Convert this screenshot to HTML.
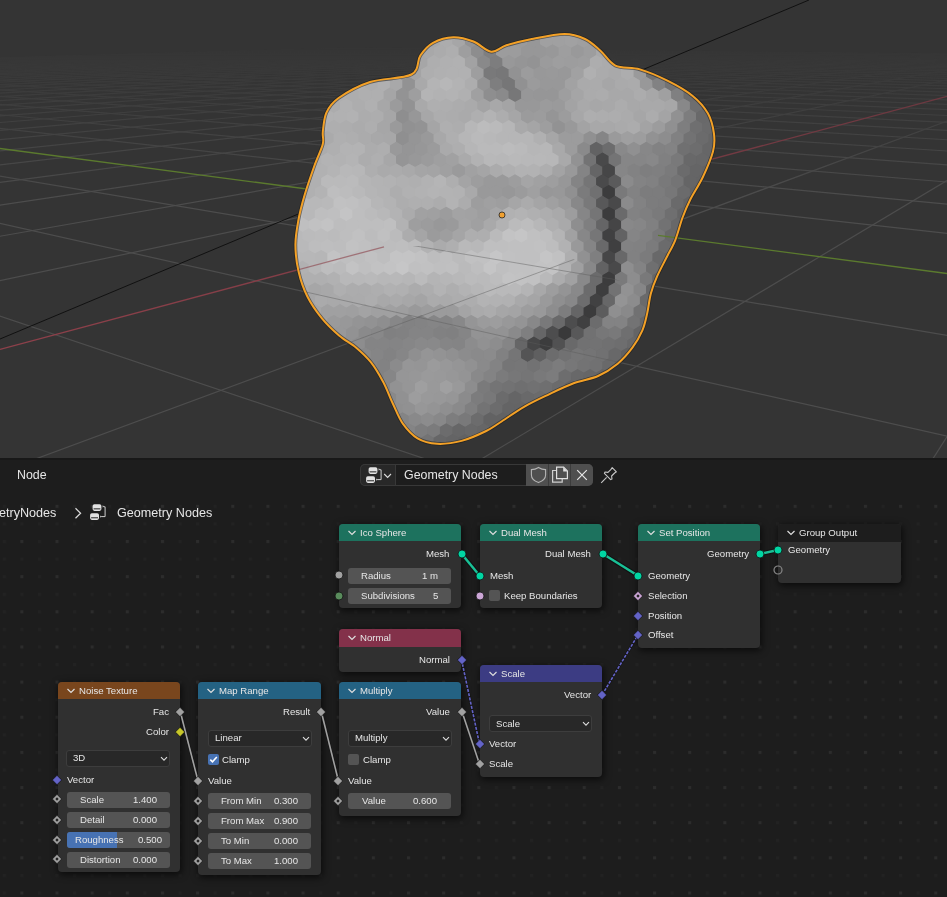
<!DOCTYPE html>
<html><head><meta charset="utf-8"><style>
html,body{margin:0;padding:0;width:947px;height:897px;overflow:hidden;background:#1d1d1d}
body{position:relative;font-family:"Liberation Sans",sans-serif}
.ab{position:absolute}
.t{position:absolute;height:20px;line-height:20px;white-space:nowrap;will-change:transform}
.nd{position:absolute;background:#303030;border-radius:4px;box-shadow:1px 2px 7px 1px rgba(0,0,0,0.6)}
.hd{position:absolute;border-radius:4px 4px 0 0}
.fd{position:absolute;height:16px;background:#545454;border-radius:3px;overflow:hidden}
.dd{position:absolute;height:17px;background:#282828;border-radius:3px;box-sizing:border-box;border:1px solid #3d3d3d}
.cb{position:absolute;width:11px;height:11px;background:#545454;border-radius:2px}
#ne{position:absolute;left:0;top:458px;width:947px;height:439px;background-color:#1d1d1d;
background-image:radial-gradient(circle at 1px 1px,#2c2c2c 1px,transparent 1.2px);
background-size:35px 35px;background-position:21.5px 47.5px}
</style></head><body>
<svg width="947" height="458" viewBox="0 0 947 458" style="position:absolute;left:0;top:0">
<defs><clipPath id="bc"><path d="M411.4,74.5 C419.8,70.1 416.7,60.8 420.3,55.5 C423.9,50.2 427.5,45.8 433.0,42.8 C438.5,39.8 446.4,37.4 453.2,37.2 C459.9,37.0 467.2,39.1 473.5,41.5 C479.8,43.9 485.7,51.1 491.2,51.7 C496.7,52.3 499.6,47.4 506.4,45.3 C513.2,43.2 522.1,40.9 531.8,39.0 C541.5,37.1 555.8,34.0 564.7,34.0 C573.6,34.0 579.1,36.3 585.0,39.0 C590.9,41.7 595.1,46.0 600.2,50.4 C605.3,54.8 608.8,62.4 615.4,65.6 C622.0,68.8 631.3,66.9 640.0,69.4 C648.7,71.9 658.6,76.3 667.4,80.7 C676.2,85.1 685.9,90.5 692.7,96.0 C699.5,101.5 704.5,107.3 708.0,113.6 C711.5,119.9 713.2,127.7 714.0,134.0 C714.8,140.3 714.9,144.4 713.0,151.6 C711.1,158.8 706.7,169.0 702.9,177.0 C699.1,185.0 693.6,193.1 690.2,199.8 C686.8,206.6 685.1,210.8 682.6,217.5 C680.1,224.2 678.0,233.2 675.4,239.8 C672.8,246.4 669.9,250.9 666.8,257.0 C663.7,263.1 659.7,270.5 657.0,276.6 C654.3,282.7 652.4,287.7 650.8,293.8 C649.2,299.9 648.6,307.3 647.2,313.4 C645.8,319.5 644.8,324.9 642.3,330.6 C639.8,336.3 636.5,342.2 632.4,347.7 C628.3,353.2 623.4,359.0 617.7,363.7 C612.0,368.4 605.5,372.7 598.1,376.0 C590.8,379.3 581.8,380.2 573.6,383.3 C565.4,386.4 557.2,390.4 549.0,394.3 C540.8,398.2 532.7,401.9 524.5,406.6 C516.3,411.3 506.4,418.4 500.0,422.5 C493.6,426.6 492.6,427.9 486.2,431.0 C479.8,434.1 469.8,438.8 461.6,440.9 C453.4,443.0 444.5,444.2 437.1,443.8 C429.8,443.4 423.2,441.8 417.5,438.4 C411.8,435.0 406.9,429.4 402.8,423.7 C398.7,418.0 396.3,410.9 393.0,404.0 C389.7,397.1 386.9,388.9 383.2,382.0 C379.5,375.1 375.5,368.1 371.0,362.4 C366.5,356.7 361.5,352.2 356.2,347.7 C350.9,343.2 344.7,340.3 339.0,335.4 C333.3,330.5 327.2,324.8 321.9,318.3 C316.6,311.8 311.1,304.0 307.2,296.2 C303.3,288.4 300.6,280.3 298.6,271.7 C296.6,263.1 295.4,253.4 295.4,244.7 C295.4,236.0 297.0,227.8 298.5,219.5 C300.0,211.2 302.0,203.9 304.6,195.0 C307.2,186.1 311.3,174.5 314.3,166.0 C317.3,157.5 321.4,149.7 322.8,144.0 C324.2,138.3 322.2,137.2 322.8,132.0 C323.4,126.8 323.8,118.3 326.4,112.6 C329.0,106.9 331.3,103.1 338.6,98.0 C345.9,92.9 357.9,85.9 370.0,82.0 C382.1,78.1 403.0,78.9 411.4,74.5 Z"/></clipPath>
<filter id="b8" filterUnits="userSpaceOnUse" x="200" y="0" width="600" height="458"><feGaussianBlur stdDeviation="8"/></filter>
<filter id="b4" filterUnits="userSpaceOnUse" x="200" y="0" width="600" height="458"><feGaussianBlur stdDeviation="4"/></filter>
<filter id="b15" filterUnits="userSpaceOnUse" x="200" y="0" width="600" height="458"><feGaussianBlur stdDeviation="15"/></filter>
<filter id="b10" filterUnits="userSpaceOnUse" x="200" y="0" width="600" height="458"><feGaussianBlur stdDeviation="10"/></filter>
<filter id="b2" filterUnits="userSpaceOnUse" x="200" y="0" width="600" height="458"><feGaussianBlur stdDeviation="2"/></filter>
<filter id="b3" filterUnits="userSpaceOnUse" x="200" y="0" width="600" height="458"><feGaussianBlur stdDeviation="3"/></filter>
<filter id="b5" filterUnits="userSpaceOnUse" x="200" y="0" width="600" height="458"><feGaussianBlur stdDeviation="5"/></filter>
<filter id="b6" filterUnits="userSpaceOnUse" x="200" y="0" width="600" height="458"><feGaussianBlur stdDeviation="6"/></filter>
<pattern id="hexp" patternUnits="userSpaceOnUse" x="3" y="5" width="91.000" height="67.550">
<polygon points="-6.5,-3.8 -13.0,-7.5 -13.0,-15.0 -6.5,-18.8 -0.0,-15.0 0.0,-7.5" fill="#fff" fill-opacity="0.031"/>
<polygon points="6.5,-3.8 -0.0,-7.5 0.0,-15.0 6.5,-18.8 13.0,-15.0 13.0,-7.5" fill="#fff" fill-opacity="0.036"/>
<polygon points="19.5,-3.8 13.0,-7.5 13.0,-15.0 19.5,-18.8 26.0,-15.0 26.0,-7.5" fill="#fff" fill-opacity="0.017"/>
<polygon points="32.5,-3.8 26.0,-7.5 26.0,-15.0 32.5,-18.8 39.0,-15.0 39.0,-7.5" fill="#fff" fill-opacity="0.001"/>
<polygon points="45.5,-3.8 39.0,-7.5 39.0,-15.0 45.5,-18.8 52.0,-15.0 52.0,-7.5" fill="#000" fill-opacity="0.039"/>
<polygon points="58.5,-3.8 52.0,-7.5 52.0,-15.0 58.5,-18.8 65.0,-15.0 65.0,-7.5" fill="#000" fill-opacity="0.004"/>
<polygon points="71.5,-3.8 65.0,-7.5 65.0,-15.0 71.5,-18.8 78.0,-15.0 78.0,-7.5" fill="#000" fill-opacity="0.042"/>
<polygon points="84.5,-3.8 78.0,-7.5 78.0,-15.0 84.5,-18.8 91.0,-15.0 91.0,-7.5" fill="#fff" fill-opacity="0.031"/>
<polygon points="97.5,-3.8 91.0,-7.5 91.0,-15.0 97.5,-18.8 104.0,-15.0 104.0,-7.5" fill="#fff" fill-opacity="0.036"/>
<polygon points="-13.0,7.5 -19.5,3.8 -19.5,-3.8 -13.0,-7.5 -6.5,-3.8 -6.5,3.8" fill="#fff" fill-opacity="0.035"/>
<polygon points="0.0,7.5 -6.5,3.8 -6.5,-3.8 -0.0,-7.5 6.5,-3.8 6.5,3.8" fill="#fff" fill-opacity="0.041"/>
<polygon points="13.0,7.5 6.5,3.8 6.5,-3.8 13.0,-7.5 19.5,-3.8 19.5,3.8" fill="#000" fill-opacity="0.044"/>
<polygon points="26.0,7.5 19.5,3.8 19.5,-3.8 26.0,-7.5 32.5,-3.8 32.5,3.8" fill="#fff" fill-opacity="0.055"/>
<polygon points="39.0,7.5 32.5,3.8 32.5,-3.8 39.0,-7.5 45.5,-3.8 45.5,3.8" fill="#000" fill-opacity="0.031"/>
<polygon points="52.0,7.5 45.5,3.8 45.5,-3.8 52.0,-7.5 58.5,-3.8 58.5,3.8" fill="#000" fill-opacity="0.032"/>
<polygon points="65.0,7.5 58.5,3.8 58.5,-3.8 65.0,-7.5 71.5,-3.8 71.5,3.8" fill="#fff" fill-opacity="0.015"/>
<polygon points="78.0,7.5 71.5,3.8 71.5,-3.8 78.0,-7.5 84.5,-3.8 84.5,3.8" fill="#fff" fill-opacity="0.035"/>
<polygon points="91.0,7.5 84.5,3.8 84.5,-3.8 91.0,-7.5 97.5,-3.8 97.5,3.8" fill="#fff" fill-opacity="0.041"/>
<polygon points="-6.5,18.8 -13.0,15.0 -13.0,7.5 -6.5,3.8 -0.0,7.5 0.0,15.0" fill="#fff" fill-opacity="0.025"/>
<polygon points="6.5,18.8 -0.0,15.0 0.0,7.5 6.5,3.8 13.0,7.5 13.0,15.0" fill="#000" fill-opacity="0.043"/>
<polygon points="19.5,18.8 13.0,15.0 13.0,7.5 19.5,3.8 26.0,7.5 26.0,15.0" fill="#fff" fill-opacity="0.010"/>
<polygon points="32.5,18.8 26.0,15.0 26.0,7.5 32.5,3.8 39.0,7.5 39.0,15.0" fill="#000" fill-opacity="0.042"/>
<polygon points="45.5,18.8 39.0,15.0 39.0,7.5 45.5,3.8 52.0,7.5 52.0,15.0" fill="#fff" fill-opacity="0.057"/>
<polygon points="58.5,18.8 52.0,15.0 52.0,7.5 58.5,3.8 65.0,7.5 65.0,15.0" fill="#fff" fill-opacity="0.055"/>
<polygon points="71.5,18.8 65.0,15.0 65.0,7.5 71.5,3.8 78.0,7.5 78.0,15.0" fill="#fff" fill-opacity="0.045"/>
<polygon points="84.5,18.8 78.0,15.0 78.0,7.5 84.5,3.8 91.0,7.5 91.0,15.0" fill="#fff" fill-opacity="0.025"/>
<polygon points="97.5,18.8 91.0,15.0 91.0,7.5 97.5,3.8 104.0,7.5 104.0,15.0" fill="#000" fill-opacity="0.043"/>
<polygon points="-13.0,30.0 -19.5,26.3 -19.5,18.8 -13.0,15.0 -6.5,18.8 -6.5,26.3" fill="#000" fill-opacity="0.059"/>
<polygon points="0.0,30.0 -6.5,26.3 -6.5,18.8 -0.0,15.0 6.5,18.8 6.5,26.3" fill="#000" fill-opacity="0.055"/>
<polygon points="13.0,30.0 6.5,26.3 6.5,18.8 13.0,15.0 19.5,18.8 19.5,26.3" fill="#000" fill-opacity="0.052"/>
<polygon points="26.0,30.0 19.5,26.3 19.5,18.8 26.0,15.0 32.5,18.8 32.5,26.3" fill="#fff" fill-opacity="0.032"/>
<polygon points="39.0,30.0 32.5,26.3 32.5,18.8 39.0,15.0 45.5,18.8 45.5,26.3" fill="#000" fill-opacity="0.049"/>
<polygon points="52.0,30.0 45.5,26.3 45.5,18.8 52.0,15.0 58.5,18.8 58.5,26.3" fill="#000" fill-opacity="0.012"/>
<polygon points="65.0,30.0 58.5,26.3 58.5,18.8 65.0,15.0 71.5,18.8 71.5,26.3" fill="#000" fill-opacity="0.008"/>
<polygon points="78.0,30.0 71.5,26.3 71.5,18.8 78.0,15.0 84.5,18.8 84.5,26.3" fill="#000" fill-opacity="0.059"/>
<polygon points="91.0,30.0 84.5,26.3 84.5,18.8 91.0,15.0 97.5,18.8 97.5,26.3" fill="#000" fill-opacity="0.055"/>
<polygon points="-6.5,41.3 -13.0,37.5 -13.0,30.0 -6.5,26.3 -0.0,30.0 0.0,37.5" fill="#000" fill-opacity="0.008"/>
<polygon points="6.5,41.3 -0.0,37.5 0.0,30.0 6.5,26.3 13.0,30.0 13.0,37.5" fill="#fff" fill-opacity="0.012"/>
<polygon points="19.5,41.3 13.0,37.5 13.0,30.0 19.5,26.3 26.0,30.0 26.0,37.5" fill="#000" fill-opacity="0.012"/>
<polygon points="32.5,41.3 26.0,37.5 26.0,30.0 32.5,26.3 39.0,30.0 39.0,37.5" fill="#fff" fill-opacity="0.056"/>
<polygon points="45.5,41.3 39.0,37.5 39.0,30.0 45.5,26.3 52.0,30.0 52.0,37.5" fill="#000" fill-opacity="0.056"/>
<polygon points="58.5,41.3 52.0,37.5 52.0,30.0 58.5,26.3 65.0,30.0 65.0,37.5" fill="#000" fill-opacity="0.044"/>
<polygon points="71.5,41.3 65.0,37.5 65.0,30.0 71.5,26.3 78.0,30.0 78.0,37.5" fill="#000" fill-opacity="0.038"/>
<polygon points="84.5,41.3 78.0,37.5 78.0,30.0 84.5,26.3 91.0,30.0 91.0,37.5" fill="#000" fill-opacity="0.008"/>
<polygon points="97.5,41.3 91.0,37.5 91.0,30.0 97.5,26.3 104.0,30.0 104.0,37.5" fill="#fff" fill-opacity="0.012"/>
<polygon points="-13.0,52.5 -19.5,48.8 -19.5,41.3 -13.0,37.5 -6.5,41.3 -6.5,48.8" fill="#000" fill-opacity="0.009"/>
<polygon points="0.0,52.5 -6.5,48.8 -6.5,41.3 -0.0,37.5 6.5,41.3 6.5,48.8" fill="#000" fill-opacity="0.023"/>
<polygon points="13.0,52.5 6.5,48.8 6.5,41.3 13.0,37.5 19.5,41.3 19.5,48.8" fill="#000" fill-opacity="0.000"/>
<polygon points="26.0,52.5 19.5,48.8 19.5,41.3 26.0,37.5 32.5,41.3 32.5,48.8" fill="#fff" fill-opacity="0.039"/>
<polygon points="39.0,52.5 32.5,48.8 32.5,41.3 39.0,37.5 45.5,41.3 45.5,48.8" fill="#000" fill-opacity="0.030"/>
<polygon points="52.0,52.5 45.5,48.8 45.5,41.3 52.0,37.5 58.5,41.3 58.5,48.8" fill="#000" fill-opacity="0.050"/>
<polygon points="65.0,52.5 58.5,48.8 58.5,41.3 65.0,37.5 71.5,41.3 71.5,48.8" fill="#000" fill-opacity="0.055"/>
<polygon points="78.0,52.5 71.5,48.8 71.5,41.3 78.0,37.5 84.5,41.3 84.5,48.8" fill="#000" fill-opacity="0.009"/>
<polygon points="91.0,52.5 84.5,48.8 84.5,41.3 91.0,37.5 97.5,41.3 97.5,48.8" fill="#000" fill-opacity="0.023"/>
<polygon points="-6.5,63.8 -13.0,60.0 -13.0,52.5 -6.5,48.8 -0.0,52.5 0.0,60.0" fill="#fff" fill-opacity="0.031"/>
<polygon points="6.5,63.8 -0.0,60.0 0.0,52.5 6.5,48.8 13.0,52.5 13.0,60.0" fill="#fff" fill-opacity="0.036"/>
<polygon points="19.5,63.8 13.0,60.0 13.0,52.5 19.5,48.8 26.0,52.5 26.0,60.0" fill="#fff" fill-opacity="0.017"/>
<polygon points="32.5,63.8 26.0,60.0 26.0,52.5 32.5,48.8 39.0,52.5 39.0,60.0" fill="#fff" fill-opacity="0.001"/>
<polygon points="45.5,63.8 39.0,60.0 39.0,52.5 45.5,48.8 52.0,52.5 52.0,60.0" fill="#000" fill-opacity="0.039"/>
<polygon points="58.5,63.8 52.0,60.0 52.0,52.5 58.5,48.8 65.0,52.5 65.0,60.0" fill="#000" fill-opacity="0.004"/>
<polygon points="71.5,63.8 65.0,60.0 65.0,52.5 71.5,48.8 78.0,52.5 78.0,60.0" fill="#000" fill-opacity="0.042"/>
<polygon points="84.5,63.8 78.0,60.0 78.0,52.5 84.5,48.8 91.0,52.5 91.0,60.0" fill="#fff" fill-opacity="0.031"/>
<polygon points="97.5,63.8 91.0,60.0 91.0,52.5 97.5,48.8 104.0,52.5 104.0,60.0" fill="#fff" fill-opacity="0.036"/>
<polygon points="-13.0,75.1 -19.5,71.3 -19.5,63.8 -13.0,60.0 -6.5,63.8 -6.5,71.3" fill="#fff" fill-opacity="0.035"/>
<polygon points="0.0,75.1 -6.5,71.3 -6.5,63.8 -0.0,60.0 6.5,63.8 6.5,71.3" fill="#fff" fill-opacity="0.041"/>
<polygon points="13.0,75.1 6.5,71.3 6.5,63.8 13.0,60.0 19.5,63.8 19.5,71.3" fill="#000" fill-opacity="0.044"/>
<polygon points="26.0,75.1 19.5,71.3 19.5,63.8 26.0,60.0 32.5,63.8 32.5,71.3" fill="#fff" fill-opacity="0.055"/>
<polygon points="39.0,75.1 32.5,71.3 32.5,63.8 39.0,60.0 45.5,63.8 45.5,71.3" fill="#000" fill-opacity="0.031"/>
<polygon points="52.0,75.1 45.5,71.3 45.5,63.8 52.0,60.0 58.5,63.8 58.5,71.3" fill="#000" fill-opacity="0.032"/>
<polygon points="65.0,75.1 58.5,71.3 58.5,63.8 65.0,60.0 71.5,63.8 71.5,71.3" fill="#fff" fill-opacity="0.015"/>
<polygon points="78.0,75.1 71.5,71.3 71.5,63.8 78.0,60.0 84.5,63.8 84.5,71.3" fill="#fff" fill-opacity="0.035"/>
<polygon points="91.0,75.1 84.5,71.3 84.5,63.8 91.0,60.0 97.5,63.8 97.5,71.3" fill="#fff" fill-opacity="0.041"/>
</pattern>
</defs>
<rect width="947" height="458" fill="#343434"/>
<defs><linearGradient id="gf" x1="0" y1="0" x2="0" y2="1" gradientUnits="userSpaceOnUse" x2x="0"><stop offset="0" stop-color="#000"/></linearGradient>
<linearGradient id="gm" gradientUnits="userSpaceOnUse" x1="0" y1="40" x2="0" y2="200"><stop offset="0" stop-color="#000"/><stop offset="1" stop-color="#fff"/></linearGradient>
<mask id="gmask" maskUnits="userSpaceOnUse" x="0" y="0" width="947" height="458"><rect width="947" height="458" fill="url(#gm)"/></mask></defs>
<g mask="url(#gmask)" stroke="#4d4d4d" stroke-width="1.2">
<line x1="1199.7" y1="56.5" x2="353.6" y2="48.0"/>
<line x1="1199.5" y1="57.2" x2="342.4" y2="48.4"/>
<line x1="1199.3" y1="58.0" x2="331.0" y2="48.7"/>
<line x1="1199.8" y1="58.8" x2="319.2" y2="49.0"/>
<line x1="1199.6" y1="59.6" x2="307.1" y2="49.3"/>
<line x1="1199.4" y1="60.5" x2="294.7" y2="49.7"/>
<line x1="1200.0" y1="61.4" x2="281.9" y2="50.0"/>
<line x1="1199.8" y1="62.4" x2="268.8" y2="50.4"/>
<line x1="1199.5" y1="63.4" x2="255.3" y2="50.8"/>
<line x1="1199.3" y1="64.4" x2="241.4" y2="51.1"/>
<line x1="1199.9" y1="65.6" x2="227.1" y2="51.5"/>
<line x1="1199.7" y1="66.8" x2="212.4" y2="51.9"/>
<line x1="1199.5" y1="68.1" x2="197.2" y2="52.4"/>
<line x1="1199.2" y1="69.4" x2="181.5" y2="52.8"/>
<line x1="1199.9" y1="70.9" x2="165.3" y2="53.2"/>
<line x1="1199.6" y1="72.4" x2="148.7" y2="53.7"/>
<line x1="1199.3" y1="74.0" x2="131.4" y2="54.2"/>
<line x1="1199.0" y1="75.8" x2="113.7" y2="54.6"/>
<line x1="1199.8" y1="77.7" x2="95.3" y2="55.2"/>
<line x1="1199.5" y1="79.7" x2="76.3" y2="55.7"/>
<line x1="1199.2" y1="81.9" x2="56.6" y2="56.2"/>
<line x1="1198.8" y1="84.3" x2="36.2" y2="56.8"/>
<line x1="1199.7" y1="86.9" x2="15.1" y2="57.4"/>
<line x1="1199.4" y1="89.7" x2="-6.7" y2="58.0"/>
<line x1="1199.0" y1="92.8" x2="-29.4" y2="58.6"/>
<line x1="1198.5" y1="96.2" x2="-53.0" y2="59.2"/>
<line x1="1199.6" y1="100.0" x2="-77.5" y2="59.9"/>
<line x1="1199.2" y1="104.1" x2="-102.9" y2="60.6"/>
<line x1="1198.7" y1="108.8" x2="-129.4" y2="61.3"/>
<line x1="1200.0" y1="114.0" x2="-156.9" y2="62.1"/>
<line x1="1199.5" y1="120.0" x2="-185.7" y2="62.9"/>
<line x1="1198.9" y1="126.7" x2="-199.8" y2="64.4"/>
<line x1="1198.2" y1="134.5" x2="-199.9" y2="66.8"/>
<line x1="1199.9" y1="143.7" x2="-199.8" y2="69.7"/>
<line x1="1199.2" y1="154.4" x2="-199.9" y2="73.0"/>
<line x1="1198.3" y1="167.2" x2="-199.7" y2="77.0"/>
<line x1="1197.2" y1="182.9" x2="-199.8" y2="81.9"/>
<line x1="1199.7" y1="202.7" x2="-200.0" y2="88.0"/>
<line x1="1187.7" y1="56.4" x2="783.1" y2="695.4"/>
<line x1="1198.5" y1="227.8" x2="-199.8" y2="95.9"/>
<line x1="1155.2" y1="56.0" x2="81.7" y2="698.1"/>
<line x1="1197.0" y1="261.1" x2="-200.0" y2="106.3"/>
<line x1="1123.7" y1="55.7" x2="-190.9" y2="542.9"/>
<line x1="1199.0" y1="377.7" x2="-199.9" y2="142.5"/>
<line x1="1063.7" y1="55.1" x2="-197.4" y2="322.6"/>
<line x1="1196.2" y1="492.0" x2="-199.4" y2="178.5"/>
<line x1="1035.0" y1="54.8" x2="-196.6" y2="270.7"/>
<line x1="1134.5" y1="697.2" x2="-199.8" y2="248.9"/>
<line x1="1007.2" y1="54.6" x2="-199.9" y2="235.1"/>
<line x1="178.0" y1="698.8" x2="-198.2" y2="452.2"/>
<line x1="980.2" y1="54.3" x2="-199.0" y2="208.4"/>
<line x1="954.0" y1="54.0" x2="-198.3" y2="187.9"/>
<line x1="928.5" y1="53.8" x2="-197.7" y2="171.6"/>
<line x1="903.8" y1="53.5" x2="-199.7" y2="158.7"/>
<line x1="879.7" y1="53.3" x2="-199.1" y2="147.8"/>
<line x1="856.3" y1="53.1" x2="-198.6" y2="138.6"/>
<line x1="833.5" y1="52.8" x2="-198.2" y2="130.8"/>
<line x1="811.4" y1="52.6" x2="-199.6" y2="124.2"/>
<line x1="789.8" y1="52.4" x2="-199.2" y2="118.3"/>
<line x1="768.7" y1="52.2" x2="-198.8" y2="113.1"/>
<line x1="748.3" y1="52.0" x2="-199.9" y2="108.6"/>
<line x1="728.3" y1="51.8" x2="-199.5" y2="104.5"/>
<line x1="708.8" y1="51.6" x2="-199.2" y2="100.8"/>
<line x1="689.8" y1="51.4" x2="-198.9" y2="97.5"/>
<line x1="671.3" y1="51.2" x2="-199.8" y2="94.5"/>
<line x1="653.2" y1="51.0" x2="-199.5" y2="91.7"/>
<line x1="635.5" y1="50.9" x2="-199.2" y2="89.2"/>
<line x1="618.3" y1="50.7" x2="-199.0" y2="86.9"/>
<line x1="601.5" y1="50.5" x2="-199.7" y2="84.8"/>
<line x1="585.0" y1="50.4" x2="-199.5" y2="82.9"/>
<line x1="568.9" y1="50.2" x2="-199.2" y2="81.0"/>
<line x1="553.2" y1="50.0" x2="-199.9" y2="79.4"/>
<line x1="537.8" y1="49.9" x2="-199.7" y2="77.8"/>
<line x1="522.8" y1="49.7" x2="-199.5" y2="76.3"/>
<line x1="508.1" y1="49.6" x2="-199.2" y2="74.9"/>
<line x1="493.7" y1="49.4" x2="-199.9" y2="73.6"/>
<line x1="479.6" y1="49.3" x2="-199.6" y2="72.4"/>
<line x1="465.8" y1="49.2" x2="-199.4" y2="71.2"/>
<line x1="452.3" y1="49.0" x2="-200.0" y2="70.2"/>
<line x1="439.1" y1="48.9" x2="-199.8" y2="69.1"/>
<line x1="426.1" y1="48.8" x2="-199.6" y2="68.2"/>
<line x1="413.4" y1="48.6" x2="-199.4" y2="67.2"/>
<line x1="401.0" y1="48.5" x2="-199.9" y2="66.4"/>
<line x1="388.8" y1="48.4" x2="-199.7" y2="65.5"/>
<line x1="376.8" y1="48.3" x2="-199.6" y2="64.7"/>
<line x1="365.1" y1="48.2" x2="-199.4" y2="64.0"/>
<line x1="353.6" y1="48.0" x2="-199.9" y2="63.3"/>
</g>
<defs><linearGradient id="redg" gradientUnits="userSpaceOnUse" x1="0" y1="0" x2="947" y2="0"><stop offset="0" stop-color="#8e404a"/><stop offset="1" stop-color="#6c3840"/></linearGradient></defs>
<path d="M0,349.4 L947,96.4" stroke="url(#redg)" stroke-width="1.3"/>
<line x1="0" y1="148.5" x2="947" y2="273.5" stroke="#5b7a2e" stroke-width="1.3"/>
<line x1="0" y1="339" x2="809" y2="0" stroke="#111" stroke-width="1"/>
<g clip-path="url(#bc)">
<g filter="url(#b10)">
<rect x="260" y="-2" width="36" height="36" fill="#a7a7a8"/>
<rect x="295" y="-2" width="36" height="36" fill="#a7a7a8"/>
<rect x="330" y="-2" width="36" height="36" fill="#a7a7a8"/>
<rect x="365" y="-2" width="36" height="36" fill="#a7a7a8"/>
<rect x="400" y="-2" width="36" height="36" fill="#a0a0a1"/>
<rect x="435" y="-2" width="36" height="36" fill="#b7b7b8"/>
<rect x="470" y="-2" width="36" height="36" fill="#909091"/>
<rect x="505" y="-2" width="36" height="36" fill="#979798"/>
<rect x="540" y="-2" width="36" height="36" fill="#a7a7a8"/>
<rect x="575" y="-2" width="36" height="36" fill="#acacad"/>
<rect x="610" y="-2" width="36" height="36" fill="#acacad"/>
<rect x="645" y="-2" width="36" height="36" fill="#a0a0a1"/>
<rect x="680" y="-2" width="36" height="36" fill="#a0a0a1"/>
<rect x="715" y="-2" width="36" height="36" fill="#a0a0a1"/>
<rect x="260" y="33" width="36" height="36" fill="#a7a7a8"/>
<rect x="295" y="33" width="36" height="36" fill="#a7a7a8"/>
<rect x="330" y="33" width="36" height="36" fill="#a7a7a8"/>
<rect x="365" y="33" width="36" height="36" fill="#a7a7a8"/>
<rect x="400" y="33" width="36" height="36" fill="#a0a0a1"/>
<rect x="435" y="33" width="36" height="36" fill="#b7b7b8"/>
<rect x="470" y="33" width="36" height="36" fill="#909091"/>
<rect x="505" y="33" width="36" height="36" fill="#979798"/>
<rect x="540" y="33" width="36" height="36" fill="#a7a7a8"/>
<rect x="575" y="33" width="36" height="36" fill="#acacad"/>
<rect x="610" y="33" width="36" height="36" fill="#acacad"/>
<rect x="645" y="33" width="36" height="36" fill="#a0a0a1"/>
<rect x="680" y="33" width="36" height="36" fill="#a0a0a1"/>
<rect x="715" y="33" width="36" height="36" fill="#a0a0a1"/>
<rect x="260" y="68" width="36" height="36" fill="#acacad"/>
<rect x="295" y="68" width="36" height="36" fill="#acacad"/>
<rect x="330" y="68" width="36" height="36" fill="#aeaeaf"/>
<rect x="365" y="68" width="36" height="36" fill="#aeaeaf"/>
<rect x="400" y="68" width="36" height="36" fill="#949495"/>
<rect x="435" y="68" width="36" height="36" fill="#bebebf"/>
<rect x="470" y="68" width="36" height="36" fill="#8c8c8d"/>
<rect x="505" y="68" width="36" height="36" fill="#909091"/>
<rect x="540" y="68" width="36" height="36" fill="#949495"/>
<rect x="575" y="68" width="36" height="36" fill="#aeaeaf"/>
<rect x="610" y="68" width="36" height="36" fill="#b3b3b4"/>
<rect x="645" y="68" width="36" height="36" fill="#a7a7a8"/>
<rect x="680" y="68" width="36" height="36" fill="#89898a"/>
<rect x="715" y="68" width="36" height="36" fill="#89898a"/>
<rect x="260" y="103" width="36" height="36" fill="#acacad"/>
<rect x="295" y="103" width="36" height="36" fill="#acacad"/>
<rect x="330" y="103" width="36" height="36" fill="#aeaeaf"/>
<rect x="365" y="103" width="36" height="36" fill="#acacad"/>
<rect x="400" y="103" width="36" height="36" fill="#909091"/>
<rect x="435" y="103" width="36" height="36" fill="#bebebf"/>
<rect x="470" y="103" width="36" height="36" fill="#b7b7b8"/>
<rect x="505" y="103" width="36" height="36" fill="#a7a7a8"/>
<rect x="540" y="103" width="36" height="36" fill="#909091"/>
<rect x="575" y="103" width="36" height="36" fill="#acacad"/>
<rect x="610" y="103" width="36" height="36" fill="#b0b0b1"/>
<rect x="645" y="103" width="36" height="36" fill="#979798"/>
<rect x="680" y="103" width="36" height="36" fill="#79797a"/>
<rect x="715" y="103" width="36" height="36" fill="#79797a"/>
<rect x="260" y="138" width="36" height="36" fill="#acacad"/>
<rect x="295" y="138" width="36" height="36" fill="#acacad"/>
<rect x="330" y="138" width="36" height="36" fill="#b1b1b2"/>
<rect x="365" y="138" width="36" height="36" fill="#acacad"/>
<rect x="400" y="138" width="36" height="36" fill="#979798"/>
<rect x="435" y="138" width="36" height="36" fill="#a7a7a8"/>
<rect x="470" y="138" width="36" height="36" fill="#b7b7b8"/>
<rect x="505" y="138" width="36" height="36" fill="#c3c3c4"/>
<rect x="540" y="138" width="36" height="36" fill="#a0a0a1"/>
<rect x="575" y="138" width="36" height="36" fill="#8c8c8d"/>
<rect x="610" y="138" width="36" height="36" fill="#89898a"/>
<rect x="645" y="138" width="36" height="36" fill="#838384"/>
<rect x="680" y="138" width="36" height="36" fill="#666667"/>
<rect x="715" y="138" width="36" height="36" fill="#666667"/>
<rect x="260" y="173" width="36" height="36" fill="#b3b3b4"/>
<rect x="295" y="173" width="36" height="36" fill="#b3b3b4"/>
<rect x="330" y="173" width="36" height="36" fill="#bebebf"/>
<rect x="365" y="173" width="36" height="36" fill="#b0b0b1"/>
<rect x="400" y="173" width="36" height="36" fill="#b4b4b5"/>
<rect x="435" y="173" width="36" height="36" fill="#b7b7b8"/>
<rect x="470" y="173" width="36" height="36" fill="#979798"/>
<rect x="505" y="173" width="36" height="36" fill="#a0a0a1"/>
<rect x="540" y="173" width="36" height="36" fill="#949495"/>
<rect x="575" y="173" width="36" height="36" fill="#79797a"/>
<rect x="610" y="173" width="36" height="36" fill="#808081"/>
<rect x="645" y="173" width="36" height="36" fill="#7a7a7b"/>
<rect x="680" y="173" width="36" height="36" fill="#636364"/>
<rect x="715" y="173" width="36" height="36" fill="#636364"/>
<rect x="260" y="208" width="36" height="36" fill="#bebebf"/>
<rect x="295" y="208" width="36" height="36" fill="#bebebf"/>
<rect x="330" y="208" width="36" height="36" fill="#cececf"/>
<rect x="365" y="208" width="36" height="36" fill="#b7b7b8"/>
<rect x="400" y="208" width="36" height="36" fill="#a0a0a1"/>
<rect x="435" y="208" width="36" height="36" fill="#a7a7a8"/>
<rect x="470" y="208" width="36" height="36" fill="#a3a3a4"/>
<rect x="505" y="208" width="36" height="36" fill="#bebebf"/>
<rect x="540" y="208" width="36" height="36" fill="#b0b0b1"/>
<rect x="575" y="208" width="36" height="36" fill="#7d7d7e"/>
<rect x="610" y="208" width="36" height="36" fill="#868687"/>
<rect x="645" y="208" width="36" height="36" fill="#79797a"/>
<rect x="680" y="208" width="36" height="36" fill="#636364"/>
<rect x="715" y="208" width="36" height="36" fill="#636364"/>
<rect x="260" y="243" width="36" height="36" fill="#b7b7b8"/>
<rect x="295" y="243" width="36" height="36" fill="#b7b7b8"/>
<rect x="330" y="243" width="36" height="36" fill="#c3c3c4"/>
<rect x="365" y="243" width="36" height="36" fill="#c3c3c4"/>
<rect x="400" y="243" width="36" height="36" fill="#c9c9ca"/>
<rect x="435" y="243" width="36" height="36" fill="#bebebf"/>
<rect x="470" y="243" width="36" height="36" fill="#c3c3c4"/>
<rect x="505" y="243" width="36" height="36" fill="#cccccd"/>
<rect x="540" y="243" width="36" height="36" fill="#c3c3c4"/>
<rect x="575" y="243" width="36" height="36" fill="#89898a"/>
<rect x="610" y="243" width="36" height="36" fill="#868687"/>
<rect x="645" y="243" width="36" height="36" fill="#79797a"/>
<rect x="680" y="243" width="36" height="36" fill="#6f6f70"/>
<rect x="715" y="243" width="36" height="36" fill="#6f6f70"/>
<rect x="260" y="278" width="36" height="36" fill="#a7a7a8"/>
<rect x="295" y="278" width="36" height="36" fill="#a7a7a8"/>
<rect x="330" y="278" width="36" height="36" fill="#acacad"/>
<rect x="365" y="278" width="36" height="36" fill="#aeaeaf"/>
<rect x="400" y="278" width="36" height="36" fill="#acacad"/>
<rect x="435" y="278" width="36" height="36" fill="#aeaeaf"/>
<rect x="470" y="278" width="36" height="36" fill="#b7b7b8"/>
<rect x="505" y="278" width="36" height="36" fill="#b1b1b2"/>
<rect x="540" y="278" width="36" height="36" fill="#979798"/>
<rect x="575" y="278" width="36" height="36" fill="#79797a"/>
<rect x="610" y="278" width="36" height="36" fill="#9a9a9b"/>
<rect x="645" y="278" width="36" height="36" fill="#7d7d7e"/>
<rect x="680" y="278" width="36" height="36" fill="#727273"/>
<rect x="715" y="278" width="36" height="36" fill="#727273"/>
<rect x="260" y="313" width="36" height="36" fill="#a0a0a1"/>
<rect x="295" y="313" width="36" height="36" fill="#a0a0a1"/>
<rect x="330" y="313" width="36" height="36" fill="#949495"/>
<rect x="365" y="313" width="36" height="36" fill="#868687"/>
<rect x="400" y="313" width="36" height="36" fill="#79797a"/>
<rect x="435" y="313" width="36" height="36" fill="#808081"/>
<rect x="470" y="313" width="36" height="36" fill="#949495"/>
<rect x="505" y="313" width="36" height="36" fill="#89898a"/>
<rect x="540" y="313" width="36" height="36" fill="#727273"/>
<rect x="575" y="313" width="36" height="36" fill="#727273"/>
<rect x="610" y="313" width="36" height="36" fill="#7d7d7e"/>
<rect x="645" y="313" width="36" height="36" fill="#727273"/>
<rect x="680" y="313" width="36" height="36" fill="#727273"/>
<rect x="715" y="313" width="36" height="36" fill="#727273"/>
<rect x="260" y="348" width="36" height="36" fill="#979798"/>
<rect x="295" y="348" width="36" height="36" fill="#979798"/>
<rect x="330" y="348" width="36" height="36" fill="#909091"/>
<rect x="365" y="348" width="36" height="36" fill="#838384"/>
<rect x="400" y="348" width="36" height="36" fill="#8c8c8d"/>
<rect x="435" y="348" width="36" height="36" fill="#909091"/>
<rect x="470" y="348" width="36" height="36" fill="#868687"/>
<rect x="505" y="348" width="36" height="36" fill="#6f6f70"/>
<rect x="540" y="348" width="36" height="36" fill="#666667"/>
<rect x="575" y="348" width="36" height="36" fill="#636364"/>
<rect x="610" y="348" width="36" height="36" fill="#626263"/>
<rect x="645" y="348" width="36" height="36" fill="#626263"/>
<rect x="680" y="348" width="36" height="36" fill="#626263"/>
<rect x="715" y="348" width="36" height="36" fill="#626263"/>
<rect x="260" y="383" width="36" height="36" fill="#89898a"/>
<rect x="295" y="383" width="36" height="36" fill="#89898a"/>
<rect x="330" y="383" width="36" height="36" fill="#89898a"/>
<rect x="365" y="383" width="36" height="36" fill="#868687"/>
<rect x="400" y="383" width="36" height="36" fill="#929293"/>
<rect x="435" y="383" width="36" height="36" fill="#89898a"/>
<rect x="470" y="383" width="36" height="36" fill="#747475"/>
<rect x="505" y="383" width="36" height="36" fill="#636364"/>
<rect x="540" y="383" width="36" height="36" fill="#5a5a5b"/>
<rect x="575" y="383" width="36" height="36" fill="#585859"/>
<rect x="610" y="383" width="36" height="36" fill="#585859"/>
<rect x="645" y="383" width="36" height="36" fill="#585859"/>
<rect x="680" y="383" width="36" height="36" fill="#585859"/>
<rect x="715" y="383" width="36" height="36" fill="#585859"/>
<rect x="260" y="418" width="36" height="36" fill="#7d7d7e"/>
<rect x="295" y="418" width="36" height="36" fill="#7d7d7e"/>
<rect x="330" y="418" width="36" height="36" fill="#7d7d7e"/>
<rect x="365" y="418" width="36" height="36" fill="#7a7a7b"/>
<rect x="400" y="418" width="36" height="36" fill="#7d7d7e"/>
<rect x="435" y="418" width="36" height="36" fill="#6f6f70"/>
<rect x="470" y="418" width="36" height="36" fill="#585859"/>
<rect x="505" y="418" width="36" height="36" fill="#4f4f50"/>
<rect x="540" y="418" width="36" height="36" fill="#4f4f50"/>
<rect x="575" y="418" width="36" height="36" fill="#4f4f50"/>
<rect x="610" y="418" width="36" height="36" fill="#4f4f50"/>
<rect x="645" y="418" width="36" height="36" fill="#4f4f50"/>
<rect x="680" y="418" width="36" height="36" fill="#4f4f50"/>
<rect x="715" y="418" width="36" height="36" fill="#4f4f50"/>
<rect x="260" y="453" width="36" height="36" fill="#7d7d7e"/>
<rect x="295" y="453" width="36" height="36" fill="#7d7d7e"/>
<rect x="330" y="453" width="36" height="36" fill="#7d7d7e"/>
<rect x="365" y="453" width="36" height="36" fill="#7a7a7b"/>
<rect x="400" y="453" width="36" height="36" fill="#7d7d7e"/>
<rect x="435" y="453" width="36" height="36" fill="#6f6f70"/>
<rect x="470" y="453" width="36" height="36" fill="#585859"/>
<rect x="505" y="453" width="36" height="36" fill="#4f4f50"/>
<rect x="540" y="453" width="36" height="36" fill="#4f4f50"/>
<rect x="575" y="453" width="36" height="36" fill="#4f4f50"/>
<rect x="610" y="453" width="36" height="36" fill="#4f4f50"/>
<rect x="645" y="453" width="36" height="36" fill="#4f4f50"/>
<rect x="680" y="453" width="36" height="36" fill="#4f4f50"/>
<rect x="715" y="453" width="36" height="36" fill="#4f4f50"/>
</g>
<ellipse cx="520" cy="258" rx="38" ry="26" fill="#c2c2c2" filter="url(#b8)"/>
<ellipse cx="360" cy="232" rx="42" ry="22" fill="#bdbdbd" filter="url(#b8)"/>
<path d="M436,105 C460,125 500,140 555,158" stroke="#b9b9b9" stroke-width="26" fill="none" stroke-linecap="round" filter="url(#b8)"/>
<ellipse cx="625" cy="102" rx="56" ry="32" fill="#aaaaaa" filter="url(#b6)"/>
<radialGradient id="bg1" gradientUnits="userSpaceOnUse" cx="445" cy="85" r="52"><stop offset="0" stop-color="#b8b8b8"/><stop offset="0.55" stop-color="#adadad" stop-opacity="0.9"/><stop offset="1" stop-color="#888888" stop-opacity="0"/></radialGradient>
<path d="M405,85 C412,55 432,38 455,36 C475,37 488,47 494,55 C502,75 505,100 500,140 C470,145 430,140 405,130 Z" fill="url(#bg1)" filter="url(#b3)"/>
<path d="M470,45 C482,55 490,70 494,95" stroke="#868686" stroke-width="10" fill="none" stroke-linecap="round" filter="url(#b4)"/>
<path d="M492,54 C520,42 560,35 600,48 C590,62 575,75 565,92 C545,96 525,96 510,90 C505,75 498,62 492,54 Z" fill="#9a9a9a" filter="url(#b3)"/>
<path d="M505,60 C530,64 550,68 568,75" stroke="#8a8a8a" stroke-width="3" fill="none" stroke-linecap="round" filter="url(#b2)"/>
<path d="M486,50 C496,56 510,70 520,86 C524,94 524,100 522,104 C510,100 498,92 492,82 C488,70 486,60 486,50 Z" fill="#767676" filter="url(#b2)"/>
<ellipse cx="545" cy="112" rx="30" ry="12" fill="#9a9a9a" filter="url(#b6)"/>
<path d="M400,128 C415,150 440,167 470,178 C490,185 505,188 520,190" stroke="#979797" stroke-width="12" fill="none" stroke-linecap="round" filter="url(#b5)"/>
<ellipse cx="417" cy="336" rx="50" ry="12" fill="#848484" filter="url(#b6)"/>
<ellipse cx="435" cy="385" rx="35" ry="30" fill="#9c9c9c" filter="url(#b10)"/>
<ellipse cx="570" cy="378" rx="55" ry="25" fill="#7a7a7a" filter="url(#b8)"/>
<path d="M622,165 C627,200 628,240 625,275 C620,300 610,318 595,332" stroke="#a2a2a2" stroke-width="6" fill="none" stroke-linecap="round" filter="url(#b3)"/>
<path d="M708,112 C717,150 705,200 690,240 C677,270 665,300 655,335" stroke="#6c6c6c" stroke-width="20" fill="none" stroke-linecap="round" filter="url(#b8)"/>
<path d="M440,446 C480,440 520,420 570,395 C600,382 630,362 652,330" stroke="#6a6a6a" stroke-width="18" fill="none" stroke-linecap="round" filter="url(#b6)"/>
<path d="M652,330 C662,300 668,270 680,240" stroke="#707070" stroke-width="14" fill="none" stroke-linecap="round" filter="url(#b6)"/>
<path d="M413,80 C405,105 401,130 400,162" stroke="#8c8c8c" stroke-width="10" fill="none" stroke-linecap="round" filter="url(#b3)"/>
<path d="M409,84 C395,102 382,122 371,141" stroke="#979797" stroke-width="4" fill="none" stroke-linecap="round" filter="url(#b2)"/>
<ellipse cx="440" cy="228" rx="24" ry="17" fill="#989898" filter="url(#b6)"/>
<clipPath id="rimc"><path d="M640,40 L730,40 L730,460 L420,460 L470,400 L600,360 L650,250 Z"/></clipPath>
<g clip-path="url(#rimc)"><path d="M411.4,74.5 C419.8,70.1 416.7,60.8 420.3,55.5 C423.9,50.2 427.5,45.8 433.0,42.8 C438.5,39.8 446.4,37.4 453.2,37.2 C459.9,37.0 467.2,39.1 473.5,41.5 C479.8,43.9 485.7,51.1 491.2,51.7 C496.7,52.3 499.6,47.4 506.4,45.3 C513.2,43.2 522.1,40.9 531.8,39.0 C541.5,37.1 555.8,34.0 564.7,34.0 C573.6,34.0 579.1,36.3 585.0,39.0 C590.9,41.7 595.1,46.0 600.2,50.4 C605.3,54.8 608.8,62.4 615.4,65.6 C622.0,68.8 631.3,66.9 640.0,69.4 C648.7,71.9 658.6,76.3 667.4,80.7 C676.2,85.1 685.9,90.5 692.7,96.0 C699.5,101.5 704.5,107.3 708.0,113.6 C711.5,119.9 713.2,127.7 714.0,134.0 C714.8,140.3 714.9,144.4 713.0,151.6 C711.1,158.8 706.7,169.0 702.9,177.0 C699.1,185.0 693.6,193.1 690.2,199.8 C686.8,206.6 685.1,210.8 682.6,217.5 C680.1,224.2 678.0,233.2 675.4,239.8 C672.8,246.4 669.9,250.9 666.8,257.0 C663.7,263.1 659.7,270.5 657.0,276.6 C654.3,282.7 652.4,287.7 650.8,293.8 C649.2,299.9 648.6,307.3 647.2,313.4 C645.8,319.5 644.8,324.9 642.3,330.6 C639.8,336.3 636.5,342.2 632.4,347.7 C628.3,353.2 623.4,359.0 617.7,363.7 C612.0,368.4 605.5,372.7 598.1,376.0 C590.8,379.3 581.8,380.2 573.6,383.3 C565.4,386.4 557.2,390.4 549.0,394.3 C540.8,398.2 532.7,401.9 524.5,406.6 C516.3,411.3 506.4,418.4 500.0,422.5 C493.6,426.6 492.6,427.9 486.2,431.0 C479.8,434.1 469.8,438.8 461.6,440.9 C453.4,443.0 444.5,444.2 437.1,443.8 C429.8,443.4 423.2,441.8 417.5,438.4 C411.8,435.0 406.9,429.4 402.8,423.7 C398.7,418.0 396.3,410.9 393.0,404.0 C389.7,397.1 386.9,388.9 383.2,382.0 C379.5,375.1 375.5,368.1 371.0,362.4 C366.5,356.7 361.5,352.2 356.2,347.7 C350.9,343.2 344.7,340.3 339.0,335.4 C333.3,330.5 327.2,324.8 321.9,318.3 C316.6,311.8 311.1,304.0 307.2,296.2 C303.3,288.4 300.6,280.3 298.6,271.7 C296.6,263.1 295.4,253.4 295.4,244.7 C295.4,236.0 297.0,227.8 298.5,219.5 C300.0,211.2 302.0,203.9 304.6,195.0 C307.2,186.1 311.3,174.5 314.3,166.0 C317.3,157.5 321.4,149.7 322.8,144.0 C324.2,138.3 322.2,137.2 322.8,132.0 C323.4,126.8 323.8,118.3 326.4,112.6 C329.0,106.9 331.3,103.1 338.6,98.0 C345.9,92.9 357.9,85.9 370.0,82.0 C382.1,78.1 403.0,78.9 411.4,74.5 Z" stroke="#646464" stroke-width="16" fill="none" filter="url(#b5)"/></g>
<path d="M600,150 C608,180 613,215 613,245 C613,275 605,300 585,318 C568,333 548,344 528,350" stroke="#626262" stroke-width="24" fill="none" stroke-linecap="round" filter="url(#b6)"/>
<path d="M603,158 C609,185 613,215 613,245 C613,275 605,300 585,318 C568,333 548,344 528,350" stroke="#4a4746" stroke-width="13" fill="none" stroke-linecap="round" filter="url(#b3)"/>
<path d="M606,170 C611,200 613,235 612,265 C609,292 598,310 580,324 C565,335 550,342 538,346" stroke="#3b3837" stroke-width="7" fill="none" stroke-linecap="round" filter="url(#b2)"/>
<g shape-rendering="geometricPrecision">
<path d="M427.5,37.4 L421.1,33.7 L421.1,26.3 L427.5,22.6 L433.9,26.3 L433.9,33.7 Z" fill="#a7a7a8"/>
<path d="M440.0,37.4 L433.6,33.7 L433.6,26.3 L440.0,22.6 L446.4,26.3 L446.4,33.7 Z" fill="#adadae"/>
<path d="M452.5,37.4 L446.1,33.7 L446.1,26.3 L452.5,22.6 L458.9,26.3 L458.9,33.7 Z" fill="#aaaaab"/>
<path d="M465.0,37.4 L458.6,33.7 L458.6,26.3 L465.0,22.6 L471.4,26.3 L471.4,33.7 Z" fill="#ababac"/>
<path d="M477.5,37.4 L471.1,33.7 L471.1,26.3 L477.5,22.6 L483.9,26.3 L483.9,33.7 Z" fill="#99999a"/>
<path d="M515.0,37.4 L508.6,33.7 L508.6,26.3 L515.0,22.6 L521.4,26.3 L521.4,33.7 Z" fill="#969697"/>
<path d="M527.5,37.4 L521.1,33.7 L521.1,26.3 L527.5,22.6 L533.9,26.3 L533.9,33.7 Z" fill="#989899"/>
<path d="M540.0,37.4 L533.6,33.7 L533.6,26.3 L540.0,22.6 L546.4,26.3 L546.4,33.7 Z" fill="#a4a4a5"/>
<path d="M552.5,37.4 L546.1,33.7 L546.1,26.3 L552.5,22.6 L558.9,26.3 L558.9,33.7 Z" fill="#a3a3a4"/>
<path d="M565.0,37.4 L558.6,33.7 L558.6,26.3 L565.0,22.6 L571.4,26.3 L571.4,33.7 Z" fill="#a4a4a5"/>
<path d="M577.5,37.4 L571.1,33.7 L571.1,26.3 L577.5,22.6 L583.9,26.3 L583.9,33.7 Z" fill="#ababac"/>
<path d="M590.0,37.4 L583.6,33.7 L583.6,26.3 L590.0,22.6 L596.4,26.3 L596.4,33.7 Z" fill="#a5a5a6"/>
<path d="M421.2,48.2 L414.9,44.5 L414.9,37.1 L421.2,33.5 L427.6,37.1 L427.6,44.5 Z" fill="#a6a6a7"/>
<path d="M433.8,48.2 L427.4,44.5 L427.4,37.1 L433.8,33.5 L440.1,37.1 L440.1,44.5 Z" fill="#a7a7a8"/>
<path d="M446.2,48.2 L439.9,44.5 L439.9,37.1 L446.2,33.5 L452.6,37.1 L452.6,44.5 Z" fill="#acacad"/>
<path d="M458.8,48.2 L452.4,44.5 L452.4,37.1 L458.8,33.5 L465.1,37.1 L465.1,44.5 Z" fill="#a6a6a7"/>
<path d="M471.2,48.2 L464.9,44.5 L464.9,37.1 L471.2,33.5 L477.6,37.1 L477.6,44.5 Z" fill="#939394"/>
<path d="M483.8,48.2 L477.4,44.5 L477.4,37.1 L483.8,33.5 L490.1,37.1 L490.1,44.5 Z" fill="#8f8f90"/>
<path d="M496.2,48.2 L489.9,44.5 L489.9,37.1 L496.2,33.5 L502.6,37.1 L502.6,44.5 Z" fill="#979798"/>
<path d="M508.8,48.2 L502.4,44.5 L502.4,37.1 L508.8,33.5 L515.1,37.1 L515.1,44.5 Z" fill="#9a9a9b"/>
<path d="M521.2,48.2 L514.9,44.5 L514.9,37.1 L521.2,33.5 L527.6,37.1 L527.6,44.5 Z" fill="#9a9a9b"/>
<path d="M533.8,48.2 L527.4,44.5 L527.4,37.1 L533.8,33.5 L540.1,37.1 L540.1,44.5 Z" fill="#979798"/>
<path d="M546.2,48.2 L539.9,44.5 L539.9,37.1 L546.2,33.5 L552.6,37.1 L552.6,44.5 Z" fill="#a0a0a1"/>
<path d="M558.8,48.2 L552.4,44.5 L552.4,37.1 L558.8,33.5 L565.1,37.1 L565.1,44.5 Z" fill="#a0a0a1"/>
<path d="M571.2,48.2 L564.9,44.5 L564.9,37.1 L571.2,33.5 L577.6,37.1 L577.6,44.5 Z" fill="#a1a1a2"/>
<path d="M583.8,48.2 L577.4,44.5 L577.4,37.1 L583.8,33.5 L590.1,37.1 L590.1,44.5 Z" fill="#9f9fa0"/>
<path d="M596.2,48.2 L589.9,44.5 L589.9,37.1 L596.2,33.5 L602.6,37.1 L602.6,44.5 Z" fill="#a1a1a2"/>
<path d="M608.8,48.2 L602.4,44.5 L602.4,37.1 L608.8,33.5 L615.1,37.1 L615.1,44.5 Z" fill="#a6a6a7"/>
<path d="M415.0,59.0 L408.6,55.3 L408.6,48.0 L415.0,44.3 L421.4,48.0 L421.4,55.3 Z" fill="#a6a6a7"/>
<path d="M427.5,59.0 L421.1,55.3 L421.1,48.0 L427.5,44.3 L433.9,48.0 L433.9,55.3 Z" fill="#a8a8a9"/>
<path d="M440.0,59.0 L433.6,55.3 L433.6,48.0 L440.0,44.3 L446.4,48.0 L446.4,55.3 Z" fill="#ababac"/>
<path d="M452.5,59.0 L446.1,55.3 L446.1,48.0 L452.5,44.3 L458.9,48.0 L458.9,55.3 Z" fill="#aeaeaf"/>
<path d="M465.0,59.0 L458.6,55.3 L458.6,48.0 L465.0,44.3 L471.4,48.0 L471.4,55.3 Z" fill="#9e9e9f"/>
<path d="M477.5,59.0 L471.1,55.3 L471.1,48.0 L477.5,44.3 L483.9,48.0 L483.9,55.3 Z" fill="#8d8d8e"/>
<path d="M490.0,59.0 L483.6,55.3 L483.6,48.0 L490.0,44.3 L496.4,48.0 L496.4,55.3 Z" fill="#7f7f80"/>
<path d="M502.5,59.0 L496.1,55.3 L496.1,48.0 L502.5,44.3 L508.9,48.0 L508.9,55.3 Z" fill="#9c9c9d"/>
<path d="M515.0,59.0 L508.6,55.3 L508.6,48.0 L515.0,44.3 L521.4,48.0 L521.4,55.3 Z" fill="#9c9c9d"/>
<path d="M527.5,59.0 L521.1,55.3 L521.1,48.0 L527.5,44.3 L533.9,48.0 L533.9,55.3 Z" fill="#979798"/>
<path d="M540.0,59.0 L533.6,55.3 L533.6,48.0 L540.0,44.3 L546.4,48.0 L546.4,55.3 Z" fill="#979798"/>
<path d="M552.5,59.0 L546.1,55.3 L546.1,48.0 L552.5,44.3 L558.9,48.0 L558.9,55.3 Z" fill="#989899"/>
<path d="M565.0,59.0 L558.6,55.3 L558.6,48.0 L565.0,44.3 L571.4,48.0 L571.4,55.3 Z" fill="#9e9e9f"/>
<path d="M577.5,59.0 L571.1,55.3 L571.1,48.0 L577.5,44.3 L583.9,48.0 L583.9,55.3 Z" fill="#99999a"/>
<path d="M590.0,59.0 L583.6,55.3 L583.6,48.0 L590.0,44.3 L596.4,48.0 L596.4,55.3 Z" fill="#9d9d9e"/>
<path d="M602.5,59.0 L596.1,55.3 L596.1,48.0 L602.5,44.3 L608.9,48.0 L608.9,55.3 Z" fill="#a8a8a9"/>
<path d="M615.0,59.0 L608.6,55.3 L608.6,48.0 L615.0,44.3 L621.4,48.0 L621.4,55.3 Z" fill="#adadae"/>
<path d="M408.8,69.8 L402.4,66.2 L402.4,58.8 L408.8,55.1 L415.1,58.8 L415.1,66.2 Z" fill="#a7a7a8"/>
<path d="M421.2,69.8 L414.9,66.2 L414.9,58.8 L421.2,55.1 L427.6,58.8 L427.6,66.2 Z" fill="#a6a6a7"/>
<path d="M433.8,69.8 L427.4,66.2 L427.4,58.8 L433.8,55.1 L440.1,58.8 L440.1,66.2 Z" fill="#aeaeaf"/>
<path d="M446.2,69.8 L439.9,66.2 L439.9,58.8 L446.2,55.1 L452.6,58.8 L452.6,66.2 Z" fill="#b0b0b1"/>
<path d="M458.8,69.8 L452.4,66.2 L452.4,58.8 L458.8,55.1 L465.1,58.8 L465.1,66.2 Z" fill="#b1b1b2"/>
<path d="M471.2,69.8 L464.9,66.2 L464.9,58.8 L471.2,55.1 L477.6,58.8 L477.6,66.2 Z" fill="#a2a2a3"/>
<path d="M483.8,69.8 L477.4,66.2 L477.4,58.8 L483.8,55.1 L490.1,58.8 L490.1,66.2 Z" fill="#89898a"/>
<path d="M496.2,69.8 L489.9,66.2 L489.9,58.8 L496.2,55.1 L502.6,58.8 L502.6,66.2 Z" fill="#7d7d7e"/>
<path d="M508.8,69.8 L502.4,66.2 L502.4,58.8 L508.8,55.1 L515.1,58.8 L515.1,66.2 Z" fill="#989899"/>
<path d="M521.2,69.8 L514.9,66.2 L514.9,58.8 L521.2,55.1 L527.6,58.8 L527.6,66.2 Z" fill="#959596"/>
<path d="M533.8,69.8 L527.4,66.2 L527.4,58.8 L533.8,55.1 L540.1,58.8 L540.1,66.2 Z" fill="#939394"/>
<path d="M546.2,69.8 L539.9,66.2 L539.9,58.8 L546.2,55.1 L552.6,58.8 L552.6,66.2 Z" fill="#9b9b9c"/>
<path d="M558.8,69.8 L552.4,66.2 L552.4,58.8 L558.8,55.1 L565.1,58.8 L565.1,66.2 Z" fill="#9e9e9f"/>
<path d="M571.2,69.8 L564.9,66.2 L564.9,58.8 L571.2,55.1 L577.6,58.8 L577.6,66.2 Z" fill="#9d9d9e"/>
<path d="M583.8,69.8 L577.4,66.2 L577.4,58.8 L583.8,55.1 L590.1,58.8 L590.1,66.2 Z" fill="#9e9e9f"/>
<path d="M596.2,69.8 L589.9,66.2 L589.9,58.8 L596.2,55.1 L602.6,58.8 L602.6,66.2 Z" fill="#adadae"/>
<path d="M608.8,69.8 L602.4,66.2 L602.4,58.8 L608.8,55.1 L615.1,58.8 L615.1,66.2 Z" fill="#ababac"/>
<path d="M621.2,69.8 L614.9,66.2 L614.9,58.8 L621.2,55.1 L627.6,58.8 L627.6,66.2 Z" fill="#b0b0b1"/>
<path d="M633.8,69.8 L627.4,66.2 L627.4,58.8 L633.8,55.1 L640.1,58.8 L640.1,66.2 Z" fill="#adadae"/>
<path d="M646.2,69.8 L639.9,66.2 L639.9,58.8 L646.2,55.1 L652.6,58.8 L652.6,66.2 Z" fill="#a8a8a9"/>
<path d="M365.0,80.7 L358.6,77.0 L358.6,69.6 L365.0,65.9 L371.4,69.6 L371.4,77.0 Z" fill="#aaaaab"/>
<path d="M377.5,80.7 L371.1,77.0 L371.1,69.6 L377.5,65.9 L383.9,69.6 L383.9,77.0 Z" fill="#afafb0"/>
<path d="M390.0,80.7 L383.6,77.0 L383.6,69.6 L390.0,65.9 L396.4,69.6 L396.4,77.0 Z" fill="#acacad"/>
<path d="M402.5,80.7 L396.1,77.0 L396.1,69.6 L402.5,65.9 L408.9,69.6 L408.9,77.0 Z" fill="#979798"/>
<path d="M415.0,80.7 L408.6,77.0 L408.6,69.6 L415.0,65.9 L421.4,69.6 L421.4,77.0 Z" fill="#a4a4a5"/>
<path d="M427.5,80.7 L421.1,77.0 L421.1,69.6 L427.5,65.9 L433.9,69.6 L433.9,77.0 Z" fill="#aeaeaf"/>
<path d="M440.0,80.7 L433.6,77.0 L433.6,69.6 L440.0,65.9 L446.4,69.6 L446.4,77.0 Z" fill="#b0b0b1"/>
<path d="M452.5,80.7 L446.1,77.0 L446.1,69.6 L452.5,65.9 L458.9,69.6 L458.9,77.0 Z" fill="#b1b1b2"/>
<path d="M465.0,80.7 L458.6,77.0 L458.6,69.6 L465.0,65.9 L471.4,69.6 L471.4,77.0 Z" fill="#b1b1b2"/>
<path d="M477.5,80.7 L471.1,77.0 L471.1,69.6 L477.5,65.9 L483.9,69.6 L483.9,77.0 Z" fill="#9e9e9f"/>
<path d="M490.0,80.7 L483.6,77.0 L483.6,69.6 L490.0,65.9 L496.4,69.6 L496.4,77.0 Z" fill="#79797a"/>
<path d="M502.5,80.7 L496.1,77.0 L496.1,69.6 L502.5,65.9 L508.9,69.6 L508.9,77.0 Z" fill="#777778"/>
<path d="M515.0,80.7 L508.6,77.0 L508.6,69.6 L515.0,65.9 L521.4,69.6 L521.4,77.0 Z" fill="#929293"/>
<path d="M527.5,80.7 L521.1,77.0 L521.1,69.6 L527.5,65.9 L533.9,69.6 L533.9,77.0 Z" fill="#9c9c9d"/>
<path d="M540.0,80.7 L533.6,77.0 L533.6,69.6 L540.0,65.9 L546.4,69.6 L546.4,77.0 Z" fill="#989899"/>
<path d="M552.5,80.7 L546.1,77.0 L546.1,69.6 L552.5,65.9 L558.9,69.6 L558.9,77.0 Z" fill="#99999a"/>
<path d="M565.0,80.7 L558.6,77.0 L558.6,69.6 L565.0,65.9 L571.4,69.6 L571.4,77.0 Z" fill="#989899"/>
<path d="M577.5,80.7 L571.1,77.0 L571.1,69.6 L577.5,65.9 L583.9,69.6 L583.9,77.0 Z" fill="#a1a1a2"/>
<path d="M590.0,80.7 L583.6,77.0 L583.6,69.6 L590.0,65.9 L596.4,69.6 L596.4,77.0 Z" fill="#b0b0b1"/>
<path d="M602.5,80.7 L596.1,77.0 L596.1,69.6 L602.5,65.9 L608.9,69.6 L608.9,77.0 Z" fill="#ababac"/>
<path d="M615.0,80.7 L608.6,77.0 L608.6,69.6 L615.0,65.9 L621.4,69.6 L621.4,77.0 Z" fill="#a9a9aa"/>
<path d="M627.5,80.7 L621.1,77.0 L621.1,69.6 L627.5,65.9 L633.9,69.6 L633.9,77.0 Z" fill="#adadae"/>
<path d="M640.0,80.7 L633.6,77.0 L633.6,69.6 L640.0,65.9 L646.4,69.6 L646.4,77.0 Z" fill="#9a9a9b"/>
<path d="M652.5,80.7 L646.1,77.0 L646.1,69.6 L652.5,65.9 L658.9,69.6 L658.9,77.0 Z" fill="#717172"/>
<path d="M665.0,80.7 L658.6,77.0 L658.6,69.6 L665.0,65.9 L671.4,69.6 L671.4,77.0 Z" fill="#737374"/>
<path d="M677.5,80.7 L671.1,77.0 L671.1,69.6 L677.5,65.9 L683.9,69.6 L683.9,77.0 Z" fill="#747475"/>
<path d="M333.8,91.5 L327.4,87.8 L327.4,80.4 L333.8,76.8 L340.1,80.4 L340.1,87.8 Z" fill="#ababac"/>
<path d="M346.2,91.5 L339.9,87.8 L339.9,80.4 L346.2,76.8 L352.6,80.4 L352.6,87.8 Z" fill="#aaaaab"/>
<path d="M358.8,91.5 L352.4,87.8 L352.4,80.4 L358.8,76.8 L365.1,80.4 L365.1,87.8 Z" fill="#b1b1b2"/>
<path d="M371.2,91.5 L364.9,87.8 L364.9,80.4 L371.2,76.8 L377.6,80.4 L377.6,87.8 Z" fill="#adadae"/>
<path d="M383.8,91.5 L377.4,87.8 L377.4,80.4 L383.8,76.8 L390.1,80.4 L390.1,87.8 Z" fill="#b0b0b1"/>
<path d="M396.2,91.5 L389.9,87.8 L389.9,80.4 L396.2,76.8 L402.6,80.4 L402.6,87.8 Z" fill="#a8a8a9"/>
<path d="M408.8,91.5 L402.4,87.8 L402.4,80.4 L408.8,76.8 L415.1,80.4 L415.1,87.8 Z" fill="#929293"/>
<path d="M421.2,91.5 L414.9,87.8 L414.9,80.4 L421.2,76.8 L427.6,80.4 L427.6,87.8 Z" fill="#a9a9aa"/>
<path d="M433.8,91.5 L427.4,87.8 L427.4,80.4 L433.8,76.8 L440.1,80.4 L440.1,87.8 Z" fill="#b4b4b5"/>
<path d="M446.2,91.5 L439.9,87.8 L439.9,80.4 L446.2,76.8 L452.6,80.4 L452.6,87.8 Z" fill="#b7b7b8"/>
<path d="M458.8,91.5 L452.4,87.8 L452.4,80.4 L458.8,76.8 L465.1,80.4 L465.1,87.8 Z" fill="#b3b3b4"/>
<path d="M471.2,91.5 L464.9,87.8 L464.9,80.4 L471.2,76.8 L477.6,80.4 L477.6,87.8 Z" fill="#adadae"/>
<path d="M483.8,91.5 L477.4,87.8 L477.4,80.4 L483.8,76.8 L490.1,80.4 L490.1,87.8 Z" fill="#939394"/>
<path d="M496.2,91.5 L489.9,87.8 L489.9,80.4 L496.2,76.8 L502.6,80.4 L502.6,87.8 Z" fill="#7e7e7f"/>
<path d="M508.8,91.5 L502.4,87.8 L502.4,80.4 L508.8,76.8 L515.1,80.4 L515.1,87.8 Z" fill="#767677"/>
<path d="M521.2,91.5 L514.9,87.8 L514.9,80.4 L521.2,76.8 L527.6,80.4 L527.6,87.8 Z" fill="#919192"/>
<path d="M533.8,91.5 L527.4,87.8 L527.4,80.4 L533.8,76.8 L540.1,80.4 L540.1,87.8 Z" fill="#9b9b9c"/>
<path d="M546.2,91.5 L539.9,87.8 L539.9,80.4 L546.2,76.8 L552.6,80.4 L552.6,87.8 Z" fill="#989899"/>
<path d="M558.8,91.5 L552.4,87.8 L552.4,80.4 L558.8,76.8 L565.1,80.4 L565.1,87.8 Z" fill="#989899"/>
<path d="M571.2,91.5 L564.9,87.8 L564.9,80.4 L571.2,76.8 L577.6,80.4 L577.6,87.8 Z" fill="#a2a2a3"/>
<path d="M583.8,91.5 L577.4,87.8 L577.4,80.4 L583.8,76.8 L590.1,80.4 L590.1,87.8 Z" fill="#aaaaab"/>
<path d="M596.2,91.5 L589.9,87.8 L589.9,80.4 L596.2,76.8 L602.6,80.4 L602.6,87.8 Z" fill="#ababac"/>
<path d="M608.8,91.5 L602.4,87.8 L602.4,80.4 L608.8,76.8 L615.1,80.4 L615.1,87.8 Z" fill="#a6a6a7"/>
<path d="M621.2,91.5 L614.9,87.8 L614.9,80.4 L621.2,76.8 L627.6,80.4 L627.6,87.8 Z" fill="#aaaaab"/>
<path d="M633.8,91.5 L627.4,87.8 L627.4,80.4 L633.8,76.8 L640.1,80.4 L640.1,87.8 Z" fill="#ababac"/>
<path d="M646.2,91.5 L639.9,87.8 L639.9,80.4 L646.2,76.8 L652.6,80.4 L652.6,87.8 Z" fill="#989899"/>
<path d="M658.8,91.5 L652.4,87.8 L652.4,80.4 L658.8,76.8 L665.1,80.4 L665.1,87.8 Z" fill="#828283"/>
<path d="M671.2,91.5 L664.9,87.8 L664.9,80.4 L671.2,76.8 L677.6,80.4 L677.6,87.8 Z" fill="#737374"/>
<path d="M683.8,91.5 L677.4,87.8 L677.4,80.4 L683.8,76.8 L690.1,80.4 L690.1,87.8 Z" fill="#6b6b6c"/>
<path d="M696.2,91.5 L689.9,87.8 L689.9,80.4 L696.2,76.8 L702.6,80.4 L702.6,87.8 Z" fill="#707071"/>
<path d="M327.5,102.3 L321.1,98.6 L321.1,91.3 L327.5,87.6 L333.9,91.3 L333.9,98.6 Z" fill="#adadae"/>
<path d="M340.0,102.3 L333.6,98.6 L333.6,91.3 L340.0,87.6 L346.4,91.3 L346.4,98.6 Z" fill="#afafb0"/>
<path d="M352.5,102.3 L346.1,98.6 L346.1,91.3 L352.5,87.6 L358.9,91.3 L358.9,98.6 Z" fill="#adadae"/>
<path d="M365.0,102.3 L358.6,98.6 L358.6,91.3 L365.0,87.6 L371.4,91.3 L371.4,98.6 Z" fill="#afafb0"/>
<path d="M377.5,102.3 L371.1,98.6 L371.1,91.3 L377.5,87.6 L383.9,91.3 L383.9,98.6 Z" fill="#afafb0"/>
<path d="M390.0,102.3 L383.6,98.6 L383.6,91.3 L390.0,87.6 L396.4,91.3 L396.4,98.6 Z" fill="#a5a5a6"/>
<path d="M402.5,102.3 L396.1,98.6 L396.1,91.3 L402.5,87.6 L408.9,91.3 L408.9,98.6 Z" fill="#939394"/>
<path d="M415.0,102.3 L408.6,98.6 L408.6,91.3 L415.0,87.6 L421.4,91.3 L421.4,98.6 Z" fill="#9e9e9f"/>
<path d="M427.5,102.3 L421.1,98.6 L421.1,91.3 L427.5,87.6 L433.9,91.3 L433.9,98.6 Z" fill="#b4b4b5"/>
<path d="M440.0,102.3 L433.6,98.6 L433.6,91.3 L440.0,87.6 L446.4,91.3 L446.4,98.6 Z" fill="#b2b2b3"/>
<path d="M452.5,102.3 L446.1,98.6 L446.1,91.3 L452.5,87.6 L458.9,91.3 L458.9,98.6 Z" fill="#b3b3b4"/>
<path d="M465.0,102.3 L458.6,98.6 L458.6,91.3 L465.0,87.6 L471.4,91.3 L471.4,98.6 Z" fill="#b0b0b1"/>
<path d="M477.5,102.3 L471.1,98.6 L471.1,91.3 L477.5,87.6 L483.9,91.3 L483.9,98.6 Z" fill="#a0a0a1"/>
<path d="M490.0,102.3 L483.6,98.6 L483.6,91.3 L490.0,87.6 L496.4,91.3 L496.4,98.6 Z" fill="#8e8e8f"/>
<path d="M502.5,102.3 L496.1,98.6 L496.1,91.3 L502.5,87.6 L508.9,91.3 L508.9,98.6 Z" fill="#8a8a8b"/>
<path d="M515.0,102.3 L508.6,98.6 L508.6,91.3 L515.0,87.6 L521.4,91.3 L521.4,98.6 Z" fill="#777778"/>
<path d="M527.5,102.3 L521.1,98.6 L521.1,91.3 L527.5,87.6 L533.9,91.3 L533.9,98.6 Z" fill="#979798"/>
<path d="M540.0,102.3 L533.6,98.6 L533.6,91.3 L540.0,87.6 L546.4,91.3 L546.4,98.6 Z" fill="#969697"/>
<path d="M552.5,102.3 L546.1,98.6 L546.1,91.3 L552.5,87.6 L558.9,91.3 L558.9,98.6 Z" fill="#969697"/>
<path d="M565.0,102.3 L558.6,98.6 L558.6,91.3 L565.0,87.6 L571.4,91.3 L571.4,98.6 Z" fill="#9e9e9f"/>
<path d="M577.5,102.3 L571.1,98.6 L571.1,91.3 L577.5,87.6 L583.9,91.3 L583.9,98.6 Z" fill="#a5a5a6"/>
<path d="M590.0,102.3 L583.6,98.6 L583.6,91.3 L590.0,87.6 L596.4,91.3 L596.4,98.6 Z" fill="#ababac"/>
<path d="M602.5,102.3 L596.1,98.6 L596.1,91.3 L602.5,87.6 L608.9,91.3 L608.9,98.6 Z" fill="#acacad"/>
<path d="M615.0,102.3 L608.6,98.6 L608.6,91.3 L615.0,87.6 L621.4,91.3 L621.4,98.6 Z" fill="#a8a8a9"/>
<path d="M627.5,102.3 L621.1,98.6 L621.1,91.3 L627.5,87.6 L633.9,91.3 L633.9,98.6 Z" fill="#a8a8a9"/>
<path d="M640.0,102.3 L633.6,98.6 L633.6,91.3 L640.0,87.6 L646.4,91.3 L646.4,98.6 Z" fill="#acacad"/>
<path d="M652.5,102.3 L646.1,98.6 L646.1,91.3 L652.5,87.6 L658.9,91.3 L658.9,98.6 Z" fill="#a7a7a8"/>
<path d="M665.0,102.3 L658.6,98.6 L658.6,91.3 L665.0,87.6 L671.4,91.3 L671.4,98.6 Z" fill="#a0a0a1"/>
<path d="M677.5,102.3 L671.1,98.6 L671.1,91.3 L677.5,87.6 L683.9,91.3 L683.9,98.6 Z" fill="#808081"/>
<path d="M690.0,102.3 L683.6,98.6 L683.6,91.3 L690.0,87.6 L696.4,91.3 L696.4,98.6 Z" fill="#6d6d6e"/>
<path d="M702.5,102.3 L696.1,98.6 L696.1,91.3 L702.5,87.6 L708.9,91.3 L708.9,98.6 Z" fill="#666667"/>
<path d="M321.2,113.1 L314.9,109.5 L314.9,102.1 L321.2,98.4 L327.6,102.1 L327.6,109.5 Z" fill="#acacad"/>
<path d="M333.8,113.1 L327.4,109.5 L327.4,102.1 L333.8,98.4 L340.1,102.1 L340.1,109.5 Z" fill="#acacad"/>
<path d="M346.2,113.1 L339.9,109.5 L339.9,102.1 L346.2,98.4 L352.6,102.1 L352.6,109.5 Z" fill="#b1b1b2"/>
<path d="M358.8,113.1 L352.4,109.5 L352.4,102.1 L358.8,98.4 L365.1,102.1 L365.1,109.5 Z" fill="#adadae"/>
<path d="M371.2,113.1 L364.9,109.5 L364.9,102.1 L371.2,98.4 L377.6,102.1 L377.6,109.5 Z" fill="#b0b0b1"/>
<path d="M383.8,113.1 L377.4,109.5 L377.4,102.1 L383.8,98.4 L390.1,102.1 L390.1,109.5 Z" fill="#a7a7a8"/>
<path d="M396.2,113.1 L389.9,109.5 L389.9,102.1 L396.2,98.4 L402.6,102.1 L402.6,109.5 Z" fill="#9b9b9c"/>
<path d="M408.8,113.1 L402.4,109.5 L402.4,102.1 L408.8,98.4 L415.1,102.1 L415.1,109.5 Z" fill="#929293"/>
<path d="M421.2,113.1 L414.9,109.5 L414.9,102.1 L421.2,98.4 L427.6,102.1 L427.6,109.5 Z" fill="#a9a9aa"/>
<path d="M433.8,113.1 L427.4,109.5 L427.4,102.1 L433.8,98.4 L440.1,102.1 L440.1,109.5 Z" fill="#afafb0"/>
<path d="M446.2,113.1 L439.9,109.5 L439.9,102.1 L446.2,98.4 L452.6,102.1 L452.6,109.5 Z" fill="#aeaeaf"/>
<path d="M458.8,113.1 L452.4,109.5 L452.4,102.1 L458.8,98.4 L465.1,102.1 L465.1,109.5 Z" fill="#acacad"/>
<path d="M471.2,113.1 L464.9,109.5 L464.9,102.1 L471.2,98.4 L477.6,102.1 L477.6,109.5 Z" fill="#aaaaab"/>
<path d="M483.8,113.1 L477.4,109.5 L477.4,102.1 L483.8,98.4 L490.1,102.1 L490.1,109.5 Z" fill="#a3a3a4"/>
<path d="M496.2,113.1 L489.9,109.5 L489.9,102.1 L496.2,98.4 L502.6,102.1 L502.6,109.5 Z" fill="#a8a8a9"/>
<path d="M508.8,113.1 L502.4,109.5 L502.4,102.1 L508.8,98.4 L515.1,102.1 L515.1,109.5 Z" fill="#a4a4a5"/>
<path d="M521.2,113.1 L514.9,109.5 L514.9,102.1 L521.2,98.4 L527.6,102.1 L527.6,109.5 Z" fill="#989899"/>
<path d="M533.8,113.1 L527.4,109.5 L527.4,102.1 L533.8,98.4 L540.1,102.1 L540.1,109.5 Z" fill="#989899"/>
<path d="M546.2,113.1 L539.9,109.5 L539.9,102.1 L546.2,98.4 L552.6,102.1 L552.6,109.5 Z" fill="#9b9b9c"/>
<path d="M558.8,113.1 L552.4,109.5 L552.4,102.1 L558.8,98.4 L565.1,102.1 L565.1,109.5 Z" fill="#9a9a9b"/>
<path d="M571.2,113.1 L564.9,109.5 L564.9,102.1 L571.2,98.4 L577.6,102.1 L577.6,109.5 Z" fill="#a3a3a4"/>
<path d="M583.8,113.1 L577.4,109.5 L577.4,102.1 L583.8,98.4 L590.1,102.1 L590.1,109.5 Z" fill="#a9a9aa"/>
<path d="M596.2,113.1 L589.9,109.5 L589.9,102.1 L596.2,98.4 L602.6,102.1 L602.6,109.5 Z" fill="#a7a7a8"/>
<path d="M608.8,113.1 L602.4,109.5 L602.4,102.1 L608.8,98.4 L615.1,102.1 L615.1,109.5 Z" fill="#a8a8a9"/>
<path d="M621.2,113.1 L614.9,109.5 L614.9,102.1 L621.2,98.4 L627.6,102.1 L627.6,109.5 Z" fill="#acacad"/>
<path d="M633.8,113.1 L627.4,109.5 L627.4,102.1 L633.8,98.4 L640.1,102.1 L640.1,109.5 Z" fill="#a8a8a9"/>
<path d="M646.2,113.1 L639.9,109.5 L639.9,102.1 L646.2,98.4 L652.6,102.1 L652.6,109.5 Z" fill="#a9a9aa"/>
<path d="M658.8,113.1 L652.4,109.5 L652.4,102.1 L658.8,98.4 L665.1,102.1 L665.1,109.5 Z" fill="#a9a9aa"/>
<path d="M671.2,113.1 L664.9,109.5 L664.9,102.1 L671.2,98.4 L677.6,102.1 L677.6,109.5 Z" fill="#a7a7a8"/>
<path d="M683.8,113.1 L677.4,109.5 L677.4,102.1 L683.8,98.4 L690.1,102.1 L690.1,109.5 Z" fill="#888889"/>
<path d="M696.2,113.1 L689.9,109.5 L689.9,102.1 L696.2,98.4 L702.6,102.1 L702.6,109.5 Z" fill="#6e6e6f"/>
<path d="M708.8,113.1 L702.4,109.5 L702.4,102.1 L708.8,98.4 L715.1,102.1 L715.1,109.5 Z" fill="#636364"/>
<path d="M315.0,124.0 L308.6,120.3 L308.6,112.9 L315.0,109.2 L321.4,112.9 L321.4,120.3 Z" fill="#a9a9aa"/>
<path d="M327.5,124.0 L321.1,120.3 L321.1,112.9 L327.5,109.2 L333.9,112.9 L333.9,120.3 Z" fill="#b1b1b2"/>
<path d="M340.0,124.0 L333.6,120.3 L333.6,112.9 L340.0,109.2 L346.4,112.9 L346.4,120.3 Z" fill="#b1b1b2"/>
<path d="M352.5,124.0 L346.1,120.3 L346.1,112.9 L352.5,109.2 L358.9,112.9 L358.9,120.3 Z" fill="#b2b2b3"/>
<path d="M365.0,124.0 L358.6,120.3 L358.6,112.9 L365.0,109.2 L371.4,112.9 L371.4,120.3 Z" fill="#acacad"/>
<path d="M377.5,124.0 L371.1,120.3 L371.1,112.9 L377.5,109.2 L383.9,112.9 L383.9,120.3 Z" fill="#adadae"/>
<path d="M390.0,124.0 L383.6,120.3 L383.6,112.9 L390.0,109.2 L396.4,112.9 L396.4,120.3 Z" fill="#a6a6a7"/>
<path d="M402.5,124.0 L396.1,120.3 L396.1,112.9 L402.5,109.2 L408.9,112.9 L408.9,120.3 Z" fill="#8e8e8f"/>
<path d="M415.0,124.0 L408.6,120.3 L408.6,112.9 L415.0,109.2 L421.4,112.9 L421.4,120.3 Z" fill="#979798"/>
<path d="M427.5,124.0 L421.1,120.3 L421.1,112.9 L427.5,109.2 L433.9,112.9 L433.9,120.3 Z" fill="#a7a7a8"/>
<path d="M440.0,124.0 L433.6,120.3 L433.6,112.9 L440.0,109.2 L446.4,112.9 L446.4,120.3 Z" fill="#adadae"/>
<path d="M452.5,124.0 L446.1,120.3 L446.1,112.9 L452.5,109.2 L458.9,112.9 L458.9,120.3 Z" fill="#acacad"/>
<path d="M465.0,124.0 L458.6,120.3 L458.6,112.9 L465.0,109.2 L471.4,112.9 L471.4,120.3 Z" fill="#aaaaab"/>
<path d="M477.5,124.0 L471.1,120.3 L471.1,112.9 L477.5,109.2 L483.9,112.9 L483.9,120.3 Z" fill="#afafb0"/>
<path d="M490.0,124.0 L483.6,120.3 L483.6,112.9 L490.0,109.2 L496.4,112.9 L496.4,120.3 Z" fill="#b3b3b4"/>
<path d="M502.5,124.0 L496.1,120.3 L496.1,112.9 L502.5,109.2 L508.9,112.9 L508.9,120.3 Z" fill="#adadae"/>
<path d="M515.0,124.0 L508.6,120.3 L508.6,112.9 L515.0,109.2 L521.4,112.9 L521.4,120.3 Z" fill="#a6a6a7"/>
<path d="M527.5,124.0 L521.1,120.3 L521.1,112.9 L527.5,109.2 L533.9,112.9 L533.9,120.3 Z" fill="#9b9b9c"/>
<path d="M540.0,124.0 L533.6,120.3 L533.6,112.9 L540.0,109.2 L546.4,112.9 L546.4,120.3 Z" fill="#9c9c9d"/>
<path d="M552.5,124.0 L546.1,120.3 L546.1,112.9 L552.5,109.2 L558.9,112.9 L558.9,120.3 Z" fill="#959596"/>
<path d="M565.0,124.0 L558.6,120.3 L558.6,112.9 L565.0,109.2 L571.4,112.9 L571.4,120.3 Z" fill="#9c9c9d"/>
<path d="M577.5,124.0 L571.1,120.3 L571.1,112.9 L577.5,109.2 L583.9,112.9 L583.9,120.3 Z" fill="#a7a7a8"/>
<path d="M590.0,124.0 L583.6,120.3 L583.6,112.9 L590.0,109.2 L596.4,112.9 L596.4,120.3 Z" fill="#aeaeaf"/>
<path d="M602.5,124.0 L596.1,120.3 L596.1,112.9 L602.5,109.2 L608.9,112.9 L608.9,120.3 Z" fill="#adadae"/>
<path d="M615.0,124.0 L608.6,120.3 L608.6,112.9 L615.0,109.2 L621.4,112.9 L621.4,120.3 Z" fill="#adadae"/>
<path d="M627.5,124.0 L621.1,120.3 L621.1,112.9 L627.5,109.2 L633.9,112.9 L633.9,120.3 Z" fill="#ababac"/>
<path d="M640.0,124.0 L633.6,120.3 L633.6,112.9 L640.0,109.2 L646.4,112.9 L646.4,120.3 Z" fill="#a6a6a7"/>
<path d="M652.5,124.0 L646.1,120.3 L646.1,112.9 L652.5,109.2 L658.9,112.9 L658.9,120.3 Z" fill="#acacad"/>
<path d="M665.0,124.0 L658.6,120.3 L658.6,112.9 L665.0,109.2 L671.4,112.9 L671.4,120.3 Z" fill="#a4a4a5"/>
<path d="M677.5,124.0 L671.1,120.3 L671.1,112.9 L677.5,109.2 L683.9,112.9 L683.9,120.3 Z" fill="#919192"/>
<path d="M690.0,124.0 L683.6,120.3 L683.6,112.9 L690.0,109.2 L696.4,112.9 L696.4,120.3 Z" fill="#7d7d7e"/>
<path d="M702.5,124.0 L696.1,120.3 L696.1,112.9 L702.5,109.2 L708.9,112.9 L708.9,120.3 Z" fill="#69696a"/>
<path d="M715.0,124.0 L708.6,120.3 L708.6,112.9 L715.0,109.2 L721.4,112.9 L721.4,120.3 Z" fill="#656566"/>
<path d="M321.2,134.8 L314.9,131.1 L314.9,123.7 L321.2,120.1 L327.6,123.7 L327.6,131.1 Z" fill="#b1b1b2"/>
<path d="M333.8,134.8 L327.4,131.1 L327.4,123.7 L333.8,120.1 L340.1,123.7 L340.1,131.1 Z" fill="#aeaeaf"/>
<path d="M346.2,134.8 L339.9,131.1 L339.9,123.7 L346.2,120.1 L352.6,123.7 L352.6,131.1 Z" fill="#adadae"/>
<path d="M358.8,134.8 L352.4,131.1 L352.4,123.7 L358.8,120.1 L365.1,123.7 L365.1,131.1 Z" fill="#ababac"/>
<path d="M371.2,134.8 L364.9,131.1 L364.9,123.7 L371.2,120.1 L377.6,123.7 L377.6,131.1 Z" fill="#aeaeaf"/>
<path d="M383.8,134.8 L377.4,131.1 L377.4,123.7 L383.8,120.1 L390.1,123.7 L390.1,131.1 Z" fill="#a6a6a7"/>
<path d="M396.2,134.8 L389.9,131.1 L389.9,123.7 L396.2,120.1 L402.6,123.7 L402.6,131.1 Z" fill="#9a9a9b"/>
<path d="M408.8,134.8 L402.4,131.1 L402.4,123.7 L408.8,120.1 L415.1,123.7 L415.1,131.1 Z" fill="#919192"/>
<path d="M421.2,134.8 L414.9,131.1 L414.9,123.7 L421.2,120.1 L427.6,123.7 L427.6,131.1 Z" fill="#939394"/>
<path d="M433.8,134.8 L427.4,131.1 L427.4,123.7 L433.8,120.1 L440.1,123.7 L440.1,131.1 Z" fill="#a5a5a6"/>
<path d="M446.2,134.8 L439.9,131.1 L439.9,123.7 L446.2,120.1 L452.6,123.7 L452.6,131.1 Z" fill="#afafb0"/>
<path d="M458.8,134.8 L452.4,131.1 L452.4,123.7 L458.8,120.1 L465.1,123.7 L465.1,131.1 Z" fill="#adadae"/>
<path d="M471.2,134.8 L464.9,131.1 L464.9,123.7 L471.2,120.1 L477.6,123.7 L477.6,131.1 Z" fill="#b7b7b8"/>
<path d="M483.8,134.8 L477.4,131.1 L477.4,123.7 L483.8,120.1 L490.1,123.7 L490.1,131.1 Z" fill="#bcbcbd"/>
<path d="M496.2,134.8 L489.9,131.1 L489.9,123.7 L496.2,120.1 L502.6,123.7 L502.6,131.1 Z" fill="#bababb"/>
<path d="M508.8,134.8 L502.4,131.1 L502.4,123.7 L508.8,120.1 L515.1,123.7 L515.1,131.1 Z" fill="#b6b6b7"/>
<path d="M521.2,134.8 L514.9,131.1 L514.9,123.7 L521.2,120.1 L527.6,123.7 L527.6,131.1 Z" fill="#a9a9aa"/>
<path d="M533.8,134.8 L527.4,131.1 L527.4,123.7 L533.8,120.1 L540.1,123.7 L540.1,131.1 Z" fill="#a5a5a6"/>
<path d="M546.2,134.8 L539.9,131.1 L539.9,123.7 L546.2,120.1 L552.6,123.7 L552.6,131.1 Z" fill="#9e9e9f"/>
<path d="M558.8,134.8 L552.4,131.1 L552.4,123.7 L558.8,120.1 L565.1,123.7 L565.1,131.1 Z" fill="#929293"/>
<path d="M571.2,134.8 L564.9,131.1 L564.9,123.7 L571.2,120.1 L577.6,123.7 L577.6,131.1 Z" fill="#99999a"/>
<path d="M583.8,134.8 L577.4,131.1 L577.4,123.7 L583.8,120.1 L590.1,123.7 L590.1,131.1 Z" fill="#a3a3a4"/>
<path d="M596.2,134.8 L589.9,131.1 L589.9,123.7 L596.2,120.1 L602.6,123.7 L602.6,131.1 Z" fill="#a8a8a9"/>
<path d="M608.8,134.8 L602.4,131.1 L602.4,123.7 L608.8,120.1 L615.1,123.7 L615.1,131.1 Z" fill="#a8a8a9"/>
<path d="M621.2,134.8 L614.9,131.1 L614.9,123.7 L621.2,120.1 L627.6,123.7 L627.6,131.1 Z" fill="#aaaaab"/>
<path d="M633.8,134.8 L627.4,131.1 L627.4,123.7 L633.8,120.1 L640.1,123.7 L640.1,131.1 Z" fill="#acacad"/>
<path d="M646.2,134.8 L639.9,131.1 L639.9,123.7 L646.2,120.1 L652.6,123.7 L652.6,131.1 Z" fill="#a3a3a4"/>
<path d="M658.8,134.8 L652.4,131.1 L652.4,123.7 L658.8,120.1 L665.1,123.7 L665.1,131.1 Z" fill="#9c9c9d"/>
<path d="M671.2,134.8 L664.9,131.1 L664.9,123.7 L671.2,120.1 L677.6,123.7 L677.6,131.1 Z" fill="#909091"/>
<path d="M683.8,134.8 L677.4,131.1 L677.4,123.7 L683.8,120.1 L690.1,123.7 L690.1,131.1 Z" fill="#7e7e7f"/>
<path d="M696.2,134.8 L689.9,131.1 L689.9,123.7 L696.2,120.1 L702.6,123.7 L702.6,131.1 Z" fill="#6f6f70"/>
<path d="M708.8,134.8 L702.4,131.1 L702.4,123.7 L708.8,120.1 L715.1,123.7 L715.1,131.1 Z" fill="#6a6a6b"/>
<path d="M315.0,145.6 L308.6,141.9 L308.6,134.6 L315.0,130.9 L321.4,134.6 L321.4,141.9 Z" fill="#b0b0b1"/>
<path d="M327.5,145.6 L321.1,141.9 L321.1,134.6 L327.5,130.9 L333.9,134.6 L333.9,141.9 Z" fill="#aaaaab"/>
<path d="M340.0,145.6 L333.6,141.9 L333.6,134.6 L340.0,130.9 L346.4,134.6 L346.4,141.9 Z" fill="#afafb0"/>
<path d="M352.5,145.6 L346.1,141.9 L346.1,134.6 L352.5,130.9 L358.9,134.6 L358.9,141.9 Z" fill="#aeaeaf"/>
<path d="M365.0,145.6 L358.6,141.9 L358.6,134.6 L365.0,130.9 L371.4,134.6 L371.4,141.9 Z" fill="#ababac"/>
<path d="M377.5,145.6 L371.1,141.9 L371.1,134.6 L377.5,130.9 L383.9,134.6 L383.9,141.9 Z" fill="#a8a8a9"/>
<path d="M390.0,145.6 L383.6,141.9 L383.6,134.6 L390.0,130.9 L396.4,134.6 L396.4,141.9 Z" fill="#a7a7a8"/>
<path d="M402.5,145.6 L396.1,141.9 L396.1,134.6 L402.5,130.9 L408.9,134.6 L408.9,141.9 Z" fill="#8f8f90"/>
<path d="M415.0,145.6 L408.6,141.9 L408.6,134.6 L415.0,130.9 L421.4,134.6 L421.4,141.9 Z" fill="#959596"/>
<path d="M427.5,145.6 L421.1,141.9 L421.1,134.6 L427.5,130.9 L433.9,134.6 L433.9,141.9 Z" fill="#99999a"/>
<path d="M440.0,145.6 L433.6,141.9 L433.6,134.6 L440.0,130.9 L446.4,134.6 L446.4,141.9 Z" fill="#a8a8a9"/>
<path d="M452.5,145.6 L446.1,141.9 L446.1,134.6 L452.5,130.9 L458.9,134.6 L458.9,141.9 Z" fill="#afafb0"/>
<path d="M465.0,145.6 L458.6,141.9 L458.6,134.6 L465.0,130.9 L471.4,134.6 L471.4,141.9 Z" fill="#b6b6b7"/>
<path d="M477.5,145.6 L471.1,141.9 L471.1,134.6 L477.5,130.9 L483.9,134.6 L483.9,141.9 Z" fill="#bababb"/>
<path d="M490.0,145.6 L483.6,141.9 L483.6,134.6 L490.0,130.9 L496.4,134.6 L496.4,141.9 Z" fill="#b8b8b9"/>
<path d="M502.5,145.6 L496.1,141.9 L496.1,134.6 L502.5,130.9 L508.9,134.6 L508.9,141.9 Z" fill="#b6b6b7"/>
<path d="M515.0,145.6 L508.6,141.9 L508.6,134.6 L515.0,130.9 L521.4,134.6 L521.4,141.9 Z" fill="#b6b6b7"/>
<path d="M527.5,145.6 L521.1,141.9 L521.1,134.6 L527.5,130.9 L533.9,134.6 L533.9,141.9 Z" fill="#b6b6b7"/>
<path d="M540.0,145.6 L533.6,141.9 L533.6,134.6 L540.0,130.9 L546.4,134.6 L546.4,141.9 Z" fill="#b0b0b1"/>
<path d="M552.5,145.6 L546.1,141.9 L546.1,134.6 L552.5,130.9 L558.9,134.6 L558.9,141.9 Z" fill="#a6a6a7"/>
<path d="M565.0,145.6 L558.6,141.9 L558.6,134.6 L565.0,130.9 L571.4,134.6 L571.4,141.9 Z" fill="#9c9c9d"/>
<path d="M577.5,145.6 L571.1,141.9 L571.1,134.6 L577.5,130.9 L583.9,134.6 L583.9,141.9 Z" fill="#9c9c9d"/>
<path d="M590.0,145.6 L583.6,141.9 L583.6,134.6 L590.0,130.9 L596.4,134.6 L596.4,141.9 Z" fill="#909091"/>
<path d="M602.5,145.6 L596.1,141.9 L596.1,134.6 L602.5,130.9 L608.9,134.6 L608.9,141.9 Z" fill="#858586"/>
<path d="M615.0,145.6 L608.6,141.9 L608.6,134.6 L615.0,130.9 L621.4,134.6 L621.4,141.9 Z" fill="#9a9a9b"/>
<path d="M627.5,145.6 L621.1,141.9 L621.1,134.6 L627.5,130.9 L633.9,134.6 L633.9,141.9 Z" fill="#9f9fa0"/>
<path d="M640.0,145.6 L633.6,141.9 L633.6,134.6 L640.0,130.9 L646.4,134.6 L646.4,141.9 Z" fill="#9d9d9e"/>
<path d="M652.5,145.6 L646.1,141.9 L646.1,134.6 L652.5,130.9 L658.9,134.6 L658.9,141.9 Z" fill="#929293"/>
<path d="M665.0,145.6 L658.6,141.9 L658.6,134.6 L665.0,130.9 L671.4,134.6 L671.4,141.9 Z" fill="#8d8d8e"/>
<path d="M677.5,145.6 L671.1,141.9 L671.1,134.6 L677.5,130.9 L683.9,134.6 L683.9,141.9 Z" fill="#818182"/>
<path d="M690.0,145.6 L683.6,141.9 L683.6,134.6 L690.0,130.9 L696.4,134.6 L696.4,141.9 Z" fill="#727273"/>
<path d="M702.5,145.6 L696.1,141.9 L696.1,134.6 L702.5,130.9 L708.9,134.6 L708.9,141.9 Z" fill="#6b6b6c"/>
<path d="M715.0,145.6 L708.6,141.9 L708.6,134.6 L715.0,130.9 L721.4,134.6 L721.4,141.9 Z" fill="#666667"/>
<path d="M308.8,156.4 L302.4,152.8 L302.4,145.4 L308.8,141.7 L315.1,145.4 L315.1,152.8 Z" fill="#aaaaab"/>
<path d="M321.2,156.4 L314.9,152.8 L314.9,145.4 L321.2,141.7 L327.6,145.4 L327.6,152.8 Z" fill="#acacad"/>
<path d="M333.8,156.4 L327.4,152.8 L327.4,145.4 L333.8,141.7 L340.1,145.4 L340.1,152.8 Z" fill="#afafb0"/>
<path d="M346.2,156.4 L339.9,152.8 L339.9,145.4 L346.2,141.7 L352.6,145.4 L352.6,152.8 Z" fill="#b3b3b4"/>
<path d="M358.8,156.4 L352.4,152.8 L352.4,145.4 L358.8,141.7 L365.1,145.4 L365.1,152.8 Z" fill="#b3b3b4"/>
<path d="M371.2,156.4 L364.9,152.8 L364.9,145.4 L371.2,141.7 L377.6,145.4 L377.6,152.8 Z" fill="#acacad"/>
<path d="M383.8,156.4 L377.4,152.8 L377.4,145.4 L383.8,141.7 L390.1,145.4 L390.1,152.8 Z" fill="#aeaeaf"/>
<path d="M396.2,156.4 L389.9,152.8 L389.9,145.4 L396.2,141.7 L402.6,145.4 L402.6,152.8 Z" fill="#99999a"/>
<path d="M408.8,156.4 L402.4,152.8 L402.4,145.4 L408.8,141.7 L415.1,145.4 L415.1,152.8 Z" fill="#959596"/>
<path d="M421.2,156.4 L414.9,152.8 L414.9,145.4 L421.2,141.7 L427.6,145.4 L427.6,152.8 Z" fill="#979798"/>
<path d="M433.8,156.4 L427.4,152.8 L427.4,145.4 L433.8,141.7 L440.1,145.4 L440.1,152.8 Z" fill="#9b9b9c"/>
<path d="M446.2,156.4 L439.9,152.8 L439.9,145.4 L446.2,141.7 L452.6,145.4 L452.6,152.8 Z" fill="#aaaaab"/>
<path d="M458.8,156.4 L452.4,152.8 L452.4,145.4 L458.8,141.7 L465.1,145.4 L465.1,152.8 Z" fill="#aeaeaf"/>
<path d="M471.2,156.4 L464.9,152.8 L464.9,145.4 L471.2,141.7 L477.6,145.4 L477.6,152.8 Z" fill="#b6b6b7"/>
<path d="M483.8,156.4 L477.4,152.8 L477.4,145.4 L483.8,141.7 L490.1,145.4 L490.1,152.8 Z" fill="#bababb"/>
<path d="M496.2,156.4 L489.9,152.8 L489.9,145.4 L496.2,141.7 L502.6,145.4 L502.6,152.8 Z" fill="#bababb"/>
<path d="M508.8,156.4 L502.4,152.8 L502.4,145.4 L508.8,141.7 L515.1,145.4 L515.1,152.8 Z" fill="#bcbcbd"/>
<path d="M521.2,156.4 L514.9,152.8 L514.9,145.4 L521.2,141.7 L527.6,145.4 L527.6,152.8 Z" fill="#bababb"/>
<path d="M533.8,156.4 L527.4,152.8 L527.4,145.4 L533.8,141.7 L540.1,145.4 L540.1,152.8 Z" fill="#b6b6b7"/>
<path d="M546.2,156.4 L539.9,152.8 L539.9,145.4 L546.2,141.7 L552.6,145.4 L552.6,152.8 Z" fill="#b7b7b8"/>
<path d="M558.8,156.4 L552.4,152.8 L552.4,145.4 L558.8,141.7 L565.1,145.4 L565.1,152.8 Z" fill="#a9a9aa"/>
<path d="M571.2,156.4 L564.9,152.8 L564.9,145.4 L571.2,141.7 L577.6,145.4 L577.6,152.8 Z" fill="#9c9c9d"/>
<path d="M583.8,156.4 L577.4,152.8 L577.4,145.4 L583.8,141.7 L590.1,145.4 L590.1,152.8 Z" fill="#8a8a8b"/>
<path d="M596.2,156.4 L589.9,152.8 L589.9,145.4 L596.2,141.7 L602.6,145.4 L602.6,152.8 Z" fill="#626263"/>
<path d="M608.8,156.4 L602.4,152.8 L602.4,145.4 L608.8,141.7 L615.1,145.4 L615.1,152.8 Z" fill="#6c6c6d"/>
<path d="M621.2,156.4 L614.9,152.8 L614.9,145.4 L621.2,141.7 L627.6,145.4 L627.6,152.8 Z" fill="#89898a"/>
<path d="M633.8,156.4 L627.4,152.8 L627.4,145.4 L633.8,141.7 L640.1,145.4 L640.1,152.8 Z" fill="#909091"/>
<path d="M646.2,156.4 L639.9,152.8 L639.9,145.4 L646.2,141.7 L652.6,145.4 L652.6,152.8 Z" fill="#878788"/>
<path d="M658.8,156.4 L652.4,152.8 L652.4,145.4 L658.8,141.7 L665.1,145.4 L665.1,152.8 Z" fill="#828283"/>
<path d="M671.2,156.4 L664.9,152.8 L664.9,145.4 L671.2,141.7 L677.6,145.4 L677.6,152.8 Z" fill="#838384"/>
<path d="M683.8,156.4 L677.4,152.8 L677.4,145.4 L683.8,141.7 L690.1,145.4 L690.1,152.8 Z" fill="#707071"/>
<path d="M696.2,156.4 L689.9,152.8 L689.9,145.4 L696.2,141.7 L702.6,145.4 L702.6,152.8 Z" fill="#6d6d6e"/>
<path d="M708.8,156.4 L702.4,152.8 L702.4,145.4 L708.8,141.7 L715.1,145.4 L715.1,152.8 Z" fill="#666667"/>
<path d="M315.0,167.3 L308.6,163.6 L308.6,156.2 L315.0,152.5 L321.4,156.2 L321.4,163.6 Z" fill="#b0b0b1"/>
<path d="M327.5,167.3 L321.1,163.6 L321.1,156.2 L327.5,152.5 L333.9,156.2 L333.9,163.6 Z" fill="#b3b3b4"/>
<path d="M340.0,167.3 L333.6,163.6 L333.6,156.2 L340.0,152.5 L346.4,156.2 L346.4,163.6 Z" fill="#b2b2b3"/>
<path d="M352.5,167.3 L346.1,163.6 L346.1,156.2 L352.5,152.5 L358.9,156.2 L358.9,163.6 Z" fill="#b4b4b5"/>
<path d="M365.0,167.3 L358.6,163.6 L358.6,156.2 L365.0,152.5 L371.4,156.2 L371.4,163.6 Z" fill="#acacad"/>
<path d="M377.5,167.3 L371.1,163.6 L371.1,156.2 L377.5,152.5 L383.9,156.2 L383.9,163.6 Z" fill="#afafb0"/>
<path d="M390.0,167.3 L383.6,163.6 L383.6,156.2 L390.0,152.5 L396.4,156.2 L396.4,163.6 Z" fill="#a7a7a8"/>
<path d="M402.5,167.3 L396.1,163.6 L396.1,156.2 L402.5,152.5 L408.9,156.2 L408.9,163.6 Z" fill="#959596"/>
<path d="M415.0,167.3 L408.6,163.6 L408.6,156.2 L415.0,152.5 L421.4,156.2 L421.4,163.6 Z" fill="#989899"/>
<path d="M427.5,167.3 L421.1,163.6 L421.1,156.2 L427.5,152.5 L433.9,156.2 L433.9,163.6 Z" fill="#9b9b9c"/>
<path d="M440.0,167.3 L433.6,163.6 L433.6,156.2 L440.0,152.5 L446.4,156.2 L446.4,163.6 Z" fill="#9f9fa0"/>
<path d="M452.5,167.3 L446.1,163.6 L446.1,156.2 L452.5,152.5 L458.9,156.2 L458.9,163.6 Z" fill="#a1a1a2"/>
<path d="M465.0,167.3 L458.6,163.6 L458.6,156.2 L465.0,152.5 L471.4,156.2 L471.4,163.6 Z" fill="#aaaaab"/>
<path d="M477.5,167.3 L471.1,163.6 L471.1,156.2 L477.5,152.5 L483.9,156.2 L483.9,163.6 Z" fill="#b2b2b3"/>
<path d="M490.0,167.3 L483.6,163.6 L483.6,156.2 L490.0,152.5 L496.4,156.2 L496.4,163.6 Z" fill="#b8b8b9"/>
<path d="M502.5,167.3 L496.1,163.6 L496.1,156.2 L502.5,152.5 L508.9,156.2 L508.9,163.6 Z" fill="#b7b7b8"/>
<path d="M515.0,167.3 L508.6,163.6 L508.6,156.2 L515.0,152.5 L521.4,156.2 L521.4,163.6 Z" fill="#b9b9ba"/>
<path d="M527.5,167.3 L521.1,163.6 L521.1,156.2 L527.5,152.5 L533.9,156.2 L533.9,163.6 Z" fill="#b8b8b9"/>
<path d="M540.0,167.3 L533.6,163.6 L533.6,156.2 L540.0,152.5 L546.4,156.2 L546.4,163.6 Z" fill="#b8b8b9"/>
<path d="M552.5,167.3 L546.1,163.6 L546.1,156.2 L552.5,152.5 L558.9,156.2 L558.9,163.6 Z" fill="#b7b7b8"/>
<path d="M565.0,167.3 L558.6,163.6 L558.6,156.2 L565.0,152.5 L571.4,156.2 L571.4,163.6 Z" fill="#a9a9aa"/>
<path d="M577.5,167.3 L571.1,163.6 L571.1,156.2 L577.5,152.5 L583.9,156.2 L583.9,163.6 Z" fill="#929293"/>
<path d="M590.0,167.3 L583.6,163.6 L583.6,156.2 L590.0,152.5 L596.4,156.2 L596.4,163.6 Z" fill="#737374"/>
<path d="M602.5,167.3 L596.1,163.6 L596.1,156.2 L602.5,152.5 L608.9,156.2 L608.9,163.6 Z" fill="#49494a"/>
<path d="M615.0,167.3 L608.6,163.6 L608.6,156.2 L615.0,152.5 L621.4,156.2 L621.4,163.6 Z" fill="#747475"/>
<path d="M627.5,167.3 L621.1,163.6 L621.1,156.2 L627.5,152.5 L633.9,156.2 L633.9,163.6 Z" fill="#868687"/>
<path d="M640.0,167.3 L633.6,163.6 L633.6,156.2 L640.0,152.5 L646.4,156.2 L646.4,163.6 Z" fill="#868687"/>
<path d="M652.5,167.3 L646.1,163.6 L646.1,156.2 L652.5,152.5 L658.9,156.2 L658.9,163.6 Z" fill="#888889"/>
<path d="M665.0,167.3 L658.6,163.6 L658.6,156.2 L665.0,152.5 L671.4,156.2 L671.4,163.6 Z" fill="#808081"/>
<path d="M677.5,167.3 L671.1,163.6 L671.1,156.2 L677.5,152.5 L683.9,156.2 L683.9,163.6 Z" fill="#79797a"/>
<path d="M690.0,167.3 L683.6,163.6 L683.6,156.2 L690.0,152.5 L696.4,156.2 L696.4,163.6 Z" fill="#686869"/>
<path d="M702.5,167.3 L696.1,163.6 L696.1,156.2 L702.5,152.5 L708.9,156.2 L708.9,163.6 Z" fill="#676768"/>
<path d="M715.0,167.3 L708.6,163.6 L708.6,156.2 L715.0,152.5 L721.4,156.2 L721.4,163.6 Z" fill="#666667"/>
<path d="M308.8,178.1 L302.4,174.4 L302.4,167.0 L308.8,163.4 L315.1,167.0 L315.1,174.4 Z" fill="#b2b2b3"/>
<path d="M321.2,178.1 L314.9,174.4 L314.9,167.0 L321.2,163.4 L327.6,167.0 L327.6,174.4 Z" fill="#b1b1b2"/>
<path d="M333.8,178.1 L327.4,174.4 L327.4,167.0 L333.8,163.4 L340.1,167.0 L340.1,174.4 Z" fill="#b4b4b5"/>
<path d="M346.2,178.1 L339.9,174.4 L339.9,167.0 L346.2,163.4 L352.6,167.0 L352.6,174.4 Z" fill="#b8b8b9"/>
<path d="M358.8,178.1 L352.4,174.4 L352.4,167.0 L358.8,163.4 L365.1,167.0 L365.1,174.4 Z" fill="#b7b7b8"/>
<path d="M371.2,178.1 L364.9,174.4 L364.9,167.0 L371.2,163.4 L377.6,167.0 L377.6,174.4 Z" fill="#aeaeaf"/>
<path d="M383.8,178.1 L377.4,174.4 L377.4,167.0 L383.8,163.4 L390.1,167.0 L390.1,174.4 Z" fill="#aaaaab"/>
<path d="M396.2,178.1 L389.9,174.4 L389.9,167.0 L396.2,163.4 L402.6,167.0 L402.6,174.4 Z" fill="#ababac"/>
<path d="M408.8,178.1 L402.4,174.4 L402.4,167.0 L408.8,163.4 L415.1,167.0 L415.1,174.4 Z" fill="#a9a9aa"/>
<path d="M421.2,178.1 L414.9,174.4 L414.9,167.0 L421.2,163.4 L427.6,167.0 L427.6,174.4 Z" fill="#a5a5a6"/>
<path d="M433.8,178.1 L427.4,174.4 L427.4,167.0 L433.8,163.4 L440.1,167.0 L440.1,174.4 Z" fill="#a4a4a5"/>
<path d="M446.2,178.1 L439.9,174.4 L439.9,167.0 L446.2,163.4 L452.6,167.0 L452.6,174.4 Z" fill="#a0a0a1"/>
<path d="M458.8,178.1 L452.4,174.4 L452.4,167.0 L458.8,163.4 L465.1,167.0 L465.1,174.4 Z" fill="#9a9a9b"/>
<path d="M471.2,178.1 L464.9,174.4 L464.9,167.0 L471.2,163.4 L477.6,167.0 L477.6,174.4 Z" fill="#a1a1a2"/>
<path d="M483.8,178.1 L477.4,174.4 L477.4,167.0 L483.8,163.4 L490.1,167.0 L490.1,174.4 Z" fill="#a5a5a6"/>
<path d="M496.2,178.1 L489.9,174.4 L489.9,167.0 L496.2,163.4 L502.6,167.0 L502.6,174.4 Z" fill="#ababac"/>
<path d="M508.8,178.1 L502.4,174.4 L502.4,167.0 L508.8,163.4 L515.1,167.0 L515.1,174.4 Z" fill="#afafb0"/>
<path d="M521.2,178.1 L514.9,174.4 L514.9,167.0 L521.2,163.4 L527.6,167.0 L527.6,174.4 Z" fill="#b2b2b3"/>
<path d="M533.8,178.1 L527.4,174.4 L527.4,167.0 L533.8,163.4 L540.1,167.0 L540.1,174.4 Z" fill="#b2b2b3"/>
<path d="M546.2,178.1 L539.9,174.4 L539.9,167.0 L546.2,163.4 L552.6,167.0 L552.6,174.4 Z" fill="#aeaeaf"/>
<path d="M558.8,178.1 L552.4,174.4 L552.4,167.0 L558.8,163.4 L565.1,167.0 L565.1,174.4 Z" fill="#a3a3a4"/>
<path d="M571.2,178.1 L564.9,174.4 L564.9,167.0 L571.2,163.4 L577.6,167.0 L577.6,174.4 Z" fill="#99999a"/>
<path d="M583.8,178.1 L577.4,174.4 L577.4,167.0 L583.8,163.4 L590.1,167.0 L590.1,174.4 Z" fill="#848485"/>
<path d="M596.2,178.1 L589.9,174.4 L589.9,167.0 L596.2,163.4 L602.6,167.0 L602.6,174.4 Z" fill="#656566"/>
<path d="M608.8,178.1 L602.4,174.4 L602.4,167.0 L608.8,163.4 L615.1,167.0 L615.1,174.4 Z" fill="#464647"/>
<path d="M621.2,178.1 L614.9,174.4 L614.9,167.0 L621.2,163.4 L627.6,167.0 L627.6,174.4 Z" fill="#868687"/>
<path d="M633.8,178.1 L627.4,174.4 L627.4,167.0 L633.8,163.4 L640.1,167.0 L640.1,174.4 Z" fill="#828283"/>
<path d="M646.2,178.1 L639.9,174.4 L639.9,167.0 L646.2,163.4 L652.6,167.0 L652.6,174.4 Z" fill="#7e7e7f"/>
<path d="M658.8,178.1 L652.4,174.4 L652.4,167.0 L658.8,163.4 L665.1,167.0 L665.1,174.4 Z" fill="#7f7f80"/>
<path d="M671.2,178.1 L664.9,174.4 L664.9,167.0 L671.2,163.4 L677.6,167.0 L677.6,174.4 Z" fill="#7a7a7b"/>
<path d="M683.8,178.1 L677.4,174.4 L677.4,167.0 L683.8,163.4 L690.1,167.0 L690.1,174.4 Z" fill="#6b6b6c"/>
<path d="M696.2,178.1 L689.9,174.4 L689.9,167.0 L696.2,163.4 L702.6,167.0 L702.6,174.4 Z" fill="#656566"/>
<path d="M708.8,178.1 L702.4,174.4 L702.4,167.0 L708.8,163.4 L715.1,167.0 L715.1,174.4 Z" fill="#636364"/>
<path d="M302.5,188.9 L296.1,185.2 L296.1,177.9 L302.5,174.2 L308.9,177.9 L308.9,185.2 Z" fill="#b5b5b6"/>
<path d="M315.0,188.9 L308.6,185.2 L308.6,177.9 L315.0,174.2 L321.4,177.9 L321.4,185.2 Z" fill="#b0b0b1"/>
<path d="M327.5,188.9 L321.1,185.2 L321.1,177.9 L327.5,174.2 L333.9,177.9 L333.9,185.2 Z" fill="#bababb"/>
<path d="M340.0,188.9 L333.6,185.2 L333.6,177.9 L340.0,174.2 L346.4,177.9 L346.4,185.2 Z" fill="#bababb"/>
<path d="M352.5,188.9 L346.1,185.2 L346.1,177.9 L352.5,174.2 L358.9,177.9 L358.9,185.2 Z" fill="#bbbbbc"/>
<path d="M365.0,188.9 L358.6,185.2 L358.6,177.9 L365.0,174.2 L371.4,177.9 L371.4,185.2 Z" fill="#b5b5b6"/>
<path d="M377.5,188.9 L371.1,185.2 L371.1,177.9 L377.5,174.2 L383.9,177.9 L383.9,185.2 Z" fill="#b3b3b4"/>
<path d="M390.0,188.9 L383.6,185.2 L383.6,177.9 L390.0,174.2 L396.4,177.9 L396.4,185.2 Z" fill="#b2b2b3"/>
<path d="M402.5,188.9 L396.1,185.2 L396.1,177.9 L402.5,174.2 L408.9,177.9 L408.9,185.2 Z" fill="#b0b0b1"/>
<path d="M415.0,188.9 L408.6,185.2 L408.6,177.9 L415.0,174.2 L421.4,177.9 L421.4,185.2 Z" fill="#afafb0"/>
<path d="M427.5,188.9 L421.1,185.2 L421.1,177.9 L427.5,174.2 L433.9,177.9 L433.9,185.2 Z" fill="#b2b2b3"/>
<path d="M440.0,188.9 L433.6,185.2 L433.6,177.9 L440.0,174.2 L446.4,177.9 L446.4,185.2 Z" fill="#b5b5b6"/>
<path d="M452.5,188.9 L446.1,185.2 L446.1,177.9 L452.5,174.2 L458.9,177.9 L458.9,185.2 Z" fill="#aeaeaf"/>
<path d="M465.0,188.9 L458.6,185.2 L458.6,177.9 L465.0,174.2 L471.4,177.9 L471.4,185.2 Z" fill="#a4a4a5"/>
<path d="M477.5,188.9 L471.1,185.2 L471.1,177.9 L477.5,174.2 L483.9,177.9 L483.9,185.2 Z" fill="#9d9d9e"/>
<path d="M490.0,188.9 L483.6,185.2 L483.6,177.9 L490.0,174.2 L496.4,177.9 L496.4,185.2 Z" fill="#99999a"/>
<path d="M502.5,188.9 L496.1,185.2 L496.1,177.9 L502.5,174.2 L508.9,177.9 L508.9,185.2 Z" fill="#99999a"/>
<path d="M515.0,188.9 L508.6,185.2 L508.6,177.9 L515.0,174.2 L521.4,177.9 L521.4,185.2 Z" fill="#9d9d9e"/>
<path d="M527.5,188.9 L521.1,185.2 L521.1,177.9 L527.5,174.2 L533.9,177.9 L533.9,185.2 Z" fill="#a5a5a6"/>
<path d="M540.0,188.9 L533.6,185.2 L533.6,177.9 L540.0,174.2 L546.4,177.9 L546.4,185.2 Z" fill="#a1a1a2"/>
<path d="M552.5,188.9 L546.1,185.2 L546.1,177.9 L552.5,174.2 L558.9,177.9 L558.9,185.2 Z" fill="#9e9e9f"/>
<path d="M565.0,188.9 L558.6,185.2 L558.6,177.9 L565.0,174.2 L571.4,177.9 L571.4,185.2 Z" fill="#979798"/>
<path d="M577.5,188.9 L571.1,185.2 L571.1,177.9 L577.5,174.2 L583.9,177.9 L583.9,185.2 Z" fill="#848485"/>
<path d="M590.0,188.9 L583.6,185.2 L583.6,177.9 L590.0,174.2 L596.4,177.9 L596.4,185.2 Z" fill="#757576"/>
<path d="M602.5,188.9 L596.1,185.2 L596.1,177.9 L602.5,174.2 L608.9,177.9 L608.9,185.2 Z" fill="#4a4a4b"/>
<path d="M615.0,188.9 L608.6,185.2 L608.6,177.9 L615.0,174.2 L621.4,177.9 L621.4,185.2 Z" fill="#5a5a5b"/>
<path d="M627.5,188.9 L621.1,185.2 L621.1,177.9 L627.5,174.2 L633.9,177.9 L633.9,185.2 Z" fill="#8b8b8c"/>
<path d="M640.0,188.9 L633.6,185.2 L633.6,177.9 L640.0,174.2 L646.4,177.9 L646.4,185.2 Z" fill="#838384"/>
<path d="M652.5,188.9 L646.1,185.2 L646.1,177.9 L652.5,174.2 L658.9,177.9 L658.9,185.2 Z" fill="#818182"/>
<path d="M665.0,188.9 L658.6,185.2 L658.6,177.9 L665.0,174.2 L671.4,177.9 L671.4,185.2 Z" fill="#79797a"/>
<path d="M677.5,188.9 L671.1,185.2 L671.1,177.9 L677.5,174.2 L683.9,177.9 L683.9,185.2 Z" fill="#747475"/>
<path d="M690.0,188.9 L683.6,185.2 L683.6,177.9 L690.0,174.2 L696.4,177.9 L696.4,185.2 Z" fill="#656566"/>
<path d="M702.5,188.9 L696.1,185.2 L696.1,177.9 L702.5,174.2 L708.9,177.9 L708.9,185.2 Z" fill="#646465"/>
<path d="M296.2,199.7 L289.9,196.1 L289.9,188.7 L296.2,185.0 L302.6,188.7 L302.6,196.1 Z" fill="#b8b8b9"/>
<path d="M308.8,199.7 L302.4,196.1 L302.4,188.7 L308.8,185.0 L315.1,188.7 L315.1,196.1 Z" fill="#b0b0b1"/>
<path d="M321.2,199.7 L314.9,196.1 L314.9,188.7 L321.2,185.0 L327.6,188.7 L327.6,196.1 Z" fill="#b3b3b4"/>
<path d="M333.8,199.7 L327.4,196.1 L327.4,188.7 L333.8,185.0 L340.1,188.7 L340.1,196.1 Z" fill="#bebebf"/>
<path d="M346.2,199.7 L339.9,196.1 L339.9,188.7 L346.2,185.0 L352.6,188.7 L352.6,196.1 Z" fill="#bcbcbd"/>
<path d="M358.8,199.7 L352.4,196.1 L352.4,188.7 L358.8,185.0 L365.1,188.7 L365.1,196.1 Z" fill="#b9b9ba"/>
<path d="M371.2,199.7 L364.9,196.1 L364.9,188.7 L371.2,185.0 L377.6,188.7 L377.6,196.1 Z" fill="#b5b5b6"/>
<path d="M383.8,199.7 L377.4,196.1 L377.4,188.7 L383.8,185.0 L390.1,188.7 L390.1,196.1 Z" fill="#b3b3b4"/>
<path d="M396.2,199.7 L389.9,196.1 L389.9,188.7 L396.2,185.0 L402.6,188.7 L402.6,196.1 Z" fill="#adadae"/>
<path d="M408.8,199.7 L402.4,196.1 L402.4,188.7 L408.8,185.0 L415.1,188.7 L415.1,196.1 Z" fill="#b1b1b2"/>
<path d="M421.2,199.7 L414.9,196.1 L414.9,188.7 L421.2,185.0 L427.6,188.7 L427.6,196.1 Z" fill="#b2b2b3"/>
<path d="M433.8,199.7 L427.4,196.1 L427.4,188.7 L433.8,185.0 L440.1,188.7 L440.1,196.1 Z" fill="#b4b4b5"/>
<path d="M446.2,199.7 L439.9,196.1 L439.9,188.7 L446.2,185.0 L452.6,188.7 L452.6,196.1 Z" fill="#b3b3b4"/>
<path d="M458.8,199.7 L452.4,196.1 L452.4,188.7 L458.8,185.0 L465.1,188.7 L465.1,196.1 Z" fill="#b2b2b3"/>
<path d="M471.2,199.7 L464.9,196.1 L464.9,188.7 L471.2,185.0 L477.6,188.7 L477.6,196.1 Z" fill="#a9a9aa"/>
<path d="M483.8,199.7 L477.4,196.1 L477.4,188.7 L483.8,185.0 L490.1,188.7 L490.1,196.1 Z" fill="#99999a"/>
<path d="M496.2,199.7 L489.9,196.1 L489.9,188.7 L496.2,185.0 L502.6,188.7 L502.6,196.1 Z" fill="#99999a"/>
<path d="M508.8,199.7 L502.4,196.1 L502.4,188.7 L508.8,185.0 L515.1,188.7 L515.1,196.1 Z" fill="#979798"/>
<path d="M521.2,199.7 L514.9,196.1 L514.9,188.7 L521.2,185.0 L527.6,188.7 L527.6,196.1 Z" fill="#9b9b9c"/>
<path d="M533.8,199.7 L527.4,196.1 L527.4,188.7 L533.8,185.0 L540.1,188.7 L540.1,196.1 Z" fill="#a0a0a1"/>
<path d="M546.2,199.7 L539.9,196.1 L539.9,188.7 L546.2,185.0 L552.6,188.7 L552.6,196.1 Z" fill="#979798"/>
<path d="M558.8,199.7 L552.4,196.1 L552.4,188.7 L558.8,185.0 L565.1,188.7 L565.1,196.1 Z" fill="#989899"/>
<path d="M571.2,199.7 L564.9,196.1 L564.9,188.7 L571.2,185.0 L577.6,188.7 L577.6,196.1 Z" fill="#909091"/>
<path d="M583.8,199.7 L577.4,196.1 L577.4,188.7 L583.8,185.0 L590.1,188.7 L590.1,196.1 Z" fill="#7b7b7c"/>
<path d="M596.2,199.7 L589.9,196.1 L589.9,188.7 L596.2,185.0 L602.6,188.7 L602.6,196.1 Z" fill="#707071"/>
<path d="M608.8,199.7 L602.4,196.1 L602.4,188.7 L608.8,185.0 L615.1,188.7 L615.1,196.1 Z" fill="#3c3c3d"/>
<path d="M621.2,199.7 L614.9,196.1 L614.9,188.7 L621.2,185.0 L627.6,188.7 L627.6,196.1 Z" fill="#79797a"/>
<path d="M633.8,199.7 L627.4,196.1 L627.4,188.7 L633.8,185.0 L640.1,188.7 L640.1,196.1 Z" fill="#828283"/>
<path d="M646.2,199.7 L639.9,196.1 L639.9,188.7 L646.2,185.0 L652.6,188.7 L652.6,196.1 Z" fill="#7c7c7d"/>
<path d="M658.8,199.7 L652.4,196.1 L652.4,188.7 L658.8,185.0 L665.1,188.7 L665.1,196.1 Z" fill="#7c7c7d"/>
<path d="M671.2,199.7 L664.9,196.1 L664.9,188.7 L671.2,185.0 L677.6,188.7 L677.6,196.1 Z" fill="#777778"/>
<path d="M683.8,199.7 L677.4,196.1 L677.4,188.7 L683.8,185.0 L690.1,188.7 L690.1,196.1 Z" fill="#6b6b6c"/>
<path d="M696.2,199.7 L689.9,196.1 L689.9,188.7 L696.2,185.0 L702.6,188.7 L702.6,196.1 Z" fill="#636364"/>
<path d="M708.8,199.7 L702.4,196.1 L702.4,188.7 L708.8,185.0 L715.1,188.7 L715.1,196.1 Z" fill="#676768"/>
<path d="M290.0,210.6 L283.6,206.9 L283.6,199.5 L290.0,195.8 L296.4,199.5 L296.4,206.9 Z" fill="#bebebf"/>
<path d="M302.5,210.6 L296.1,206.9 L296.1,199.5 L302.5,195.8 L308.9,199.5 L308.9,206.9 Z" fill="#b9b9ba"/>
<path d="M315.0,210.6 L308.6,206.9 L308.6,199.5 L315.0,195.8 L321.4,199.5 L321.4,206.9 Z" fill="#b8b8b9"/>
<path d="M327.5,210.6 L321.1,206.9 L321.1,199.5 L327.5,195.8 L333.9,199.5 L333.9,206.9 Z" fill="#b9b9ba"/>
<path d="M340.0,210.6 L333.6,206.9 L333.6,199.5 L340.0,195.8 L346.4,199.5 L346.4,206.9 Z" fill="#c1c1c2"/>
<path d="M352.5,210.6 L346.1,206.9 L346.1,199.5 L352.5,195.8 L358.9,199.5 L358.9,206.9 Z" fill="#c0c0c1"/>
<path d="M365.0,210.6 L358.6,206.9 L358.6,199.5 L365.0,195.8 L371.4,199.5 L371.4,206.9 Z" fill="#bdbdbe"/>
<path d="M377.5,210.6 L371.1,206.9 L371.1,199.5 L377.5,195.8 L383.9,199.5 L383.9,206.9 Z" fill="#b6b6b7"/>
<path d="M390.0,210.6 L383.6,206.9 L383.6,199.5 L390.0,195.8 L396.4,199.5 L396.4,206.9 Z" fill="#b3b3b4"/>
<path d="M402.5,210.6 L396.1,206.9 L396.1,199.5 L402.5,195.8 L408.9,199.5 L408.9,206.9 Z" fill="#adadae"/>
<path d="M415.0,210.6 L408.6,206.9 L408.6,199.5 L415.0,195.8 L421.4,199.5 L421.4,206.9 Z" fill="#afafb0"/>
<path d="M427.5,210.6 L421.1,206.9 L421.1,199.5 L427.5,195.8 L433.9,199.5 L433.9,206.9 Z" fill="#afafb0"/>
<path d="M440.0,210.6 L433.6,206.9 L433.6,199.5 L440.0,195.8 L446.4,199.5 L446.4,206.9 Z" fill="#acacad"/>
<path d="M452.5,210.6 L446.1,206.9 L446.1,199.5 L452.5,195.8 L458.9,199.5 L458.9,206.9 Z" fill="#b3b3b4"/>
<path d="M465.0,210.6 L458.6,206.9 L458.6,199.5 L465.0,195.8 L471.4,199.5 L471.4,206.9 Z" fill="#acacad"/>
<path d="M477.5,210.6 L471.1,206.9 L471.1,199.5 L477.5,195.8 L483.9,199.5 L483.9,206.9 Z" fill="#9d9d9e"/>
<path d="M490.0,210.6 L483.6,206.9 L483.6,199.5 L490.0,195.8 L496.4,199.5 L496.4,206.9 Z" fill="#a0a0a1"/>
<path d="M502.5,210.6 L496.1,206.9 L496.1,199.5 L502.5,195.8 L508.9,199.5 L508.9,206.9 Z" fill="#9e9e9f"/>
<path d="M515.0,210.6 L508.6,206.9 L508.6,199.5 L515.0,195.8 L521.4,199.5 L521.4,206.9 Z" fill="#a6a6a7"/>
<path d="M527.5,210.6 L521.1,206.9 L521.1,199.5 L527.5,195.8 L533.9,199.5 L533.9,206.9 Z" fill="#ababac"/>
<path d="M540.0,210.6 L533.6,206.9 L533.6,199.5 L540.0,195.8 L546.4,199.5 L546.4,206.9 Z" fill="#a5a5a6"/>
<path d="M552.5,210.6 L546.1,206.9 L546.1,199.5 L552.5,195.8 L558.9,199.5 L558.9,206.9 Z" fill="#a0a0a1"/>
<path d="M565.0,210.6 L558.6,206.9 L558.6,199.5 L565.0,195.8 L571.4,199.5 L571.4,206.9 Z" fill="#9a9a9b"/>
<path d="M577.5,210.6 L571.1,206.9 L571.1,199.5 L577.5,195.8 L583.9,199.5 L583.9,206.9 Z" fill="#888889"/>
<path d="M590.0,210.6 L583.6,206.9 L583.6,199.5 L590.0,195.8 L596.4,199.5 L596.4,206.9 Z" fill="#79797a"/>
<path d="M602.5,210.6 L596.1,206.9 L596.1,199.5 L602.5,195.8 L608.9,199.5 L608.9,206.9 Z" fill="#585859"/>
<path d="M615.0,210.6 L608.6,206.9 L608.6,199.5 L615.0,195.8 L621.4,199.5 L621.4,206.9 Z" fill="#49494a"/>
<path d="M627.5,210.6 L621.1,206.9 L621.1,199.5 L627.5,195.8 L633.9,199.5 L633.9,206.9 Z" fill="#8b8b8c"/>
<path d="M640.0,210.6 L633.6,206.9 L633.6,199.5 L640.0,195.8 L646.4,199.5 L646.4,206.9 Z" fill="#828283"/>
<path d="M652.5,210.6 L646.1,206.9 L646.1,199.5 L652.5,195.8 L658.9,199.5 L658.9,206.9 Z" fill="#7c7c7d"/>
<path d="M665.0,210.6 L658.6,206.9 L658.6,199.5 L665.0,195.8 L671.4,199.5 L671.4,206.9 Z" fill="#7b7b7c"/>
<path d="M677.5,210.6 L671.1,206.9 L671.1,199.5 L677.5,195.8 L683.9,199.5 L683.9,206.9 Z" fill="#6a6a6b"/>
<path d="M690.0,210.6 L683.6,206.9 L683.6,199.5 L690.0,195.8 L696.4,199.5 L696.4,206.9 Z" fill="#636364"/>
<path d="M702.5,210.6 L696.1,206.9 L696.1,199.5 L702.5,195.8 L708.9,199.5 L708.9,206.9 Z" fill="#646465"/>
<path d="M296.2,221.4 L289.9,217.7 L289.9,210.3 L296.2,206.7 L302.6,210.3 L302.6,217.7 Z" fill="#bfbfc0"/>
<path d="M308.8,221.4 L302.4,217.7 L302.4,210.3 L308.8,206.7 L315.1,210.3 L315.1,217.7 Z" fill="#b8b8b9"/>
<path d="M321.2,221.4 L314.9,217.7 L314.9,210.3 L321.2,206.7 L327.6,210.3 L327.6,217.7 Z" fill="#bebebf"/>
<path d="M333.8,221.4 L327.4,217.7 L327.4,210.3 L333.8,206.7 L340.1,210.3 L340.1,217.7 Z" fill="#bfbfc0"/>
<path d="M346.2,221.4 L339.9,217.7 L339.9,210.3 L346.2,206.7 L352.6,210.3 L352.6,217.7 Z" fill="#c4c4c5"/>
<path d="M358.8,221.4 L352.4,217.7 L352.4,210.3 L358.8,206.7 L365.1,210.3 L365.1,217.7 Z" fill="#bebebf"/>
<path d="M371.2,221.4 L364.9,217.7 L364.9,210.3 L371.2,206.7 L377.6,210.3 L377.6,217.7 Z" fill="#bbbbbc"/>
<path d="M383.8,221.4 L377.4,217.7 L377.4,210.3 L383.8,206.7 L390.1,210.3 L390.1,217.7 Z" fill="#b8b8b9"/>
<path d="M396.2,221.4 L389.9,217.7 L389.9,210.3 L396.2,206.7 L402.6,210.3 L402.6,217.7 Z" fill="#b3b3b4"/>
<path d="M408.8,221.4 L402.4,217.7 L402.4,210.3 L408.8,206.7 L415.1,210.3 L415.1,217.7 Z" fill="#ababac"/>
<path d="M421.2,221.4 L414.9,217.7 L414.9,210.3 L421.2,206.7 L427.6,210.3 L427.6,217.7 Z" fill="#a1a1a2"/>
<path d="M433.8,221.4 L427.4,217.7 L427.4,210.3 L433.8,206.7 L440.1,210.3 L440.1,217.7 Z" fill="#a0a0a1"/>
<path d="M446.2,221.4 L439.9,217.7 L439.9,210.3 L446.2,206.7 L452.6,210.3 L452.6,217.7 Z" fill="#9c9c9d"/>
<path d="M458.8,221.4 L452.4,217.7 L452.4,210.3 L458.8,206.7 L465.1,210.3 L465.1,217.7 Z" fill="#a3a3a4"/>
<path d="M471.2,221.4 L464.9,217.7 L464.9,210.3 L471.2,206.7 L477.6,210.3 L477.6,217.7 Z" fill="#a2a2a3"/>
<path d="M483.8,221.4 L477.4,217.7 L477.4,210.3 L483.8,206.7 L490.1,210.3 L490.1,217.7 Z" fill="#9e9e9f"/>
<path d="M496.2,221.4 L489.9,217.7 L489.9,210.3 L496.2,206.7 L502.6,210.3 L502.6,217.7 Z" fill="#a7a7a8"/>
<path d="M508.8,221.4 L502.4,217.7 L502.4,210.3 L508.8,206.7 L515.1,210.3 L515.1,217.7 Z" fill="#b1b1b2"/>
<path d="M521.2,221.4 L514.9,217.7 L514.9,210.3 L521.2,206.7 L527.6,210.3 L527.6,217.7 Z" fill="#b3b3b4"/>
<path d="M533.8,221.4 L527.4,217.7 L527.4,210.3 L533.8,206.7 L540.1,210.3 L540.1,217.7 Z" fill="#b0b0b1"/>
<path d="M546.2,221.4 L539.9,217.7 L539.9,210.3 L546.2,206.7 L552.6,210.3 L552.6,217.7 Z" fill="#adadae"/>
<path d="M558.8,221.4 L552.4,217.7 L552.4,210.3 L558.8,206.7 L565.1,210.3 L565.1,217.7 Z" fill="#a9a9aa"/>
<path d="M571.2,221.4 L564.9,217.7 L564.9,210.3 L571.2,206.7 L577.6,210.3 L577.6,217.7 Z" fill="#9d9d9e"/>
<path d="M583.8,221.4 L577.4,217.7 L577.4,210.3 L583.8,206.7 L590.1,210.3 L590.1,217.7 Z" fill="#868687"/>
<path d="M596.2,221.4 L589.9,217.7 L589.9,210.3 L596.2,206.7 L602.6,210.3 L602.6,217.7 Z" fill="#757576"/>
<path d="M608.8,221.4 L602.4,217.7 L602.4,210.3 L608.8,206.7 L615.1,210.3 L615.1,217.7 Z" fill="#3c3c3d"/>
<path d="M621.2,221.4 L614.9,217.7 L614.9,210.3 L621.2,206.7 L627.6,210.3 L627.6,217.7 Z" fill="#6a6a6b"/>
<path d="M633.8,221.4 L627.4,217.7 L627.4,210.3 L633.8,206.7 L640.1,210.3 L640.1,217.7 Z" fill="#828283"/>
<path d="M646.2,221.4 L639.9,217.7 L639.9,210.3 L646.2,206.7 L652.6,210.3 L652.6,217.7 Z" fill="#7f7f80"/>
<path d="M658.8,221.4 L652.4,217.7 L652.4,210.3 L658.8,206.7 L665.1,210.3 L665.1,217.7 Z" fill="#7a7a7b"/>
<path d="M671.2,221.4 L664.9,217.7 L664.9,210.3 L671.2,206.7 L677.6,210.3 L677.6,217.7 Z" fill="#6f6f70"/>
<path d="M683.8,221.4 L677.4,217.7 L677.4,210.3 L683.8,206.7 L690.1,210.3 L690.1,217.7 Z" fill="#646465"/>
<path d="M696.2,221.4 L689.9,217.7 L689.9,210.3 L696.2,206.7 L702.6,210.3 L702.6,217.7 Z" fill="#686869"/>
<path d="M290.0,232.2 L283.6,228.5 L283.6,221.2 L290.0,217.5 L296.4,221.2 L296.4,228.5 Z" fill="#b9b9ba"/>
<path d="M302.5,232.2 L296.1,228.5 L296.1,221.2 L302.5,217.5 L308.9,221.2 L308.9,228.5 Z" fill="#bfbfc0"/>
<path d="M315.0,232.2 L308.6,228.5 L308.6,221.2 L315.0,217.5 L321.4,221.2 L321.4,228.5 Z" fill="#c1c1c2"/>
<path d="M327.5,232.2 L321.1,228.5 L321.1,221.2 L327.5,217.5 L333.9,221.2 L333.9,228.5 Z" fill="#c3c3c4"/>
<path d="M340.0,232.2 L333.6,228.5 L333.6,221.2 L340.0,217.5 L346.4,221.2 L346.4,228.5 Z" fill="#bdbdbe"/>
<path d="M352.5,232.2 L346.1,228.5 L346.1,221.2 L352.5,217.5 L358.9,221.2 L358.9,228.5 Z" fill="#bebebf"/>
<path d="M365.0,232.2 L358.6,228.5 L358.6,221.2 L365.0,217.5 L371.4,221.2 L371.4,228.5 Z" fill="#bebebf"/>
<path d="M377.5,232.2 L371.1,228.5 L371.1,221.2 L377.5,217.5 L383.9,221.2 L383.9,228.5 Z" fill="#bebebf"/>
<path d="M390.0,232.2 L383.6,228.5 L383.6,221.2 L390.0,217.5 L396.4,221.2 L396.4,228.5 Z" fill="#bfbfc0"/>
<path d="M402.5,232.2 L396.1,228.5 L396.1,221.2 L402.5,217.5 L408.9,221.2 L408.9,228.5 Z" fill="#b2b2b3"/>
<path d="M415.0,232.2 L408.6,228.5 L408.6,221.2 L415.0,217.5 L421.4,221.2 L421.4,228.5 Z" fill="#9e9e9f"/>
<path d="M427.5,232.2 L421.1,228.5 L421.1,221.2 L427.5,217.5 L433.9,221.2 L433.9,228.5 Z" fill="#9c9c9d"/>
<path d="M440.0,232.2 L433.6,228.5 L433.6,221.2 L440.0,217.5 L446.4,221.2 L446.4,228.5 Z" fill="#989899"/>
<path d="M452.5,232.2 L446.1,228.5 L446.1,221.2 L452.5,217.5 L458.9,221.2 L458.9,228.5 Z" fill="#9a9a9b"/>
<path d="M465.0,232.2 L458.6,228.5 L458.6,221.2 L465.0,217.5 L471.4,221.2 L471.4,228.5 Z" fill="#a4a4a5"/>
<path d="M477.5,232.2 L471.1,228.5 L471.1,221.2 L477.5,217.5 L483.9,221.2 L483.9,228.5 Z" fill="#a0a0a1"/>
<path d="M490.0,232.2 L483.6,228.5 L483.6,221.2 L490.0,217.5 L496.4,221.2 L496.4,228.5 Z" fill="#a9a9aa"/>
<path d="M502.5,232.2 L496.1,228.5 L496.1,221.2 L502.5,217.5 L508.9,221.2 L508.9,228.5 Z" fill="#b2b2b3"/>
<path d="M515.0,232.2 L508.6,228.5 L508.6,221.2 L515.0,217.5 L521.4,221.2 L521.4,228.5 Z" fill="#bbbbbc"/>
<path d="M527.5,232.2 L521.1,228.5 L521.1,221.2 L527.5,217.5 L533.9,221.2 L533.9,228.5 Z" fill="#bdbdbe"/>
<path d="M540.0,232.2 L533.6,228.5 L533.6,221.2 L540.0,217.5 L546.4,221.2 L546.4,228.5 Z" fill="#b7b7b8"/>
<path d="M552.5,232.2 L546.1,228.5 L546.1,221.2 L552.5,217.5 L558.9,221.2 L558.9,228.5 Z" fill="#afafb0"/>
<path d="M565.0,232.2 L558.6,228.5 L558.6,221.2 L565.0,217.5 L571.4,221.2 L571.4,228.5 Z" fill="#a9a9aa"/>
<path d="M577.5,232.2 L571.1,228.5 L571.1,221.2 L577.5,217.5 L583.9,221.2 L583.9,228.5 Z" fill="#8e8e8f"/>
<path d="M590.0,232.2 L583.6,228.5 L583.6,221.2 L590.0,217.5 L596.4,221.2 L596.4,228.5 Z" fill="#7f7f80"/>
<path d="M602.5,232.2 L596.1,228.5 L596.1,221.2 L602.5,217.5 L608.9,221.2 L608.9,228.5 Z" fill="#656566"/>
<path d="M615.0,232.2 L608.6,228.5 L608.6,221.2 L615.0,217.5 L621.4,221.2 L621.4,228.5 Z" fill="#454546"/>
<path d="M627.5,232.2 L621.1,228.5 L621.1,221.2 L627.5,217.5 L633.9,221.2 L633.9,228.5 Z" fill="#888889"/>
<path d="M640.0,232.2 L633.6,228.5 L633.6,221.2 L640.0,217.5 L646.4,221.2 L646.4,228.5 Z" fill="#868687"/>
<path d="M652.5,232.2 L646.1,228.5 L646.1,221.2 L652.5,217.5 L658.9,221.2 L658.9,228.5 Z" fill="#808081"/>
<path d="M665.0,232.2 L658.6,228.5 L658.6,221.2 L665.0,217.5 L671.4,221.2 L671.4,228.5 Z" fill="#727273"/>
<path d="M677.5,232.2 L671.1,228.5 L671.1,221.2 L677.5,217.5 L683.9,221.2 L683.9,228.5 Z" fill="#686869"/>
<path d="M690.0,232.2 L683.6,228.5 L683.6,221.2 L690.0,217.5 L696.4,221.2 L696.4,228.5 Z" fill="#666667"/>
<path d="M296.2,243.0 L289.9,239.4 L289.9,232.0 L296.2,228.3 L302.6,232.0 L302.6,239.4 Z" fill="#b9b9ba"/>
<path d="M308.8,243.0 L302.4,239.4 L302.4,232.0 L308.8,228.3 L315.1,232.0 L315.1,239.4 Z" fill="#bbbbbc"/>
<path d="M321.2,243.0 L314.9,239.4 L314.9,232.0 L321.2,228.3 L327.6,232.0 L327.6,239.4 Z" fill="#bcbcbd"/>
<path d="M333.8,243.0 L327.4,239.4 L327.4,232.0 L333.8,228.3 L340.1,232.0 L340.1,239.4 Z" fill="#bbbbbc"/>
<path d="M346.2,243.0 L339.9,239.4 L339.9,232.0 L346.2,228.3 L352.6,232.0 L352.6,239.4 Z" fill="#bebebf"/>
<path d="M358.8,243.0 L352.4,239.4 L352.4,232.0 L358.8,228.3 L365.1,232.0 L365.1,239.4 Z" fill="#c1c1c2"/>
<path d="M371.2,243.0 L364.9,239.4 L364.9,232.0 L371.2,228.3 L377.6,232.0 L377.6,239.4 Z" fill="#bcbcbd"/>
<path d="M383.8,243.0 L377.4,239.4 L377.4,232.0 L383.8,228.3 L390.1,232.0 L390.1,239.4 Z" fill="#c0c0c1"/>
<path d="M396.2,243.0 L389.9,239.4 L389.9,232.0 L396.2,228.3 L402.6,232.0 L402.6,239.4 Z" fill="#bbbbbc"/>
<path d="M408.8,243.0 L402.4,239.4 L402.4,232.0 L408.8,228.3 L415.1,232.0 L415.1,239.4 Z" fill="#acacad"/>
<path d="M421.2,243.0 L414.9,239.4 L414.9,232.0 L421.2,228.3 L427.6,232.0 L427.6,239.4 Z" fill="#a5a5a6"/>
<path d="M433.8,243.0 L427.4,239.4 L427.4,232.0 L433.8,228.3 L440.1,232.0 L440.1,239.4 Z" fill="#9b9b9c"/>
<path d="M446.2,243.0 L439.9,239.4 L439.9,232.0 L446.2,228.3 L452.6,232.0 L452.6,239.4 Z" fill="#9e9e9f"/>
<path d="M458.8,243.0 L452.4,239.4 L452.4,232.0 L458.8,228.3 L465.1,232.0 L465.1,239.4 Z" fill="#a5a5a6"/>
<path d="M471.2,243.0 L464.9,239.4 L464.9,232.0 L471.2,228.3 L477.6,232.0 L477.6,239.4 Z" fill="#aeaeaf"/>
<path d="M483.8,243.0 L477.4,239.4 L477.4,232.0 L483.8,228.3 L490.1,232.0 L490.1,239.4 Z" fill="#aeaeaf"/>
<path d="M496.2,243.0 L489.9,239.4 L489.9,232.0 L496.2,228.3 L502.6,232.0 L502.6,239.4 Z" fill="#bababb"/>
<path d="M508.8,243.0 L502.4,239.4 L502.4,232.0 L508.8,228.3 L515.1,232.0 L515.1,239.4 Z" fill="#c3c3c4"/>
<path d="M521.2,243.0 L514.9,239.4 L514.9,232.0 L521.2,228.3 L527.6,232.0 L527.6,239.4 Z" fill="#c5c5c6"/>
<path d="M533.8,243.0 L527.4,239.4 L527.4,232.0 L533.8,228.3 L540.1,232.0 L540.1,239.4 Z" fill="#c0c0c1"/>
<path d="M546.2,243.0 L539.9,239.4 L539.9,232.0 L546.2,228.3 L552.6,232.0 L552.6,239.4 Z" fill="#bebebf"/>
<path d="M558.8,243.0 L552.4,239.4 L552.4,232.0 L558.8,228.3 L565.1,232.0 L565.1,239.4 Z" fill="#b4b4b5"/>
<path d="M571.2,243.0 L564.9,239.4 L564.9,232.0 L571.2,228.3 L577.6,232.0 L577.6,239.4 Z" fill="#a1a1a2"/>
<path d="M583.8,243.0 L577.4,239.4 L577.4,232.0 L583.8,228.3 L590.1,232.0 L590.1,239.4 Z" fill="#878788"/>
<path d="M596.2,243.0 L589.9,239.4 L589.9,232.0 L596.2,228.3 L602.6,232.0 L602.6,239.4 Z" fill="#767677"/>
<path d="M608.8,243.0 L602.4,239.4 L602.4,232.0 L608.8,228.3 L615.1,232.0 L615.1,239.4 Z" fill="#404041"/>
<path d="M621.2,243.0 L614.9,239.4 L614.9,232.0 L621.2,228.3 L627.6,232.0 L627.6,239.4 Z" fill="#626263"/>
<path d="M633.8,243.0 L627.4,239.4 L627.4,232.0 L633.8,228.3 L640.1,232.0 L640.1,239.4 Z" fill="#858586"/>
<path d="M646.2,243.0 L639.9,239.4 L639.9,232.0 L646.2,228.3 L652.6,232.0 L652.6,239.4 Z" fill="#818182"/>
<path d="M658.8,243.0 L652.4,239.4 L652.4,232.0 L658.8,228.3 L665.1,232.0 L665.1,239.4 Z" fill="#787879"/>
<path d="M671.2,243.0 L664.9,239.4 L664.9,232.0 L671.2,228.3 L677.6,232.0 L677.6,239.4 Z" fill="#686869"/>
<path d="M683.8,243.0 L677.4,239.4 L677.4,232.0 L683.8,228.3 L690.1,232.0 L690.1,239.4 Z" fill="#676768"/>
<path d="M290.0,253.9 L283.6,250.2 L283.6,242.8 L290.0,239.1 L296.4,242.8 L296.4,250.2 Z" fill="#b8b8b9"/>
<path d="M302.5,253.9 L296.1,250.2 L296.1,242.8 L302.5,239.1 L308.9,242.8 L308.9,250.2 Z" fill="#b9b9ba"/>
<path d="M315.0,253.9 L308.6,250.2 L308.6,242.8 L315.0,239.1 L321.4,242.8 L321.4,250.2 Z" fill="#bdbdbe"/>
<path d="M327.5,253.9 L321.1,250.2 L321.1,242.8 L327.5,239.1 L333.9,242.8 L333.9,250.2 Z" fill="#bebebf"/>
<path d="M340.0,253.9 L333.6,250.2 L333.6,242.8 L340.0,239.1 L346.4,242.8 L346.4,250.2 Z" fill="#bdbdbe"/>
<path d="M352.5,253.9 L346.1,250.2 L346.1,242.8 L352.5,239.1 L358.9,242.8 L358.9,250.2 Z" fill="#c2c2c3"/>
<path d="M365.0,253.9 L358.6,250.2 L358.6,242.8 L365.0,239.1 L371.4,242.8 L371.4,250.2 Z" fill="#c0c0c1"/>
<path d="M377.5,253.9 L371.1,250.2 L371.1,242.8 L377.5,239.1 L383.9,242.8 L383.9,250.2 Z" fill="#bdbdbe"/>
<path d="M390.0,253.9 L383.6,250.2 L383.6,242.8 L390.0,239.1 L396.4,242.8 L396.4,250.2 Z" fill="#bdbdbe"/>
<path d="M402.5,253.9 L396.1,250.2 L396.1,242.8 L402.5,239.1 L408.9,242.8 L408.9,250.2 Z" fill="#bebebf"/>
<path d="M415.0,253.9 L408.6,250.2 L408.6,242.8 L415.0,239.1 L421.4,242.8 L421.4,250.2 Z" fill="#bcbcbd"/>
<path d="M427.5,253.9 L421.1,250.2 L421.1,242.8 L427.5,239.1 L433.9,242.8 L433.9,250.2 Z" fill="#b2b2b3"/>
<path d="M440.0,253.9 L433.6,250.2 L433.6,242.8 L440.0,239.1 L446.4,242.8 L446.4,250.2 Z" fill="#ababac"/>
<path d="M452.5,253.9 L446.1,250.2 L446.1,242.8 L452.5,239.1 L458.9,242.8 L458.9,250.2 Z" fill="#afafb0"/>
<path d="M465.0,253.9 L458.6,250.2 L458.6,242.8 L465.0,239.1 L471.4,242.8 L471.4,250.2 Z" fill="#b9b9ba"/>
<path d="M477.5,253.9 L471.1,250.2 L471.1,242.8 L477.5,239.1 L483.9,242.8 L483.9,250.2 Z" fill="#b8b8b9"/>
<path d="M490.0,253.9 L483.6,250.2 L483.6,242.8 L490.0,239.1 L496.4,242.8 L496.4,250.2 Z" fill="#bfbfc0"/>
<path d="M502.5,253.9 L496.1,250.2 L496.1,242.8 L502.5,239.1 L508.9,242.8 L508.9,250.2 Z" fill="#bfbfc0"/>
<path d="M515.0,253.9 L508.6,250.2 L508.6,242.8 L515.0,239.1 L521.4,242.8 L521.4,250.2 Z" fill="#c0c0c1"/>
<path d="M527.5,253.9 L521.1,250.2 L521.1,242.8 L527.5,239.1 L533.9,242.8 L533.9,250.2 Z" fill="#c0c0c1"/>
<path d="M540.0,253.9 L533.6,250.2 L533.6,242.8 L540.0,239.1 L546.4,242.8 L546.4,250.2 Z" fill="#c1c1c2"/>
<path d="M552.5,253.9 L546.1,250.2 L546.1,242.8 L552.5,239.1 L558.9,242.8 L558.9,250.2 Z" fill="#bdbdbe"/>
<path d="M565.0,253.9 L558.6,250.2 L558.6,242.8 L565.0,239.1 L571.4,242.8 L571.4,250.2 Z" fill="#b2b2b3"/>
<path d="M577.5,253.9 L571.1,250.2 L571.1,242.8 L577.5,239.1 L583.9,242.8 L583.9,250.2 Z" fill="#99999a"/>
<path d="M590.0,253.9 L583.6,250.2 L583.6,242.8 L590.0,239.1 L596.4,242.8 L596.4,250.2 Z" fill="#858586"/>
<path d="M602.5,253.9 L596.1,250.2 L596.1,242.8 L602.5,239.1 L608.9,242.8 L608.9,250.2 Z" fill="#69696a"/>
<path d="M615.0,253.9 L608.6,250.2 L608.6,242.8 L615.0,239.1 L621.4,242.8 L621.4,250.2 Z" fill="#3f3f40"/>
<path d="M627.5,253.9 L621.1,250.2 L621.1,242.8 L627.5,239.1 L633.9,242.8 L633.9,250.2 Z" fill="#828283"/>
<path d="M640.0,253.9 L633.6,250.2 L633.6,242.8 L640.0,239.1 L646.4,242.8 L646.4,250.2 Z" fill="#818182"/>
<path d="M652.5,253.9 L646.1,250.2 L646.1,242.8 L652.5,239.1 L658.9,242.8 L658.9,250.2 Z" fill="#7b7b7c"/>
<path d="M665.0,253.9 L658.6,250.2 L658.6,242.8 L665.0,239.1 L671.4,242.8 L671.4,250.2 Z" fill="#6b6b6c"/>
<path d="M677.5,253.9 L671.1,250.2 L671.1,242.8 L677.5,239.1 L683.9,242.8 L683.9,250.2 Z" fill="#636364"/>
<path d="M296.2,264.7 L289.9,261.0 L289.9,253.6 L296.2,250.0 L302.6,253.6 L302.6,261.0 Z" fill="#b7b7b8"/>
<path d="M308.8,264.7 L302.4,261.0 L302.4,253.6 L308.8,250.0 L315.1,253.6 L315.1,261.0 Z" fill="#b7b7b8"/>
<path d="M321.2,264.7 L314.9,261.0 L314.9,253.6 L321.2,250.0 L327.6,253.6 L327.6,261.0 Z" fill="#b6b6b7"/>
<path d="M333.8,264.7 L327.4,261.0 L327.4,253.6 L333.8,250.0 L340.1,253.6 L340.1,261.0 Z" fill="#c3c3c4"/>
<path d="M346.2,264.7 L339.9,261.0 L339.9,253.6 L346.2,250.0 L352.6,253.6 L352.6,261.0 Z" fill="#bfbfc0"/>
<path d="M358.8,264.7 L352.4,261.0 L352.4,253.6 L358.8,250.0 L365.1,253.6 L365.1,261.0 Z" fill="#bebebf"/>
<path d="M371.2,264.7 L364.9,261.0 L364.9,253.6 L371.2,250.0 L377.6,253.6 L377.6,261.0 Z" fill="#c1c1c2"/>
<path d="M383.8,264.7 L377.4,261.0 L377.4,253.6 L383.8,250.0 L390.1,253.6 L390.1,261.0 Z" fill="#bebebf"/>
<path d="M396.2,264.7 L389.9,261.0 L389.9,253.6 L396.2,250.0 L402.6,253.6 L402.6,261.0 Z" fill="#c4c4c5"/>
<path d="M408.8,264.7 L402.4,261.0 L402.4,253.6 L408.8,250.0 L415.1,253.6 L415.1,261.0 Z" fill="#c4c4c5"/>
<path d="M421.2,264.7 L414.9,261.0 L414.9,253.6 L421.2,250.0 L427.6,253.6 L427.6,261.0 Z" fill="#c2c2c3"/>
<path d="M433.8,264.7 L427.4,261.0 L427.4,253.6 L433.8,250.0 L440.1,253.6 L440.1,261.0 Z" fill="#bdbdbe"/>
<path d="M446.2,264.7 L439.9,261.0 L439.9,253.6 L446.2,250.0 L452.6,253.6 L452.6,261.0 Z" fill="#bfbfc0"/>
<path d="M458.8,264.7 L452.4,261.0 L452.4,253.6 L458.8,250.0 L465.1,253.6 L465.1,261.0 Z" fill="#bbbbbc"/>
<path d="M471.2,264.7 L464.9,261.0 L464.9,253.6 L471.2,250.0 L477.6,253.6 L477.6,261.0 Z" fill="#c1c1c2"/>
<path d="M483.8,264.7 L477.4,261.0 L477.4,253.6 L483.8,250.0 L490.1,253.6 L490.1,261.0 Z" fill="#c1c1c2"/>
<path d="M496.2,264.7 L489.9,261.0 L489.9,253.6 L496.2,250.0 L502.6,253.6 L502.6,261.0 Z" fill="#c6c6c7"/>
<path d="M508.8,264.7 L502.4,261.0 L502.4,253.6 L508.8,250.0 L515.1,253.6 L515.1,261.0 Z" fill="#c1c1c2"/>
<path d="M521.2,264.7 L514.9,261.0 L514.9,253.6 L521.2,250.0 L527.6,253.6 L527.6,261.0 Z" fill="#c0c0c1"/>
<path d="M533.8,264.7 L527.4,261.0 L527.4,253.6 L533.8,250.0 L540.1,253.6 L540.1,261.0 Z" fill="#c0c0c1"/>
<path d="M546.2,264.7 L539.9,261.0 L539.9,253.6 L546.2,250.0 L552.6,253.6 L552.6,261.0 Z" fill="#c5c5c6"/>
<path d="M558.8,264.7 L552.4,261.0 L552.4,253.6 L558.8,250.0 L565.1,253.6 L565.1,261.0 Z" fill="#c1c1c2"/>
<path d="M571.2,264.7 L564.9,261.0 L564.9,253.6 L571.2,250.0 L577.6,253.6 L577.6,261.0 Z" fill="#aeaeaf"/>
<path d="M583.8,264.7 L577.4,261.0 L577.4,253.6 L583.8,250.0 L590.1,253.6 L590.1,261.0 Z" fill="#919192"/>
<path d="M596.2,264.7 L589.9,261.0 L589.9,253.6 L596.2,250.0 L602.6,253.6 L602.6,261.0 Z" fill="#7f7f80"/>
<path d="M608.8,264.7 L602.4,261.0 L602.4,253.6 L608.8,250.0 L615.1,253.6 L615.1,261.0 Z" fill="#464647"/>
<path d="M621.2,264.7 L614.9,261.0 L614.9,253.6 L621.2,250.0 L627.6,253.6 L627.6,261.0 Z" fill="#686869"/>
<path d="M633.8,264.7 L627.4,261.0 L627.4,253.6 L633.8,250.0 L640.1,253.6 L640.1,261.0 Z" fill="#818182"/>
<path d="M646.2,264.7 L639.9,261.0 L639.9,253.6 L646.2,250.0 L652.6,253.6 L652.6,261.0 Z" fill="#7b7b7c"/>
<path d="M658.8,264.7 L652.4,261.0 L652.4,253.6 L658.8,250.0 L665.1,253.6 L665.1,261.0 Z" fill="#686869"/>
<path d="M671.2,264.7 L664.9,261.0 L664.9,253.6 L671.2,250.0 L677.6,253.6 L677.6,261.0 Z" fill="#646465"/>
<path d="M290.0,275.5 L283.6,271.8 L283.6,264.5 L290.0,260.8 L296.4,264.5 L296.4,271.8 Z" fill="#b3b3b4"/>
<path d="M302.5,275.5 L296.1,271.8 L296.1,264.5 L302.5,260.8 L308.9,264.5 L308.9,271.8 Z" fill="#b1b1b2"/>
<path d="M315.0,275.5 L308.6,271.8 L308.6,264.5 L315.0,260.8 L321.4,264.5 L321.4,271.8 Z" fill="#b7b7b8"/>
<path d="M327.5,275.5 L321.1,271.8 L321.1,264.5 L327.5,260.8 L333.9,264.5 L333.9,271.8 Z" fill="#bdbdbe"/>
<path d="M340.0,275.5 L333.6,271.8 L333.6,264.5 L340.0,260.8 L346.4,264.5 L346.4,271.8 Z" fill="#bbbbbc"/>
<path d="M352.5,275.5 L346.1,271.8 L346.1,264.5 L352.5,260.8 L358.9,264.5 L358.9,271.8 Z" fill="#c3c3c4"/>
<path d="M365.0,275.5 L358.6,271.8 L358.6,264.5 L365.0,260.8 L371.4,264.5 L371.4,271.8 Z" fill="#bfbfc0"/>
<path d="M377.5,275.5 L371.1,271.8 L371.1,264.5 L377.5,260.8 L383.9,264.5 L383.9,271.8 Z" fill="#c2c2c3"/>
<path d="M390.0,275.5 L383.6,271.8 L383.6,264.5 L390.0,260.8 L396.4,264.5 L396.4,271.8 Z" fill="#c3c3c4"/>
<path d="M402.5,275.5 L396.1,271.8 L396.1,264.5 L402.5,260.8 L408.9,264.5 L408.9,271.8 Z" fill="#c6c6c7"/>
<path d="M415.0,275.5 L408.6,271.8 L408.6,264.5 L415.0,260.8 L421.4,264.5 L421.4,271.8 Z" fill="#c0c0c1"/>
<path d="M427.5,275.5 L421.1,271.8 L421.1,264.5 L427.5,260.8 L433.9,264.5 L433.9,271.8 Z" fill="#c1c1c2"/>
<path d="M440.0,275.5 L433.6,271.8 L433.6,264.5 L440.0,260.8 L446.4,264.5 L446.4,271.8 Z" fill="#bfbfc0"/>
<path d="M452.5,275.5 L446.1,271.8 L446.1,264.5 L452.5,260.8 L458.9,264.5 L458.9,271.8 Z" fill="#c0c0c1"/>
<path d="M465.0,275.5 L458.6,271.8 L458.6,264.5 L465.0,260.8 L471.4,264.5 L471.4,271.8 Z" fill="#bababb"/>
<path d="M477.5,275.5 L471.1,271.8 L471.1,264.5 L477.5,260.8 L483.9,264.5 L483.9,271.8 Z" fill="#bebebf"/>
<path d="M490.0,275.5 L483.6,271.8 L483.6,264.5 L490.0,260.8 L496.4,264.5 L496.4,271.8 Z" fill="#c5c5c6"/>
<path d="M502.5,275.5 L496.1,271.8 L496.1,264.5 L502.5,260.8 L508.9,264.5 L508.9,271.8 Z" fill="#bfbfc0"/>
<path d="M515.0,275.5 L508.6,271.8 L508.6,264.5 L515.0,260.8 L521.4,264.5 L521.4,271.8 Z" fill="#c1c1c2"/>
<path d="M527.5,275.5 L521.1,271.8 L521.1,264.5 L527.5,260.8 L533.9,264.5 L533.9,271.8 Z" fill="#c1c1c2"/>
<path d="M540.0,275.5 L533.6,271.8 L533.6,264.5 L540.0,260.8 L546.4,264.5 L546.4,271.8 Z" fill="#c3c3c4"/>
<path d="M552.5,275.5 L546.1,271.8 L546.1,264.5 L552.5,260.8 L558.9,264.5 L558.9,271.8 Z" fill="#c3c3c4"/>
<path d="M565.0,275.5 L558.6,271.8 L558.6,264.5 L565.0,260.8 L571.4,264.5 L571.4,271.8 Z" fill="#b3b3b4"/>
<path d="M577.5,275.5 L571.1,271.8 L571.1,264.5 L577.5,260.8 L583.9,264.5 L583.9,271.8 Z" fill="#9f9fa0"/>
<path d="M590.0,275.5 L583.6,271.8 L583.6,264.5 L590.0,260.8 L596.4,264.5 L596.4,271.8 Z" fill="#888889"/>
<path d="M602.5,275.5 L596.1,271.8 L596.1,264.5 L602.5,260.8 L608.9,264.5 L608.9,271.8 Z" fill="#626263"/>
<path d="M615.0,275.5 L608.6,271.8 L608.6,264.5 L615.0,260.8 L621.4,264.5 L621.4,271.8 Z" fill="#49494a"/>
<path d="M627.5,275.5 L621.1,271.8 L621.1,264.5 L627.5,260.8 L633.9,264.5 L633.9,271.8 Z" fill="#8e8e8f"/>
<path d="M640.0,275.5 L633.6,271.8 L633.6,264.5 L640.0,260.8 L646.4,264.5 L646.4,271.8 Z" fill="#838384"/>
<path d="M652.5,275.5 L646.1,271.8 L646.1,264.5 L652.5,260.8 L658.9,264.5 L658.9,271.8 Z" fill="#6f6f70"/>
<path d="M665.0,275.5 L658.6,271.8 L658.6,264.5 L665.0,260.8 L671.4,264.5 L671.4,271.8 Z" fill="#666667"/>
<path d="M296.2,286.3 L289.9,282.7 L289.9,275.3 L296.2,271.6 L302.6,275.3 L302.6,282.7 Z" fill="#b4b4b5"/>
<path d="M308.8,286.3 L302.4,282.7 L302.4,275.3 L308.8,271.6 L315.1,275.3 L315.1,282.7 Z" fill="#afafb0"/>
<path d="M321.2,286.3 L314.9,282.7 L314.9,275.3 L321.2,271.6 L327.6,275.3 L327.6,282.7 Z" fill="#afafb0"/>
<path d="M333.8,286.3 L327.4,282.7 L327.4,275.3 L333.8,271.6 L340.1,275.3 L340.1,282.7 Z" fill="#b1b1b2"/>
<path d="M346.2,286.3 L339.9,282.7 L339.9,275.3 L346.2,271.6 L352.6,275.3 L352.6,282.7 Z" fill="#b8b8b9"/>
<path d="M358.8,286.3 L352.4,282.7 L352.4,275.3 L358.8,271.6 L365.1,275.3 L365.1,282.7 Z" fill="#b8b8b9"/>
<path d="M371.2,286.3 L364.9,282.7 L364.9,275.3 L371.2,271.6 L377.6,275.3 L377.6,282.7 Z" fill="#b9b9ba"/>
<path d="M383.8,286.3 L377.4,282.7 L377.4,275.3 L383.8,271.6 L390.1,275.3 L390.1,282.7 Z" fill="#b7b7b8"/>
<path d="M396.2,286.3 L389.9,282.7 L389.9,275.3 L396.2,271.6 L402.6,275.3 L402.6,282.7 Z" fill="#b8b8b9"/>
<path d="M408.8,286.3 L402.4,282.7 L402.4,275.3 L408.8,271.6 L415.1,275.3 L415.1,282.7 Z" fill="#b6b6b7"/>
<path d="M421.2,286.3 L414.9,282.7 L414.9,275.3 L421.2,271.6 L427.6,275.3 L427.6,282.7 Z" fill="#bbbbbc"/>
<path d="M433.8,286.3 L427.4,282.7 L427.4,275.3 L433.8,271.6 L440.1,275.3 L440.1,282.7 Z" fill="#b4b4b5"/>
<path d="M446.2,286.3 L439.9,282.7 L439.9,275.3 L446.2,271.6 L452.6,275.3 L452.6,282.7 Z" fill="#b6b6b7"/>
<path d="M458.8,286.3 L452.4,282.7 L452.4,275.3 L458.8,271.6 L465.1,275.3 L465.1,282.7 Z" fill="#b8b8b9"/>
<path d="M471.2,286.3 L464.9,282.7 L464.9,275.3 L471.2,271.6 L477.6,275.3 L477.6,282.7 Z" fill="#bbbbbc"/>
<path d="M483.8,286.3 L477.4,282.7 L477.4,275.3 L483.8,271.6 L490.1,275.3 L490.1,282.7 Z" fill="#bababb"/>
<path d="M496.2,286.3 L489.9,282.7 L489.9,275.3 L496.2,271.6 L502.6,275.3 L502.6,282.7 Z" fill="#bdbdbe"/>
<path d="M508.8,286.3 L502.4,282.7 L502.4,275.3 L508.8,271.6 L515.1,275.3 L515.1,282.7 Z" fill="#c3c3c4"/>
<path d="M521.2,286.3 L514.9,282.7 L514.9,275.3 L521.2,271.6 L527.6,275.3 L527.6,282.7 Z" fill="#c2c2c3"/>
<path d="M533.8,286.3 L527.4,282.7 L527.4,275.3 L533.8,271.6 L540.1,275.3 L540.1,282.7 Z" fill="#c1c1c2"/>
<path d="M546.2,286.3 L539.9,282.7 L539.9,275.3 L546.2,271.6 L552.6,275.3 L552.6,282.7 Z" fill="#b9b9ba"/>
<path d="M558.8,286.3 L552.4,282.7 L552.4,275.3 L558.8,271.6 L565.1,275.3 L565.1,282.7 Z" fill="#acacad"/>
<path d="M571.2,286.3 L564.9,282.7 L564.9,275.3 L571.2,271.6 L577.6,275.3 L577.6,282.7 Z" fill="#a1a1a2"/>
<path d="M583.8,286.3 L577.4,282.7 L577.4,275.3 L583.8,271.6 L590.1,275.3 L590.1,282.7 Z" fill="#89898a"/>
<path d="M596.2,286.3 L589.9,282.7 L589.9,275.3 L596.2,271.6 L602.6,275.3 L602.6,282.7 Z" fill="#6b6b6c"/>
<path d="M608.8,286.3 L602.4,282.7 L602.4,275.3 L608.8,271.6 L615.1,275.3 L615.1,282.7 Z" fill="#3c3c3d"/>
<path d="M621.2,286.3 L614.9,282.7 L614.9,275.3 L621.2,271.6 L627.6,275.3 L627.6,282.7 Z" fill="#7a7a7b"/>
<path d="M633.8,286.3 L627.4,282.7 L627.4,275.3 L633.8,271.6 L640.1,275.3 L640.1,282.7 Z" fill="#8d8d8e"/>
<path d="M646.2,286.3 L639.9,282.7 L639.9,275.3 L646.2,271.6 L652.6,275.3 L652.6,282.7 Z" fill="#79797a"/>
<path d="M658.8,286.3 L652.4,282.7 L652.4,275.3 L658.8,271.6 L665.1,275.3 L665.1,282.7 Z" fill="#666667"/>
<path d="M302.5,297.2 L296.1,293.5 L296.1,286.1 L302.5,282.4 L308.9,286.1 L308.9,293.5 Z" fill="#ababac"/>
<path d="M315.0,297.2 L308.6,293.5 L308.6,286.1 L315.0,282.4 L321.4,286.1 L321.4,293.5 Z" fill="#a6a6a7"/>
<path d="M327.5,297.2 L321.1,293.5 L321.1,286.1 L327.5,282.4 L333.9,286.1 L333.9,293.5 Z" fill="#a8a8a9"/>
<path d="M340.0,297.2 L333.6,293.5 L333.6,286.1 L340.0,282.4 L346.4,286.1 L346.4,293.5 Z" fill="#afafb0"/>
<path d="M352.5,297.2 L346.1,293.5 L346.1,286.1 L352.5,282.4 L358.9,286.1 L358.9,293.5 Z" fill="#acacad"/>
<path d="M365.0,297.2 L358.6,293.5 L358.6,286.1 L365.0,282.4 L371.4,286.1 L371.4,293.5 Z" fill="#acacad"/>
<path d="M377.5,297.2 L371.1,293.5 L371.1,286.1 L377.5,282.4 L383.9,286.1 L383.9,293.5 Z" fill="#aeaeaf"/>
<path d="M390.0,297.2 L383.6,293.5 L383.6,286.1 L390.0,282.4 L396.4,286.1 L396.4,293.5 Z" fill="#b1b1b2"/>
<path d="M402.5,297.2 L396.1,293.5 L396.1,286.1 L402.5,282.4 L408.9,286.1 L408.9,293.5 Z" fill="#b0b0b1"/>
<path d="M415.0,297.2 L408.6,293.5 L408.6,286.1 L415.0,282.4 L421.4,286.1 L421.4,293.5 Z" fill="#ababac"/>
<path d="M427.5,297.2 L421.1,293.5 L421.1,286.1 L427.5,282.4 L433.9,286.1 L433.9,293.5 Z" fill="#adadae"/>
<path d="M440.0,297.2 L433.6,293.5 L433.6,286.1 L440.0,282.4 L446.4,286.1 L446.4,293.5 Z" fill="#b3b3b4"/>
<path d="M452.5,297.2 L446.1,293.5 L446.1,286.1 L452.5,282.4 L458.9,286.1 L458.9,293.5 Z" fill="#aeaeaf"/>
<path d="M465.0,297.2 L458.6,293.5 L458.6,286.1 L465.0,282.4 L471.4,286.1 L471.4,293.5 Z" fill="#b3b3b4"/>
<path d="M477.5,297.2 L471.1,293.5 L471.1,286.1 L477.5,282.4 L483.9,286.1 L483.9,293.5 Z" fill="#b6b6b7"/>
<path d="M490.0,297.2 L483.6,293.5 L483.6,286.1 L490.0,282.4 L496.4,286.1 L496.4,293.5 Z" fill="#bababb"/>
<path d="M502.5,297.2 L496.1,293.5 L496.1,286.1 L502.5,282.4 L508.9,286.1 L508.9,293.5 Z" fill="#b9b9ba"/>
<path d="M515.0,297.2 L508.6,293.5 L508.6,286.1 L515.0,282.4 L521.4,286.1 L521.4,293.5 Z" fill="#b9b9ba"/>
<path d="M527.5,297.2 L521.1,293.5 L521.1,286.1 L527.5,282.4 L533.9,286.1 L533.9,293.5 Z" fill="#b4b4b5"/>
<path d="M540.0,297.2 L533.6,293.5 L533.6,286.1 L540.0,282.4 L546.4,286.1 L546.4,293.5 Z" fill="#a8a8a9"/>
<path d="M552.5,297.2 L546.1,293.5 L546.1,286.1 L552.5,282.4 L558.9,286.1 L558.9,293.5 Z" fill="#9d9d9e"/>
<path d="M565.0,297.2 L558.6,293.5 L558.6,286.1 L565.0,282.4 L571.4,286.1 L571.4,293.5 Z" fill="#949495"/>
<path d="M577.5,297.2 L571.1,293.5 L571.1,286.1 L577.5,282.4 L583.9,286.1 L583.9,293.5 Z" fill="#89898a"/>
<path d="M590.0,297.2 L583.6,293.5 L583.6,286.1 L590.0,282.4 L596.4,286.1 L596.4,293.5 Z" fill="#6b6b6c"/>
<path d="M602.5,297.2 L596.1,293.5 L596.1,286.1 L602.5,282.4 L608.9,286.1 L608.9,293.5 Z" fill="#3d3d3e"/>
<path d="M615.0,297.2 L608.6,293.5 L608.6,286.1 L615.0,282.4 L621.4,286.1 L621.4,293.5 Z" fill="#727273"/>
<path d="M627.5,297.2 L621.1,293.5 L621.1,286.1 L627.5,282.4 L633.9,286.1 L633.9,293.5 Z" fill="#929293"/>
<path d="M640.0,297.2 L633.6,293.5 L633.6,286.1 L640.0,282.4 L646.4,286.1 L646.4,293.5 Z" fill="#868687"/>
<path d="M652.5,297.2 L646.1,293.5 L646.1,286.1 L652.5,282.4 L658.9,286.1 L658.9,293.5 Z" fill="#676768"/>
<path d="M296.2,308.0 L289.9,304.3 L289.9,296.9 L296.2,293.3 L302.6,296.9 L302.6,304.3 Z" fill="#a9a9aa"/>
<path d="M308.8,308.0 L302.4,304.3 L302.4,296.9 L308.8,293.3 L315.1,296.9 L315.1,304.3 Z" fill="#a5a5a6"/>
<path d="M321.2,308.0 L314.9,304.3 L314.9,296.9 L321.2,293.3 L327.6,296.9 L327.6,304.3 Z" fill="#aaaaab"/>
<path d="M333.8,308.0 L327.4,304.3 L327.4,296.9 L333.8,293.3 L340.1,296.9 L340.1,304.3 Z" fill="#a9a9aa"/>
<path d="M346.2,308.0 L339.9,304.3 L339.9,296.9 L346.2,293.3 L352.6,296.9 L352.6,304.3 Z" fill="#aaaaab"/>
<path d="M358.8,308.0 L352.4,304.3 L352.4,296.9 L358.8,293.3 L365.1,296.9 L365.1,304.3 Z" fill="#ababac"/>
<path d="M371.2,308.0 L364.9,304.3 L364.9,296.9 L371.2,293.3 L377.6,296.9 L377.6,304.3 Z" fill="#adadae"/>
<path d="M383.8,308.0 L377.4,304.3 L377.4,296.9 L383.8,293.3 L390.1,296.9 L390.1,304.3 Z" fill="#a8a8a9"/>
<path d="M396.2,308.0 L389.9,304.3 L389.9,296.9 L396.2,293.3 L402.6,296.9 L402.6,304.3 Z" fill="#aaaaab"/>
<path d="M408.8,308.0 L402.4,304.3 L402.4,296.9 L408.8,293.3 L415.1,296.9 L415.1,304.3 Z" fill="#a7a7a8"/>
<path d="M421.2,308.0 L414.9,304.3 L414.9,296.9 L421.2,293.3 L427.6,296.9 L427.6,304.3 Z" fill="#a4a4a5"/>
<path d="M433.8,308.0 L427.4,304.3 L427.4,296.9 L433.8,293.3 L440.1,296.9 L440.1,304.3 Z" fill="#ababac"/>
<path d="M446.2,308.0 L439.9,304.3 L439.9,296.9 L446.2,293.3 L452.6,296.9 L452.6,304.3 Z" fill="#aaaaab"/>
<path d="M458.8,308.0 L452.4,304.3 L452.4,296.9 L458.8,293.3 L465.1,296.9 L465.1,304.3 Z" fill="#adadae"/>
<path d="M471.2,308.0 L464.9,304.3 L464.9,296.9 L471.2,293.3 L477.6,296.9 L477.6,304.3 Z" fill="#adadae"/>
<path d="M483.8,308.0 L477.4,304.3 L477.4,296.9 L483.8,293.3 L490.1,296.9 L490.1,304.3 Z" fill="#b3b3b4"/>
<path d="M496.2,308.0 L489.9,304.3 L489.9,296.9 L496.2,293.3 L502.6,296.9 L502.6,304.3 Z" fill="#b2b2b3"/>
<path d="M508.8,308.0 L502.4,304.3 L502.4,296.9 L508.8,293.3 L515.1,296.9 L515.1,304.3 Z" fill="#b1b1b2"/>
<path d="M521.2,308.0 L514.9,304.3 L514.9,296.9 L521.2,293.3 L527.6,296.9 L527.6,304.3 Z" fill="#a9a9aa"/>
<path d="M533.8,308.0 L527.4,304.3 L527.4,296.9 L533.8,293.3 L540.1,296.9 L540.1,304.3 Z" fill="#a5a5a6"/>
<path d="M546.2,308.0 L539.9,304.3 L539.9,296.9 L546.2,293.3 L552.6,296.9 L552.6,304.3 Z" fill="#9a9a9b"/>
<path d="M558.8,308.0 L552.4,304.3 L552.4,296.9 L558.8,293.3 L565.1,296.9 L565.1,304.3 Z" fill="#8f8f90"/>
<path d="M571.2,308.0 L564.9,304.3 L564.9,296.9 L571.2,293.3 L577.6,296.9 L577.6,304.3 Z" fill="#888889"/>
<path d="M583.8,308.0 L577.4,304.3 L577.4,296.9 L583.8,293.3 L590.1,296.9 L590.1,304.3 Z" fill="#6d6d6e"/>
<path d="M596.2,308.0 L589.9,304.3 L589.9,296.9 L596.2,293.3 L602.6,296.9 L602.6,304.3 Z" fill="#414142"/>
<path d="M608.8,308.0 L602.4,304.3 L602.4,296.9 L608.8,293.3 L615.1,296.9 L615.1,304.3 Z" fill="#676768"/>
<path d="M621.2,308.0 L614.9,304.3 L614.9,296.9 L621.2,293.3 L627.6,296.9 L627.6,304.3 Z" fill="#949495"/>
<path d="M633.8,308.0 L627.4,304.3 L627.4,296.9 L633.8,293.3 L640.1,296.9 L640.1,304.3 Z" fill="#8c8c8d"/>
<path d="M646.2,308.0 L639.9,304.3 L639.9,296.9 L646.2,293.3 L652.6,296.9 L652.6,304.3 Z" fill="#6a6a6b"/>
<path d="M658.8,308.0 L652.4,304.3 L652.4,296.9 L658.8,293.3 L665.1,296.9 L665.1,304.3 Z" fill="#6e6e6f"/>
<path d="M302.5,318.8 L296.1,315.1 L296.1,307.8 L302.5,304.1 L308.9,307.8 L308.9,315.1 Z" fill="#a6a6a7"/>
<path d="M315.0,318.8 L308.6,315.1 L308.6,307.8 L315.0,304.1 L321.4,307.8 L321.4,315.1 Z" fill="#a5a5a6"/>
<path d="M327.5,318.8 L321.1,315.1 L321.1,307.8 L327.5,304.1 L333.9,307.8 L333.9,315.1 Z" fill="#a0a0a1"/>
<path d="M340.0,318.8 L333.6,315.1 L333.6,307.8 L340.0,304.1 L346.4,307.8 L346.4,315.1 Z" fill="#a0a0a1"/>
<path d="M352.5,318.8 L346.1,315.1 L346.1,307.8 L352.5,304.1 L358.9,307.8 L358.9,315.1 Z" fill="#9f9fa0"/>
<path d="M365.0,318.8 L358.6,315.1 L358.6,307.8 L365.0,304.1 L371.4,307.8 L371.4,315.1 Z" fill="#a3a3a4"/>
<path d="M377.5,318.8 L371.1,315.1 L371.1,307.8 L377.5,304.1 L383.9,307.8 L383.9,315.1 Z" fill="#a0a0a1"/>
<path d="M390.0,318.8 L383.6,315.1 L383.6,307.8 L390.0,304.1 L396.4,307.8 L396.4,315.1 Z" fill="#a0a0a1"/>
<path d="M402.5,318.8 L396.1,315.1 L396.1,307.8 L402.5,304.1 L408.9,307.8 L408.9,315.1 Z" fill="#9e9e9f"/>
<path d="M415.0,318.8 L408.6,315.1 L408.6,307.8 L415.0,304.1 L421.4,307.8 L421.4,315.1 Z" fill="#99999a"/>
<path d="M427.5,318.8 L421.1,315.1 L421.1,307.8 L427.5,304.1 L433.9,307.8 L433.9,315.1 Z" fill="#9c9c9d"/>
<path d="M440.0,318.8 L433.6,315.1 L433.6,307.8 L440.0,304.1 L446.4,307.8 L446.4,315.1 Z" fill="#9b9b9c"/>
<path d="M452.5,318.8 L446.1,315.1 L446.1,307.8 L452.5,304.1 L458.9,307.8 L458.9,315.1 Z" fill="#9b9b9c"/>
<path d="M465.0,318.8 L458.6,315.1 L458.6,307.8 L465.0,304.1 L471.4,307.8 L471.4,315.1 Z" fill="#a4a4a5"/>
<path d="M477.5,318.8 L471.1,315.1 L471.1,307.8 L477.5,304.1 L483.9,307.8 L483.9,315.1 Z" fill="#aaaaab"/>
<path d="M490.0,318.8 L483.6,315.1 L483.6,307.8 L490.0,304.1 L496.4,307.8 L496.4,315.1 Z" fill="#acacad"/>
<path d="M502.5,318.8 L496.1,315.1 L496.1,307.8 L502.5,304.1 L508.9,307.8 L508.9,315.1 Z" fill="#a6a6a7"/>
<path d="M515.0,318.8 L508.6,315.1 L508.6,307.8 L515.0,304.1 L521.4,307.8 L521.4,315.1 Z" fill="#a4a4a5"/>
<path d="M527.5,318.8 L521.1,315.1 L521.1,307.8 L527.5,304.1 L533.9,307.8 L533.9,315.1 Z" fill="#9d9d9e"/>
<path d="M540.0,318.8 L533.6,315.1 L533.6,307.8 L540.0,304.1 L546.4,307.8 L546.4,315.1 Z" fill="#99999a"/>
<path d="M552.5,318.8 L546.1,315.1 L546.1,307.8 L552.5,304.1 L558.9,307.8 L558.9,315.1 Z" fill="#8d8d8e"/>
<path d="M565.0,318.8 L558.6,315.1 L558.6,307.8 L565.0,304.1 L571.4,307.8 L571.4,315.1 Z" fill="#7d7d7e"/>
<path d="M577.5,318.8 L571.1,315.1 L571.1,307.8 L577.5,304.1 L583.9,307.8 L583.9,315.1 Z" fill="#656566"/>
<path d="M590.0,318.8 L583.6,315.1 L583.6,307.8 L590.0,304.1 L596.4,307.8 L596.4,315.1 Z" fill="#3b3b3c"/>
<path d="M602.5,318.8 L596.1,315.1 L596.1,307.8 L602.5,304.1 L608.9,307.8 L608.9,315.1 Z" fill="#5c5c5d"/>
<path d="M615.0,318.8 L608.6,315.1 L608.6,307.8 L615.0,304.1 L621.4,307.8 L621.4,315.1 Z" fill="#8f8f90"/>
<path d="M627.5,318.8 L621.1,315.1 L621.1,307.8 L627.5,304.1 L633.9,307.8 L633.9,315.1 Z" fill="#89898a"/>
<path d="M640.0,318.8 L633.6,315.1 L633.6,307.8 L640.0,304.1 L646.4,307.8 L646.4,315.1 Z" fill="#717172"/>
<path d="M652.5,318.8 L646.1,315.1 L646.1,307.8 L652.5,304.1 L658.9,307.8 L658.9,315.1 Z" fill="#69696a"/>
<path d="M308.8,329.6 L302.4,326.0 L302.4,318.6 L308.8,314.9 L315.1,318.6 L315.1,326.0 Z" fill="#a0a0a1"/>
<path d="M321.2,329.6 L314.9,326.0 L314.9,318.6 L321.2,314.9 L327.6,318.6 L327.6,326.0 Z" fill="#a2a2a3"/>
<path d="M333.8,329.6 L327.4,326.0 L327.4,318.6 L333.8,314.9 L340.1,318.6 L340.1,326.0 Z" fill="#9a9a9b"/>
<path d="M346.2,329.6 L339.9,326.0 L339.9,318.6 L346.2,314.9 L352.6,318.6 L352.6,326.0 Z" fill="#989899"/>
<path d="M358.8,329.6 L352.4,326.0 L352.4,318.6 L358.8,314.9 L365.1,318.6 L365.1,326.0 Z" fill="#949495"/>
<path d="M371.2,329.6 L364.9,326.0 L364.9,318.6 L371.2,314.9 L377.6,318.6 L377.6,326.0 Z" fill="#929293"/>
<path d="M383.8,329.6 L377.4,326.0 L377.4,318.6 L383.8,314.9 L390.1,318.6 L390.1,326.0 Z" fill="#8e8e8f"/>
<path d="M396.2,329.6 L389.9,326.0 L389.9,318.6 L396.2,314.9 L402.6,318.6 L402.6,326.0 Z" fill="#878788"/>
<path d="M408.8,329.6 L402.4,326.0 L402.4,318.6 L408.8,314.9 L415.1,318.6 L415.1,326.0 Z" fill="#828283"/>
<path d="M421.2,329.6 L414.9,326.0 L414.9,318.6 L421.2,314.9 L427.6,318.6 L427.6,326.0 Z" fill="#838384"/>
<path d="M433.8,329.6 L427.4,326.0 L427.4,318.6 L433.8,314.9 L440.1,318.6 L440.1,326.0 Z" fill="#858586"/>
<path d="M446.2,329.6 L439.9,326.0 L439.9,318.6 L446.2,314.9 L452.6,318.6 L452.6,326.0 Z" fill="#848485"/>
<path d="M458.8,329.6 L452.4,326.0 L452.4,318.6 L458.8,314.9 L465.1,318.6 L465.1,326.0 Z" fill="#888889"/>
<path d="M471.2,329.6 L464.9,326.0 L464.9,318.6 L471.2,314.9 L477.6,318.6 L477.6,326.0 Z" fill="#959596"/>
<path d="M483.8,329.6 L477.4,326.0 L477.4,318.6 L483.8,314.9 L490.1,318.6 L490.1,326.0 Z" fill="#9b9b9c"/>
<path d="M496.2,329.6 L489.9,326.0 L489.9,318.6 L496.2,314.9 L502.6,318.6 L502.6,326.0 Z" fill="#9d9d9e"/>
<path d="M508.8,329.6 L502.4,326.0 L502.4,318.6 L508.8,314.9 L515.1,318.6 L515.1,326.0 Z" fill="#989899"/>
<path d="M521.2,329.6 L514.9,326.0 L514.9,318.6 L521.2,314.9 L527.6,318.6 L527.6,326.0 Z" fill="#949495"/>
<path d="M533.8,329.6 L527.4,326.0 L527.4,318.6 L533.8,314.9 L540.1,318.6 L540.1,326.0 Z" fill="#888889"/>
<path d="M546.2,329.6 L539.9,326.0 L539.9,318.6 L546.2,314.9 L552.6,318.6 L552.6,326.0 Z" fill="#79797a"/>
<path d="M558.8,329.6 L552.4,326.0 L552.4,318.6 L558.8,314.9 L565.1,318.6 L565.1,326.0 Z" fill="#69696a"/>
<path d="M571.2,329.6 L564.9,326.0 L564.9,318.6 L571.2,314.9 L577.6,318.6 L577.6,326.0 Z" fill="#4d4d4e"/>
<path d="M583.8,329.6 L577.4,326.0 L577.4,318.6 L583.8,314.9 L590.1,318.6 L590.1,326.0 Z" fill="#404041"/>
<path d="M596.2,329.6 L589.9,326.0 L589.9,318.6 L596.2,314.9 L602.6,318.6 L602.6,326.0 Z" fill="#6c6c6d"/>
<path d="M608.8,329.6 L602.4,326.0 L602.4,318.6 L608.8,314.9 L615.1,318.6 L615.1,326.0 Z" fill="#838384"/>
<path d="M621.2,329.6 L614.9,326.0 L614.9,318.6 L621.2,314.9 L627.6,318.6 L627.6,326.0 Z" fill="#838384"/>
<path d="M633.8,329.6 L627.4,326.0 L627.4,318.6 L633.8,314.9 L640.1,318.6 L640.1,326.0 Z" fill="#737374"/>
<path d="M646.2,329.6 L639.9,326.0 L639.9,318.6 L646.2,314.9 L652.6,318.6 L652.6,326.0 Z" fill="#676768"/>
<path d="M327.5,340.5 L321.1,336.8 L321.1,329.4 L327.5,325.7 L333.9,329.4 L333.9,336.8 Z" fill="#9d9d9e"/>
<path d="M340.0,340.5 L333.6,336.8 L333.6,329.4 L340.0,325.7 L346.4,329.4 L346.4,336.8 Z" fill="#989899"/>
<path d="M352.5,340.5 L346.1,336.8 L346.1,329.4 L352.5,325.7 L358.9,329.4 L358.9,336.8 Z" fill="#929293"/>
<path d="M365.0,340.5 L358.6,336.8 L358.6,329.4 L365.0,325.7 L371.4,329.4 L371.4,336.8 Z" fill="#8a8a8b"/>
<path d="M377.5,340.5 L371.1,336.8 L371.1,329.4 L377.5,325.7 L383.9,329.4 L383.9,336.8 Z" fill="#888889"/>
<path d="M390.0,340.5 L383.6,336.8 L383.6,329.4 L390.0,325.7 L396.4,329.4 L396.4,336.8 Z" fill="#808081"/>
<path d="M402.5,340.5 L396.1,336.8 L396.1,329.4 L402.5,325.7 L408.9,329.4 L408.9,336.8 Z" fill="#818182"/>
<path d="M415.0,340.5 L408.6,336.8 L408.6,329.4 L415.0,325.7 L421.4,329.4 L421.4,336.8 Z" fill="#848485"/>
<path d="M427.5,340.5 L421.1,336.8 L421.1,329.4 L427.5,325.7 L433.9,329.4 L433.9,336.8 Z" fill="#848485"/>
<path d="M440.0,340.5 L433.6,336.8 L433.6,329.4 L440.0,325.7 L446.4,329.4 L446.4,336.8 Z" fill="#818182"/>
<path d="M452.5,340.5 L446.1,336.8 L446.1,329.4 L452.5,325.7 L458.9,329.4 L458.9,336.8 Z" fill="#808081"/>
<path d="M465.0,340.5 L458.6,336.8 L458.6,329.4 L465.0,325.7 L471.4,329.4 L471.4,336.8 Z" fill="#858586"/>
<path d="M477.5,340.5 L471.1,336.8 L471.1,329.4 L477.5,325.7 L483.9,329.4 L483.9,336.8 Z" fill="#939394"/>
<path d="M490.0,340.5 L483.6,336.8 L483.6,329.4 L490.0,325.7 L496.4,329.4 L496.4,336.8 Z" fill="#939394"/>
<path d="M502.5,340.5 L496.1,336.8 L496.1,329.4 L502.5,325.7 L508.9,329.4 L508.9,336.8 Z" fill="#939394"/>
<path d="M515.0,340.5 L508.6,336.8 L508.6,329.4 L515.0,325.7 L521.4,329.4 L521.4,336.8 Z" fill="#8a8a8b"/>
<path d="M527.5,340.5 L521.1,336.8 L521.1,329.4 L527.5,325.7 L533.9,329.4 L533.9,336.8 Z" fill="#7f7f80"/>
<path d="M540.0,340.5 L533.6,336.8 L533.6,329.4 L540.0,325.7 L546.4,329.4 L546.4,336.8 Z" fill="#666667"/>
<path d="M552.5,340.5 L546.1,336.8 L546.1,329.4 L552.5,325.7 L558.9,329.4 L558.9,336.8 Z" fill="#4d4d4e"/>
<path d="M565.0,340.5 L558.6,336.8 L558.6,329.4 L565.0,325.7 L571.4,329.4 L571.4,336.8 Z" fill="#39393a"/>
<path d="M577.5,340.5 L571.1,336.8 L571.1,329.4 L577.5,325.7 L583.9,329.4 L583.9,336.8 Z" fill="#585859"/>
<path d="M590.0,340.5 L583.6,336.8 L583.6,329.4 L590.0,325.7 L596.4,329.4 L596.4,336.8 Z" fill="#717172"/>
<path d="M602.5,340.5 L596.1,336.8 L596.1,329.4 L602.5,325.7 L608.9,329.4 L608.9,336.8 Z" fill="#777778"/>
<path d="M615.0,340.5 L608.6,336.8 L608.6,329.4 L615.0,325.7 L621.4,329.4 L621.4,336.8 Z" fill="#79797a"/>
<path d="M627.5,340.5 L621.1,336.8 L621.1,329.4 L627.5,325.7 L633.9,329.4 L633.9,336.8 Z" fill="#6f6f70"/>
<path d="M640.0,340.5 L633.6,336.8 L633.6,329.4 L640.0,325.7 L646.4,329.4 L646.4,336.8 Z" fill="#646465"/>
<path d="M652.5,340.5 L646.1,336.8 L646.1,329.4 L652.5,325.7 L658.9,329.4 L658.9,336.8 Z" fill="#656566"/>
<path d="M333.8,351.3 L327.4,347.6 L327.4,340.2 L333.8,336.6 L340.1,340.2 L340.1,347.6 Z" fill="#979798"/>
<path d="M346.2,351.3 L339.9,347.6 L339.9,340.2 L346.2,336.6 L352.6,340.2 L352.6,347.6 Z" fill="#929293"/>
<path d="M358.8,351.3 L352.4,347.6 L352.4,340.2 L358.8,336.6 L365.1,340.2 L365.1,347.6 Z" fill="#8d8d8e"/>
<path d="M371.2,351.3 L364.9,347.6 L364.9,340.2 L371.2,336.6 L377.6,340.2 L377.6,347.6 Z" fill="#848485"/>
<path d="M383.8,351.3 L377.4,347.6 L377.4,340.2 L383.8,336.6 L390.1,340.2 L390.1,347.6 Z" fill="#848485"/>
<path d="M396.2,351.3 L389.9,347.6 L389.9,340.2 L396.2,336.6 L402.6,340.2 L402.6,347.6 Z" fill="#848485"/>
<path d="M408.8,351.3 L402.4,347.6 L402.4,340.2 L408.8,336.6 L415.1,340.2 L415.1,347.6 Z" fill="#868687"/>
<path d="M421.2,351.3 L414.9,347.6 L414.9,340.2 L421.2,336.6 L427.6,340.2 L427.6,347.6 Z" fill="#89898a"/>
<path d="M433.8,351.3 L427.4,347.6 L427.4,340.2 L433.8,336.6 L440.1,340.2 L440.1,347.6 Z" fill="#89898a"/>
<path d="M446.2,351.3 L439.9,347.6 L439.9,340.2 L446.2,336.6 L452.6,340.2 L452.6,347.6 Z" fill="#858586"/>
<path d="M458.8,351.3 L452.4,347.6 L452.4,340.2 L458.8,336.6 L465.1,340.2 L465.1,347.6 Z" fill="#848485"/>
<path d="M471.2,351.3 L464.9,347.6 L464.9,340.2 L471.2,336.6 L477.6,340.2 L477.6,347.6 Z" fill="#8c8c8d"/>
<path d="M483.8,351.3 L477.4,347.6 L477.4,340.2 L483.8,336.6 L490.1,340.2 L490.1,347.6 Z" fill="#919192"/>
<path d="M496.2,351.3 L489.9,347.6 L489.9,340.2 L496.2,336.6 L502.6,340.2 L502.6,347.6 Z" fill="#8d8d8e"/>
<path d="M508.8,351.3 L502.4,347.6 L502.4,340.2 L508.8,336.6 L515.1,340.2 L515.1,347.6 Z" fill="#858586"/>
<path d="M521.2,351.3 L514.9,347.6 L514.9,340.2 L521.2,336.6 L527.6,340.2 L527.6,347.6 Z" fill="#666667"/>
<path d="M533.8,351.3 L527.4,347.6 L527.4,340.2 L533.8,336.6 L540.1,340.2 L540.1,347.6 Z" fill="#464647"/>
<path d="M546.2,351.3 L539.9,347.6 L539.9,340.2 L546.2,336.6 L552.6,340.2 L552.6,347.6 Z" fill="#3c3c3d"/>
<path d="M558.8,351.3 L552.4,347.6 L552.4,340.2 L558.8,336.6 L565.1,340.2 L565.1,347.6 Z" fill="#515152"/>
<path d="M571.2,351.3 L564.9,347.6 L564.9,340.2 L571.2,336.6 L577.6,340.2 L577.6,347.6 Z" fill="#69696a"/>
<path d="M583.8,351.3 L577.4,347.6 L577.4,340.2 L583.8,336.6 L590.1,340.2 L590.1,347.6 Z" fill="#717172"/>
<path d="M596.2,351.3 L589.9,347.6 L589.9,340.2 L596.2,336.6 L602.6,340.2 L602.6,347.6 Z" fill="#727273"/>
<path d="M608.8,351.3 L602.4,347.6 L602.4,340.2 L608.8,336.6 L615.1,340.2 L615.1,347.6 Z" fill="#707071"/>
<path d="M621.2,351.3 L614.9,347.6 L614.9,340.2 L621.2,336.6 L627.6,340.2 L627.6,347.6 Z" fill="#6e6e6f"/>
<path d="M633.8,351.3 L627.4,347.6 L627.4,340.2 L633.8,336.6 L640.1,340.2 L640.1,347.6 Z" fill="#686869"/>
<path d="M646.2,351.3 L639.9,347.6 L639.9,340.2 L646.2,336.6 L652.6,340.2 L652.6,347.6 Z" fill="#69696a"/>
<path d="M352.5,362.1 L346.1,358.4 L346.1,351.1 L352.5,347.4 L358.9,351.1 L358.9,358.4 Z" fill="#8f8f90"/>
<path d="M365.0,362.1 L358.6,358.4 L358.6,351.1 L365.0,347.4 L371.4,351.1 L371.4,358.4 Z" fill="#888889"/>
<path d="M377.5,362.1 L371.1,358.4 L371.1,351.1 L377.5,347.4 L383.9,351.1 L383.9,358.4 Z" fill="#858586"/>
<path d="M390.0,362.1 L383.6,358.4 L383.6,351.1 L390.0,347.4 L396.4,351.1 L396.4,358.4 Z" fill="#828283"/>
<path d="M402.5,362.1 L396.1,358.4 L396.1,351.1 L402.5,347.4 L408.9,351.1 L408.9,358.4 Z" fill="#868687"/>
<path d="M415.0,362.1 L408.6,358.4 L408.6,351.1 L415.0,347.4 L421.4,351.1 L421.4,358.4 Z" fill="#8f8f90"/>
<path d="M427.5,362.1 L421.1,358.4 L421.1,351.1 L427.5,347.4 L433.9,351.1 L433.9,358.4 Z" fill="#959596"/>
<path d="M440.0,362.1 L433.6,358.4 L433.6,351.1 L440.0,347.4 L446.4,351.1 L446.4,358.4 Z" fill="#939394"/>
<path d="M452.5,362.1 L446.1,358.4 L446.1,351.1 L452.5,347.4 L458.9,351.1 L458.9,358.4 Z" fill="#909091"/>
<path d="M465.0,362.1 L458.6,358.4 L458.6,351.1 L465.0,347.4 L471.4,351.1 L471.4,358.4 Z" fill="#8c8c8d"/>
<path d="M477.5,362.1 L471.1,358.4 L471.1,351.1 L477.5,347.4 L483.9,351.1 L483.9,358.4 Z" fill="#8a8a8b"/>
<path d="M490.0,362.1 L483.6,358.4 L483.6,351.1 L490.0,347.4 L496.4,351.1 L496.4,358.4 Z" fill="#8b8b8c"/>
<path d="M502.5,362.1 L496.1,358.4 L496.1,351.1 L502.5,347.4 L508.9,351.1 L508.9,358.4 Z" fill="#818182"/>
<path d="M515.0,362.1 L508.6,358.4 L508.6,351.1 L515.0,347.4 L521.4,351.1 L521.4,358.4 Z" fill="#757576"/>
<path d="M527.5,362.1 L521.1,358.4 L521.1,351.1 L527.5,347.4 L533.9,351.1 L533.9,358.4 Z" fill="#545455"/>
<path d="M540.0,362.1 L533.6,358.4 L533.6,351.1 L540.0,347.4 L546.4,351.1 L546.4,358.4 Z" fill="#5f5f60"/>
<path d="M552.5,362.1 L546.1,358.4 L546.1,351.1 L552.5,347.4 L558.9,351.1 L558.9,358.4 Z" fill="#6c6c6d"/>
<path d="M565.0,362.1 L558.6,358.4 L558.6,351.1 L565.0,347.4 L571.4,351.1 L571.4,358.4 Z" fill="#717172"/>
<path d="M577.5,362.1 L571.1,358.4 L571.1,351.1 L577.5,347.4 L583.9,351.1 L583.9,358.4 Z" fill="#767677"/>
<path d="M590.0,362.1 L583.6,358.4 L583.6,351.1 L590.0,347.4 L596.4,351.1 L596.4,358.4 Z" fill="#747475"/>
<path d="M602.5,362.1 L596.1,358.4 L596.1,351.1 L602.5,347.4 L608.9,351.1 L608.9,358.4 Z" fill="#717172"/>
<path d="M615.0,362.1 L608.6,358.4 L608.6,351.1 L615.0,347.4 L621.4,351.1 L621.4,358.4 Z" fill="#686869"/>
<path d="M627.5,362.1 L621.1,358.4 L621.1,351.1 L627.5,347.4 L633.9,351.1 L633.9,358.4 Z" fill="#616162"/>
<path d="M640.0,362.1 L633.6,358.4 L633.6,351.1 L640.0,347.4 L646.4,351.1 L646.4,358.4 Z" fill="#666667"/>
<path d="M358.8,372.9 L352.4,369.3 L352.4,361.9 L358.8,358.2 L365.1,361.9 L365.1,369.3 Z" fill="#888889"/>
<path d="M371.2,372.9 L364.9,369.3 L364.9,361.9 L371.2,358.2 L377.6,361.9 L377.6,369.3 Z" fill="#858586"/>
<path d="M383.8,372.9 L377.4,369.3 L377.4,361.9 L383.8,358.2 L390.1,361.9 L390.1,369.3 Z" fill="#828283"/>
<path d="M396.2,372.9 L389.9,369.3 L389.9,361.9 L396.2,358.2 L402.6,361.9 L402.6,369.3 Z" fill="#8b8b8c"/>
<path d="M408.8,372.9 L402.4,369.3 L402.4,361.9 L408.8,358.2 L415.1,361.9 L415.1,369.3 Z" fill="#969697"/>
<path d="M421.2,372.9 L414.9,369.3 L414.9,361.9 L421.2,358.2 L427.6,361.9 L427.6,369.3 Z" fill="#959596"/>
<path d="M433.8,372.9 L427.4,369.3 L427.4,361.9 L433.8,358.2 L440.1,361.9 L440.1,369.3 Z" fill="#9b9b9c"/>
<path d="M446.2,372.9 L439.9,369.3 L439.9,361.9 L446.2,358.2 L452.6,361.9 L452.6,369.3 Z" fill="#989899"/>
<path d="M458.8,372.9 L452.4,369.3 L452.4,361.9 L458.8,358.2 L465.1,361.9 L465.1,369.3 Z" fill="#959596"/>
<path d="M471.2,372.9 L464.9,369.3 L464.9,361.9 L471.2,358.2 L477.6,361.9 L477.6,369.3 Z" fill="#919192"/>
<path d="M483.8,372.9 L477.4,369.3 L477.4,361.9 L483.8,358.2 L490.1,361.9 L490.1,369.3 Z" fill="#8a8a8b"/>
<path d="M496.2,372.9 L489.9,369.3 L489.9,361.9 L496.2,358.2 L502.6,361.9 L502.6,369.3 Z" fill="#838384"/>
<path d="M508.8,372.9 L502.4,369.3 L502.4,361.9 L508.8,358.2 L515.1,361.9 L515.1,369.3 Z" fill="#757576"/>
<path d="M521.2,372.9 L514.9,369.3 L514.9,361.9 L521.2,358.2 L527.6,361.9 L527.6,369.3 Z" fill="#767677"/>
<path d="M533.8,372.9 L527.4,369.3 L527.4,361.9 L533.8,358.2 L540.1,361.9 L540.1,369.3 Z" fill="#727273"/>
<path d="M546.2,372.9 L539.9,369.3 L539.9,361.9 L546.2,358.2 L552.6,361.9 L552.6,369.3 Z" fill="#777778"/>
<path d="M558.8,372.9 L552.4,369.3 L552.4,361.9 L558.8,358.2 L565.1,361.9 L565.1,369.3 Z" fill="#7c7c7d"/>
<path d="M571.2,372.9 L564.9,369.3 L564.9,361.9 L571.2,358.2 L577.6,361.9 L577.6,369.3 Z" fill="#777778"/>
<path d="M583.8,372.9 L577.4,369.3 L577.4,361.9 L583.8,358.2 L590.1,361.9 L590.1,369.3 Z" fill="#737374"/>
<path d="M596.2,372.9 L589.9,369.3 L589.9,361.9 L596.2,358.2 L602.6,361.9 L602.6,369.3 Z" fill="#717172"/>
<path d="M608.8,372.9 L602.4,369.3 L602.4,361.9 L608.8,358.2 L615.1,361.9 L615.1,369.3 Z" fill="#69696a"/>
<path d="M621.2,372.9 L614.9,369.3 L614.9,361.9 L621.2,358.2 L627.6,361.9 L627.6,369.3 Z" fill="#636364"/>
<path d="M633.8,372.9 L627.4,369.3 L627.4,361.9 L633.8,358.2 L640.1,361.9 L640.1,369.3 Z" fill="#646465"/>
<path d="M365.0,383.8 L358.6,380.1 L358.6,372.7 L365.0,369.0 L371.4,372.7 L371.4,380.1 Z" fill="#828283"/>
<path d="M377.5,383.8 L371.1,380.1 L371.1,372.7 L377.5,369.0 L383.9,372.7 L383.9,380.1 Z" fill="#828283"/>
<path d="M390.0,383.8 L383.6,380.1 L383.6,372.7 L390.0,369.0 L396.4,372.7 L396.4,380.1 Z" fill="#868687"/>
<path d="M402.5,383.8 L396.1,380.1 L396.1,372.7 L402.5,369.0 L408.9,372.7 L408.9,380.1 Z" fill="#969697"/>
<path d="M415.0,383.8 L408.6,380.1 L408.6,372.7 L415.0,369.0 L421.4,372.7 L421.4,380.1 Z" fill="#979798"/>
<path d="M427.5,383.8 L421.1,380.1 L421.1,372.7 L427.5,369.0 L433.9,372.7 L433.9,380.1 Z" fill="#9a9a9b"/>
<path d="M440.0,383.8 L433.6,380.1 L433.6,372.7 L440.0,369.0 L446.4,372.7 L446.4,380.1 Z" fill="#99999a"/>
<path d="M452.5,383.8 L446.1,380.1 L446.1,372.7 L452.5,369.0 L458.9,372.7 L458.9,380.1 Z" fill="#979798"/>
<path d="M465.0,383.8 L458.6,380.1 L458.6,372.7 L465.0,369.0 L471.4,372.7 L471.4,380.1 Z" fill="#949495"/>
<path d="M477.5,383.8 L471.1,380.1 L471.1,372.7 L477.5,369.0 L483.9,372.7 L483.9,380.1 Z" fill="#89898a"/>
<path d="M490.0,383.8 L483.6,380.1 L483.6,372.7 L490.0,369.0 L496.4,372.7 L496.4,380.1 Z" fill="#838384"/>
<path d="M502.5,383.8 L496.1,380.1 L496.1,372.7 L502.5,369.0 L508.9,372.7 L508.9,380.1 Z" fill="#7b7b7c"/>
<path d="M515.0,383.8 L508.6,380.1 L508.6,372.7 L515.0,369.0 L521.4,372.7 L521.4,380.1 Z" fill="#777778"/>
<path d="M527.5,383.8 L521.1,380.1 L521.1,372.7 L527.5,369.0 L533.9,372.7 L533.9,380.1 Z" fill="#757576"/>
<path d="M540.0,383.8 L533.6,380.1 L533.6,372.7 L540.0,369.0 L546.4,372.7 L546.4,380.1 Z" fill="#79797a"/>
<path d="M552.5,383.8 L546.1,380.1 L546.1,372.7 L552.5,369.0 L558.9,372.7 L558.9,380.1 Z" fill="#7c7c7d"/>
<path d="M565.0,383.8 L558.6,380.1 L558.6,372.7 L565.0,369.0 L571.4,372.7 L571.4,380.1 Z" fill="#6d6d6e"/>
<path d="M577.5,383.8 L571.1,380.1 L571.1,372.7 L577.5,369.0 L583.9,372.7 L583.9,380.1 Z" fill="#686869"/>
<path d="M590.0,383.8 L583.6,380.1 L583.6,372.7 L590.0,369.0 L596.4,372.7 L596.4,380.1 Z" fill="#666667"/>
<path d="M602.5,383.8 L596.1,380.1 L596.1,372.7 L602.5,369.0 L608.9,372.7 L608.9,380.1 Z" fill="#646465"/>
<path d="M615.0,383.8 L608.6,380.1 L608.6,372.7 L615.0,369.0 L621.4,372.7 L621.4,380.1 Z" fill="#666667"/>
<path d="M371.2,394.6 L364.9,390.9 L364.9,383.6 L371.2,379.9 L377.6,383.6 L377.6,390.9 Z" fill="#828283"/>
<path d="M383.8,394.6 L377.4,390.9 L377.4,383.6 L383.8,379.9 L390.1,383.6 L390.1,390.9 Z" fill="#868687"/>
<path d="M396.2,394.6 L389.9,390.9 L389.9,383.6 L396.2,379.9 L402.6,383.6 L402.6,390.9 Z" fill="#929293"/>
<path d="M408.8,394.6 L402.4,390.9 L402.4,383.6 L408.8,379.9 L415.1,383.6 L415.1,390.9 Z" fill="#969697"/>
<path d="M421.2,394.6 L414.9,390.9 L414.9,383.6 L421.2,379.9 L427.6,383.6 L427.6,390.9 Z" fill="#9f9fa0"/>
<path d="M433.8,394.6 L427.4,390.9 L427.4,383.6 L433.8,379.9 L440.1,383.6 L440.1,390.9 Z" fill="#99999a"/>
<path d="M446.2,394.6 L439.9,390.9 L439.9,383.6 L446.2,379.9 L452.6,383.6 L452.6,390.9 Z" fill="#a0a0a1"/>
<path d="M458.8,394.6 L452.4,390.9 L452.4,383.6 L458.8,379.9 L465.1,383.6 L465.1,390.9 Z" fill="#99999a"/>
<path d="M471.2,394.6 L464.9,390.9 L464.9,383.6 L471.2,379.9 L477.6,383.6 L477.6,390.9 Z" fill="#8d8d8e"/>
<path d="M483.8,394.6 L477.4,390.9 L477.4,383.6 L483.8,379.9 L490.1,383.6 L490.1,390.9 Z" fill="#7a7a7b"/>
<path d="M496.2,394.6 L489.9,390.9 L489.9,383.6 L496.2,379.9 L502.6,383.6 L502.6,390.9 Z" fill="#747475"/>
<path d="M508.8,394.6 L502.4,390.9 L502.4,383.6 L508.8,379.9 L515.1,383.6 L515.1,390.9 Z" fill="#727273"/>
<path d="M521.2,394.6 L514.9,390.9 L514.9,383.6 L521.2,379.9 L527.6,383.6 L527.6,390.9 Z" fill="#6f6f70"/>
<path d="M533.8,394.6 L527.4,390.9 L527.4,383.6 L533.8,379.9 L540.1,383.6 L540.1,390.9 Z" fill="#717172"/>
<path d="M546.2,394.6 L539.9,390.9 L539.9,383.6 L546.2,379.9 L552.6,383.6 L552.6,390.9 Z" fill="#6f6f70"/>
<path d="M558.8,394.6 L552.4,390.9 L552.4,383.6 L558.8,379.9 L565.1,383.6 L565.1,390.9 Z" fill="#6b6b6c"/>
<path d="M571.2,394.6 L564.9,390.9 L564.9,383.6 L571.2,379.9 L577.6,383.6 L577.6,390.9 Z" fill="#646465"/>
<path d="M583.8,394.6 L577.4,390.9 L577.4,383.6 L583.8,379.9 L590.1,383.6 L590.1,390.9 Z" fill="#6b6b6c"/>
<path d="M596.2,394.6 L589.9,390.9 L589.9,383.6 L596.2,379.9 L602.6,383.6 L602.6,390.9 Z" fill="#676768"/>
<path d="M377.5,405.4 L371.1,401.7 L371.1,394.4 L377.5,390.7 L383.9,394.4 L383.9,401.7 Z" fill="#89898a"/>
<path d="M390.0,405.4 L383.6,401.7 L383.6,394.4 L390.0,390.7 L396.4,394.4 L396.4,401.7 Z" fill="#89898a"/>
<path d="M402.5,405.4 L396.1,401.7 L396.1,394.4 L402.5,390.7 L408.9,394.4 L408.9,401.7 Z" fill="#919192"/>
<path d="M415.0,405.4 L408.6,401.7 L408.6,394.4 L415.0,390.7 L421.4,394.4 L421.4,401.7 Z" fill="#9d9d9e"/>
<path d="M427.5,405.4 L421.1,401.7 L421.1,394.4 L427.5,390.7 L433.9,394.4 L433.9,401.7 Z" fill="#99999a"/>
<path d="M440.0,405.4 L433.6,401.7 L433.6,394.4 L440.0,390.7 L446.4,394.4 L446.4,401.7 Z" fill="#989899"/>
<path d="M452.5,405.4 L446.1,401.7 L446.1,394.4 L452.5,390.7 L458.9,394.4 L458.9,401.7 Z" fill="#969697"/>
<path d="M465.0,405.4 L458.6,401.7 L458.6,394.4 L465.0,390.7 L471.4,394.4 L471.4,401.7 Z" fill="#8b8b8c"/>
<path d="M477.5,405.4 L471.1,401.7 L471.1,394.4 L477.5,390.7 L483.9,394.4 L483.9,401.7 Z" fill="#7c7c7d"/>
<path d="M490.0,405.4 L483.6,401.7 L483.6,394.4 L490.0,390.7 L496.4,394.4 L496.4,401.7 Z" fill="#787879"/>
<path d="M502.5,405.4 L496.1,401.7 L496.1,394.4 L502.5,390.7 L508.9,394.4 L508.9,401.7 Z" fill="#6b6b6c"/>
<path d="M515.0,405.4 L508.6,401.7 L508.6,394.4 L515.0,390.7 L521.4,394.4 L521.4,401.7 Z" fill="#656566"/>
<path d="M527.5,405.4 L521.1,401.7 L521.1,394.4 L527.5,390.7 L533.9,394.4 L533.9,401.7 Z" fill="#69696a"/>
<path d="M540.0,405.4 L533.6,401.7 L533.6,394.4 L540.0,390.7 L546.4,394.4 L546.4,401.7 Z" fill="#6b6b6c"/>
<path d="M552.5,405.4 L546.1,401.7 L546.1,394.4 L552.5,390.7 L558.9,394.4 L558.9,401.7 Z" fill="#6c6c6d"/>
<path d="M565.0,405.4 L558.6,401.7 L558.6,394.4 L565.0,390.7 L571.4,394.4 L571.4,401.7 Z" fill="#666667"/>
<path d="M383.8,416.3 L377.4,412.6 L377.4,405.2 L383.8,401.5 L390.1,405.2 L390.1,412.6 Z" fill="#8b8b8c"/>
<path d="M396.2,416.3 L389.9,412.6 L389.9,405.2 L396.2,401.5 L402.6,405.2 L402.6,412.6 Z" fill="#8f8f90"/>
<path d="M408.8,416.3 L402.4,412.6 L402.4,405.2 L408.8,401.5 L415.1,405.2 L415.1,412.6 Z" fill="#919192"/>
<path d="M421.2,416.3 L414.9,412.6 L414.9,405.2 L421.2,401.5 L427.6,405.2 L427.6,412.6 Z" fill="#979798"/>
<path d="M433.8,416.3 L427.4,412.6 L427.4,405.2 L433.8,401.5 L440.1,405.2 L440.1,412.6 Z" fill="#949495"/>
<path d="M446.2,416.3 L439.9,412.6 L439.9,405.2 L446.2,401.5 L452.6,405.2 L452.6,412.6 Z" fill="#8f8f90"/>
<path d="M458.8,416.3 L452.4,412.6 L452.4,405.2 L458.8,401.5 L465.1,405.2 L465.1,412.6 Z" fill="#8a8a8b"/>
<path d="M471.2,416.3 L464.9,412.6 L464.9,405.2 L471.2,401.5 L477.6,405.2 L477.6,412.6 Z" fill="#7f7f80"/>
<path d="M483.8,416.3 L477.4,412.6 L477.4,405.2 L483.8,401.5 L490.1,405.2 L490.1,412.6 Z" fill="#737374"/>
<path d="M496.2,416.3 L489.9,412.6 L489.9,405.2 L496.2,401.5 L502.6,405.2 L502.6,412.6 Z" fill="#6c6c6d"/>
<path d="M508.8,416.3 L502.4,412.6 L502.4,405.2 L508.8,401.5 L515.1,405.2 L515.1,412.6 Z" fill="#646465"/>
<path d="M521.2,416.3 L514.9,412.6 L514.9,405.2 L521.2,401.5 L527.6,405.2 L527.6,412.6 Z" fill="#646465"/>
<path d="M533.8,416.3 L527.4,412.6 L527.4,405.2 L533.8,401.5 L540.1,405.2 L540.1,412.6 Z" fill="#646465"/>
<path d="M546.2,416.3 L539.9,412.6 L539.9,405.2 L546.2,401.5 L552.6,405.2 L552.6,412.6 Z" fill="#666667"/>
<path d="M390.0,427.1 L383.6,423.4 L383.6,416.0 L390.0,412.3 L396.4,416.0 L396.4,423.4 Z" fill="#8d8d8e"/>
<path d="M402.5,427.1 L396.1,423.4 L396.1,416.0 L402.5,412.3 L408.9,416.0 L408.9,423.4 Z" fill="#848485"/>
<path d="M415.0,427.1 L408.6,423.4 L408.6,416.0 L415.0,412.3 L421.4,416.0 L421.4,423.4 Z" fill="#89898a"/>
<path d="M427.5,427.1 L421.1,423.4 L421.1,416.0 L427.5,412.3 L433.9,416.0 L433.9,423.4 Z" fill="#8c8c8d"/>
<path d="M440.0,427.1 L433.6,423.4 L433.6,416.0 L440.0,412.3 L446.4,416.0 L446.4,423.4 Z" fill="#888889"/>
<path d="M452.5,427.1 L446.1,423.4 L446.1,416.0 L452.5,412.3 L458.9,416.0 L458.9,423.4 Z" fill="#7d7d7e"/>
<path d="M465.0,427.1 L458.6,423.4 L458.6,416.0 L465.0,412.3 L471.4,416.0 L471.4,423.4 Z" fill="#79797a"/>
<path d="M477.5,427.1 L471.1,423.4 L471.1,416.0 L477.5,412.3 L483.9,416.0 L483.9,423.4 Z" fill="#6c6c6d"/>
<path d="M490.0,427.1 L483.6,423.4 L483.6,416.0 L490.0,412.3 L496.4,416.0 L496.4,423.4 Z" fill="#626263"/>
<path d="M502.5,427.1 L496.1,423.4 L496.1,416.0 L502.5,412.3 L508.9,416.0 L508.9,423.4 Z" fill="#626263"/>
<path d="M515.0,427.1 L508.6,423.4 L508.6,416.0 L515.0,412.3 L521.4,416.0 L521.4,423.4 Z" fill="#626263"/>
<path d="M396.2,437.9 L389.9,434.2 L389.9,426.9 L396.2,423.2 L402.6,426.9 L402.6,434.2 Z" fill="#818182"/>
<path d="M408.8,437.9 L402.4,434.2 L402.4,426.9 L408.8,423.2 L415.1,426.9 L415.1,434.2 Z" fill="#848485"/>
<path d="M421.2,437.9 L414.9,434.2 L414.9,426.9 L421.2,423.2 L427.6,426.9 L427.6,434.2 Z" fill="#7d7d7e"/>
<path d="M433.8,437.9 L427.4,434.2 L427.4,426.9 L433.8,423.2 L440.1,426.9 L440.1,434.2 Z" fill="#7b7b7c"/>
<path d="M446.2,437.9 L439.9,434.2 L439.9,426.9 L446.2,423.2 L452.6,426.9 L452.6,434.2 Z" fill="#6c6c6d"/>
<path d="M458.8,437.9 L452.4,434.2 L452.4,426.9 L458.8,423.2 L465.1,426.9 L465.1,434.2 Z" fill="#666667"/>
<path d="M471.2,437.9 L464.9,434.2 L464.9,426.9 L471.2,423.2 L477.6,426.9 L477.6,434.2 Z" fill="#686869"/>
<path d="M483.8,437.9 L477.4,434.2 L477.4,426.9 L483.8,423.2 L490.1,426.9 L490.1,434.2 Z" fill="#666667"/>
<path d="M496.2,437.9 L489.9,434.2 L489.9,426.9 L496.2,423.2 L502.6,426.9 L502.6,434.2 Z" fill="#686869"/>
<path d="M508.8,437.9 L502.4,434.2 L502.4,426.9 L508.8,423.2 L515.1,426.9 L515.1,434.2 Z" fill="#656566"/>
<path d="M402.5,448.7 L396.1,445.0 L396.1,437.7 L402.5,434.0 L408.9,437.7 L408.9,445.0 Z" fill="#808081"/>
<path d="M415.0,448.7 L408.6,445.0 L408.6,437.7 L415.0,434.0 L421.4,437.7 L421.4,445.0 Z" fill="#7e7e7f"/>
<path d="M427.5,448.7 L421.1,445.0 L421.1,437.7 L427.5,434.0 L433.9,437.7 L433.9,445.0 Z" fill="#737374"/>
<path d="M440.0,448.7 L433.6,445.0 L433.6,437.7 L440.0,434.0 L446.4,437.7 L446.4,445.0 Z" fill="#666667"/>
<path d="M452.5,448.7 L446.1,445.0 L446.1,437.7 L452.5,434.0 L458.9,437.7 L458.9,445.0 Z" fill="#646465"/>
<path d="M465.0,448.7 L458.6,445.0 L458.6,437.7 L465.0,434.0 L471.4,437.7 L471.4,445.0 Z" fill="#626263"/>
<path d="M477.5,448.7 L471.1,445.0 L471.1,437.7 L477.5,434.0 L483.9,437.7 L483.9,445.0 Z" fill="#656566"/>
<path d="M490.0,448.7 L483.6,445.0 L483.6,437.7 L490.0,434.0 L496.4,437.7 L496.4,445.0 Z" fill="#636364"/>
</g>
</g>
<clipPath id="gc"><path d="M280,252 L384,246 L430,246 L500,250 L571,258 L600,272 L640,290 L730,300 L730,460 L280,460 Z"/></clipPath>
<g clip-path="url(#bc)"><g clip-path="url(#gc)" stroke="#5a5a5a" stroke-opacity="0.45" stroke-width="1">
<line x1="1199.7" y1="56.5" x2="353.6" y2="48.0"/>
<line x1="1199.5" y1="57.2" x2="342.4" y2="48.4"/>
<line x1="1199.3" y1="58.0" x2="331.0" y2="48.7"/>
<line x1="1199.8" y1="58.8" x2="319.2" y2="49.0"/>
<line x1="1199.6" y1="59.6" x2="307.1" y2="49.3"/>
<line x1="1199.4" y1="60.5" x2="294.7" y2="49.7"/>
<line x1="1200.0" y1="61.4" x2="281.9" y2="50.0"/>
<line x1="1199.8" y1="62.4" x2="268.8" y2="50.4"/>
<line x1="1199.5" y1="63.4" x2="255.3" y2="50.8"/>
<line x1="1199.3" y1="64.4" x2="241.4" y2="51.1"/>
<line x1="1199.9" y1="65.6" x2="227.1" y2="51.5"/>
<line x1="1199.7" y1="66.8" x2="212.4" y2="51.9"/>
<line x1="1199.5" y1="68.1" x2="197.2" y2="52.4"/>
<line x1="1199.2" y1="69.4" x2="181.5" y2="52.8"/>
<line x1="1199.9" y1="70.9" x2="165.3" y2="53.2"/>
<line x1="1199.6" y1="72.4" x2="148.7" y2="53.7"/>
<line x1="1199.3" y1="74.0" x2="131.4" y2="54.2"/>
<line x1="1199.0" y1="75.8" x2="113.7" y2="54.6"/>
<line x1="1199.8" y1="77.7" x2="95.3" y2="55.2"/>
<line x1="1199.5" y1="79.7" x2="76.3" y2="55.7"/>
<line x1="1199.2" y1="81.9" x2="56.6" y2="56.2"/>
<line x1="1198.8" y1="84.3" x2="36.2" y2="56.8"/>
<line x1="1199.7" y1="86.9" x2="15.1" y2="57.4"/>
<line x1="1199.4" y1="89.7" x2="-6.7" y2="58.0"/>
<line x1="1199.0" y1="92.8" x2="-29.4" y2="58.6"/>
<line x1="1198.5" y1="96.2" x2="-53.0" y2="59.2"/>
<line x1="1199.6" y1="100.0" x2="-77.5" y2="59.9"/>
<line x1="1199.2" y1="104.1" x2="-102.9" y2="60.6"/>
<line x1="1198.7" y1="108.8" x2="-129.4" y2="61.3"/>
<line x1="1200.0" y1="114.0" x2="-156.9" y2="62.1"/>
<line x1="1199.5" y1="120.0" x2="-185.7" y2="62.9"/>
<line x1="1198.9" y1="126.7" x2="-199.8" y2="64.4"/>
<line x1="1198.2" y1="134.5" x2="-199.9" y2="66.8"/>
<line x1="1199.9" y1="143.7" x2="-199.8" y2="69.7"/>
<line x1="1199.2" y1="154.4" x2="-199.9" y2="73.0"/>
<line x1="1198.3" y1="167.2" x2="-199.7" y2="77.0"/>
<line x1="1197.2" y1="182.9" x2="-199.8" y2="81.9"/>
<line x1="1199.7" y1="202.7" x2="-200.0" y2="88.0"/>
<line x1="1187.7" y1="56.4" x2="783.1" y2="695.4"/>
<line x1="1198.5" y1="227.8" x2="-199.8" y2="95.9"/>
<line x1="1155.2" y1="56.0" x2="81.7" y2="698.1"/>
<line x1="1197.0" y1="261.1" x2="-200.0" y2="106.3"/>
<line x1="1123.7" y1="55.7" x2="-190.9" y2="542.9"/>
<line x1="1199.0" y1="377.7" x2="-199.9" y2="142.5"/>
<line x1="1063.7" y1="55.1" x2="-197.4" y2="322.6"/>
<line x1="1196.2" y1="492.0" x2="-199.4" y2="178.5"/>
<line x1="1035.0" y1="54.8" x2="-196.6" y2="270.7"/>
<line x1="1134.5" y1="697.2" x2="-199.8" y2="248.9"/>
<line x1="1007.2" y1="54.6" x2="-199.9" y2="235.1"/>
<line x1="178.0" y1="698.8" x2="-198.2" y2="452.2"/>
<line x1="980.2" y1="54.3" x2="-199.0" y2="208.4"/>
<line x1="954.0" y1="54.0" x2="-198.3" y2="187.9"/>
<line x1="928.5" y1="53.8" x2="-197.7" y2="171.6"/>
<line x1="903.8" y1="53.5" x2="-199.7" y2="158.7"/>
<line x1="879.7" y1="53.3" x2="-199.1" y2="147.8"/>
<line x1="856.3" y1="53.1" x2="-198.6" y2="138.6"/>
<line x1="833.5" y1="52.8" x2="-198.2" y2="130.8"/>
<line x1="811.4" y1="52.6" x2="-199.6" y2="124.2"/>
<line x1="789.8" y1="52.4" x2="-199.2" y2="118.3"/>
<line x1="768.7" y1="52.2" x2="-198.8" y2="113.1"/>
<line x1="748.3" y1="52.0" x2="-199.9" y2="108.6"/>
<line x1="728.3" y1="51.8" x2="-199.5" y2="104.5"/>
<line x1="708.8" y1="51.6" x2="-199.2" y2="100.8"/>
<line x1="689.8" y1="51.4" x2="-198.9" y2="97.5"/>
<line x1="671.3" y1="51.2" x2="-199.8" y2="94.5"/>
<line x1="653.2" y1="51.0" x2="-199.5" y2="91.7"/>
<line x1="635.5" y1="50.9" x2="-199.2" y2="89.2"/>
<line x1="618.3" y1="50.7" x2="-199.0" y2="86.9"/>
<line x1="601.5" y1="50.5" x2="-199.7" y2="84.8"/>
<line x1="585.0" y1="50.4" x2="-199.5" y2="82.9"/>
<line x1="568.9" y1="50.2" x2="-199.2" y2="81.0"/>
<line x1="553.2" y1="50.0" x2="-199.9" y2="79.4"/>
<line x1="537.8" y1="49.9" x2="-199.7" y2="77.8"/>
<line x1="522.8" y1="49.7" x2="-199.5" y2="76.3"/>
<line x1="508.1" y1="49.6" x2="-199.2" y2="74.9"/>
<line x1="493.7" y1="49.4" x2="-199.9" y2="73.6"/>
<line x1="479.6" y1="49.3" x2="-199.6" y2="72.4"/>
<line x1="465.8" y1="49.2" x2="-199.4" y2="71.2"/>
<line x1="452.3" y1="49.0" x2="-200.0" y2="70.2"/>
<line x1="439.1" y1="48.9" x2="-199.8" y2="69.1"/>
<line x1="426.1" y1="48.8" x2="-199.6" y2="68.2"/>
<line x1="413.4" y1="48.6" x2="-199.4" y2="67.2"/>
<line x1="401.0" y1="48.5" x2="-199.9" y2="66.4"/>
<line x1="388.8" y1="48.4" x2="-199.7" y2="65.5"/>
<line x1="376.8" y1="48.3" x2="-199.6" y2="64.7"/>
<line x1="365.1" y1="48.2" x2="-199.4" y2="64.0"/>
<line x1="353.6" y1="48.0" x2="-199.9" y2="63.3"/>
</g>
<line x1="0" y1="349.4" x2="384" y2="246.8" stroke="#8a3f48" stroke-opacity="0.6" stroke-width="1.3"/>
<line x1="658" y1="235.3" x2="700" y2="240.8" stroke="#5b7a2e" stroke-width="1.3"/>
</g>
<path d="M411.4,74.5 C419.8,70.1 416.7,60.8 420.3,55.5 C423.9,50.2 427.5,45.8 433.0,42.8 C438.5,39.8 446.4,37.4 453.2,37.2 C459.9,37.0 467.2,39.1 473.5,41.5 C479.8,43.9 485.7,51.1 491.2,51.7 C496.7,52.3 499.6,47.4 506.4,45.3 C513.2,43.2 522.1,40.9 531.8,39.0 C541.5,37.1 555.8,34.0 564.7,34.0 C573.6,34.0 579.1,36.3 585.0,39.0 C590.9,41.7 595.1,46.0 600.2,50.4 C605.3,54.8 608.8,62.4 615.4,65.6 C622.0,68.8 631.3,66.9 640.0,69.4 C648.7,71.9 658.6,76.3 667.4,80.7 C676.2,85.1 685.9,90.5 692.7,96.0 C699.5,101.5 704.5,107.3 708.0,113.6 C711.5,119.9 713.2,127.7 714.0,134.0 C714.8,140.3 714.9,144.4 713.0,151.6 C711.1,158.8 706.7,169.0 702.9,177.0 C699.1,185.0 693.6,193.1 690.2,199.8 C686.8,206.6 685.1,210.8 682.6,217.5 C680.1,224.2 678.0,233.2 675.4,239.8 C672.8,246.4 669.9,250.9 666.8,257.0 C663.7,263.1 659.7,270.5 657.0,276.6 C654.3,282.7 652.4,287.7 650.8,293.8 C649.2,299.9 648.6,307.3 647.2,313.4 C645.8,319.5 644.8,324.9 642.3,330.6 C639.8,336.3 636.5,342.2 632.4,347.7 C628.3,353.2 623.4,359.0 617.7,363.7 C612.0,368.4 605.5,372.7 598.1,376.0 C590.8,379.3 581.8,380.2 573.6,383.3 C565.4,386.4 557.2,390.4 549.0,394.3 C540.8,398.2 532.7,401.9 524.5,406.6 C516.3,411.3 506.4,418.4 500.0,422.5 C493.6,426.6 492.6,427.9 486.2,431.0 C479.8,434.1 469.8,438.8 461.6,440.9 C453.4,443.0 444.5,444.2 437.1,443.8 C429.8,443.4 423.2,441.8 417.5,438.4 C411.8,435.0 406.9,429.4 402.8,423.7 C398.7,418.0 396.3,410.9 393.0,404.0 C389.7,397.1 386.9,388.9 383.2,382.0 C379.5,375.1 375.5,368.1 371.0,362.4 C366.5,356.7 361.5,352.2 356.2,347.7 C350.9,343.2 344.7,340.3 339.0,335.4 C333.3,330.5 327.2,324.8 321.9,318.3 C316.6,311.8 311.1,304.0 307.2,296.2 C303.3,288.4 300.6,280.3 298.6,271.7 C296.6,263.1 295.4,253.4 295.4,244.7 C295.4,236.0 297.0,227.8 298.5,219.5 C300.0,211.2 302.0,203.9 304.6,195.0 C307.2,186.1 311.3,174.5 314.3,166.0 C317.3,157.5 321.4,149.7 322.8,144.0 C324.2,138.3 322.2,137.2 322.8,132.0 C323.4,126.8 323.8,118.3 326.4,112.6 C329.0,106.9 331.3,103.1 338.6,98.0 C345.9,92.9 357.9,85.9 370.0,82.0 C382.1,78.1 403.0,78.9 411.4,74.5 Z" fill="none" stroke="#1a1a1a" stroke-opacity="0.55" stroke-width="3.6"/>
<path d="M411.4,74.5 C419.8,70.1 416.7,60.8 420.3,55.5 C423.9,50.2 427.5,45.8 433.0,42.8 C438.5,39.8 446.4,37.4 453.2,37.2 C459.9,37.0 467.2,39.1 473.5,41.5 C479.8,43.9 485.7,51.1 491.2,51.7 C496.7,52.3 499.6,47.4 506.4,45.3 C513.2,43.2 522.1,40.9 531.8,39.0 C541.5,37.1 555.8,34.0 564.7,34.0 C573.6,34.0 579.1,36.3 585.0,39.0 C590.9,41.7 595.1,46.0 600.2,50.4 C605.3,54.8 608.8,62.4 615.4,65.6 C622.0,68.8 631.3,66.9 640.0,69.4 C648.7,71.9 658.6,76.3 667.4,80.7 C676.2,85.1 685.9,90.5 692.7,96.0 C699.5,101.5 704.5,107.3 708.0,113.6 C711.5,119.9 713.2,127.7 714.0,134.0 C714.8,140.3 714.9,144.4 713.0,151.6 C711.1,158.8 706.7,169.0 702.9,177.0 C699.1,185.0 693.6,193.1 690.2,199.8 C686.8,206.6 685.1,210.8 682.6,217.5 C680.1,224.2 678.0,233.2 675.4,239.8 C672.8,246.4 669.9,250.9 666.8,257.0 C663.7,263.1 659.7,270.5 657.0,276.6 C654.3,282.7 652.4,287.7 650.8,293.8 C649.2,299.9 648.6,307.3 647.2,313.4 C645.8,319.5 644.8,324.9 642.3,330.6 C639.8,336.3 636.5,342.2 632.4,347.7 C628.3,353.2 623.4,359.0 617.7,363.7 C612.0,368.4 605.5,372.7 598.1,376.0 C590.8,379.3 581.8,380.2 573.6,383.3 C565.4,386.4 557.2,390.4 549.0,394.3 C540.8,398.2 532.7,401.9 524.5,406.6 C516.3,411.3 506.4,418.4 500.0,422.5 C493.6,426.6 492.6,427.9 486.2,431.0 C479.8,434.1 469.8,438.8 461.6,440.9 C453.4,443.0 444.5,444.2 437.1,443.8 C429.8,443.4 423.2,441.8 417.5,438.4 C411.8,435.0 406.9,429.4 402.8,423.7 C398.7,418.0 396.3,410.9 393.0,404.0 C389.7,397.1 386.9,388.9 383.2,382.0 C379.5,375.1 375.5,368.1 371.0,362.4 C366.5,356.7 361.5,352.2 356.2,347.7 C350.9,343.2 344.7,340.3 339.0,335.4 C333.3,330.5 327.2,324.8 321.9,318.3 C316.6,311.8 311.1,304.0 307.2,296.2 C303.3,288.4 300.6,280.3 298.6,271.7 C296.6,263.1 295.4,253.4 295.4,244.7 C295.4,236.0 297.0,227.8 298.5,219.5 C300.0,211.2 302.0,203.9 304.6,195.0 C307.2,186.1 311.3,174.5 314.3,166.0 C317.3,157.5 321.4,149.7 322.8,144.0 C324.2,138.3 322.2,137.2 322.8,132.0 C323.4,126.8 323.8,118.3 326.4,112.6 C329.0,106.9 331.3,103.1 338.6,98.0 C345.9,92.9 357.9,85.9 370.0,82.0 C382.1,78.1 403.0,78.9 411.4,74.5 Z" fill="none" stroke="#f4a126" stroke-width="2"/>
<circle cx="502" cy="215" r="3" fill="#f0a030" stroke="#222" stroke-width="0.8"/>
</svg>

<svg class="ab" style="left:0;top:458px" width="947" height="439"><defs><pattern id="dots" patternUnits="userSpaceOnUse" x="20.35" y="11.7" width="35.15" height="35.15"><rect x="0" y="0" width="3" height="3" fill="#2c2c2c"/><rect x="17.575" y="17.575" width="3" height="3" fill="#222"/><rect x="17.575" y="0" width="3" height="3" fill="#222"/><rect x="0" y="17.575" width="3" height="3" fill="#222"/></pattern></defs><rect width="947" height="439" fill="#1d1d1d"/><rect width="947" height="439" fill="url(#dots)"/></svg>
<div class="ab" style="left:0;top:458px;width:947px;height:34px;background:#1d1d1d"></div>
<div class="ab" style="left:0;top:458px;width:947px;height:2px;background:#181818"></div>
<div class="t" style="left:16.5px;top:464.5px;font-size:12.4px;color:#e6e6e6;">Node</div>
<div class="ab" style="left:360px;top:464px;width:233px;height:22px;border-radius:5px;background:#282828;box-shadow:inset 0 0 0 1px #383838"></div>
<div class="ab" style="left:394.5px;top:465px;width:132px;height:20px;background:#1d1d1d;border-left:1px solid #383838"></div>
<div class="ab" style="left:526px;top:464px;width:67px;height:22px;background:#4f4f4f;border-radius:0 5px 5px 0"></div>
<div class="ab" style="left:548.3px;top:464px;width:1px;height:22px;background:#3c3c3c"></div>
<div class="ab" style="left:570.4px;top:464px;width:1px;height:22px;background:#3c3c3c"></div>
<svg class="ab" style="left:365.5px;top:466.5px" width="18" height="18" viewBox="0 0 18 18"><rect x="2.6" y="0.3" width="8.8" height="6.6" rx="1.8" fill="#e2e2e2"/><rect x="3.6" y="4.1" width="6.8" height="1.4" fill="#5a5a5a"/><rect x="0.1" y="9.2" width="8.9" height="6.7" rx="1.8" fill="#e2e2e2"/><rect x="1.1" y="13.0" width="6.9" height="1.4" fill="#5a5a5a"/><path d="M12.6,1.2 L14.2,2.6 L12.6,3.6 Z" fill="#d0d0d0"/><path d="M13.8,2.8 L15.1,2.8 L15.1,12.6 L11.2,12.6" stroke="#cfcfcf" stroke-width="1" fill="none"/><path d="M10.2,11.6 L11.6,12.6 L10.2,13.8 Z" fill="#d0d0d0"/></svg>
<svg class="ab" style="left:383px;top:472px" width="10" height="8"><path d="M1.2,2 L4.6,5.4 L8,2" stroke="#dcdcdc" stroke-width="1.1" fill="none"/></svg>
<div class="t" style="left:403.5px;top:464.5px;font-size:12.4px;color:#e6e6e6;">Geometry Nodes</div>
<svg class="ab" style="left:529px;top:466px" width="19" height="18" viewBox="0 0 19 18"><path d="M9.5,1.5 C7.5,2.8 5,3.6 2.4,3.6 L2.4,9 C2.4,12.6 5.6,15.2 9.5,16.6 C13.4,15.2 16.6,12.6 16.6,9 L16.6,3.6 C14,3.6 11.5,2.8 9.5,1.5 Z" stroke="#b4b4b4" stroke-width="1.1" fill="none"/></svg>
<svg class="ab" style="left:551px;top:466px" width="18" height="18" viewBox="0 0 18 18"><path d="M5.5,4.5 L1.6,4.5 L1.6,16.1 L11.2,16.1 L11.2,12.8" stroke="#d0d0d0" stroke-width="1.2" fill="none"/><path d="M5.6,1.2 L12.6,1.2 L16.4,5 L16.4,12.6 L5.6,12.6 Z" stroke="#e0e0e0" stroke-width="1.2" fill="none"/><path d="M12.2,1.2 L16.4,5.4 L12.2,5.4 Z" fill="#e0e0e0"/></svg>
<svg class="ab" style="left:575.5px;top:469px" width="12" height="12"><path d="M1.2,1.2 L10.8,10.8 M10.8,1.2 L1.2,10.8" stroke="#e8e8e8" stroke-width="1.2"/></svg>
<svg class="ab" style="left:600px;top:466px" width="18" height="18" viewBox="0 0 18 18"><path d="M1.2,16.8 L6.6,11.4" stroke="#c8c8c8" stroke-width="1.1"/><path d="M12.2,1.6 L16.4,5.8 L14.6,7.0 L11.6,10 L12,13 L10.6,13.6 L4.4,7.4 L5,6 L8,6.4 L11,3.4 Z" stroke="#c8c8c8" stroke-width="1.1" fill="none" stroke-linejoin="round"/></svg>
<div class="t" style="left:-1px;top:502.5px;font-size:12.6px;color:#e6e6e6;">etryNodes</div>
<svg class="ab" style="left:73px;top:506px" width="10" height="14"><path d="M2.5,2.3 L7.6,7.3 L2.5,12.3" stroke="#dcdcdc" stroke-width="1.2" fill="none"/></svg>
<svg class="ab" style="left:90.4px;top:504.3px" width="18" height="18" viewBox="0 0 18 18"><rect x="2.6" y="0.3" width="8.8" height="6.6" rx="1.8" fill="#e2e2e2"/><rect x="3.6" y="4.1" width="6.8" height="1.4" fill="#5a5a5a"/><rect x="0.1" y="9.2" width="8.9" height="6.7" rx="1.8" fill="#e2e2e2"/><rect x="1.1" y="13.0" width="6.9" height="1.4" fill="#5a5a5a"/><path d="M12.6,1.2 L14.2,2.6 L12.6,3.6 Z" fill="#d0d0d0"/><path d="M13.8,2.8 L15.1,2.8 L15.1,12.6 L11.2,12.6" stroke="#cfcfcf" stroke-width="1" fill="none"/><path d="M10.2,11.6 L11.6,12.6 L10.2,13.8 Z" fill="#d0d0d0"/></svg>
<div class="t" style="left:117.4px;top:502.5px;font-size:12.6px;color:#e6e6e6;">Geometry Nodes</div>
<div class="nd" style="left:339px;top:524px;width:122px;height:84px"></div>
<div class="hd" style="left:339px;top:524px;width:122px;height:17px;background:#1d725e"></div>
<svg class="ab" style="left:347px;top:528.5px" width="10" height="8"><path d="M1.5,2 L5,5.5 L8.5,2" stroke="#ddd" stroke-width="1.2" fill="none"/></svg>
<div class="t" style="left:360px;top:522.5px;font-size:9.6px;color:#e6e6e6;">Ico Sphere</div>
<div class="t" style="right:497.5px;top:543.8px;font-size:9.6px;color:#e6e6e6;text-align:right;">Mesh</div>
<div class="fd" style="left:348px;top:568px;width:103px"></div><div class="t" style="left:361px;top:566.0px;font-size:9.6px;color:#e6e6e6;">Radius</div><div class="t" style="right:509px;top:566.0px;font-size:9.6px;color:#e6e6e6;text-align:right;">1 m</div>
<div class="fd" style="left:348px;top:588px;width:103px"></div><div class="t" style="left:361px;top:586.0px;font-size:9.6px;color:#e6e6e6;">Subdivisions</div><div class="t" style="right:509px;top:586.0px;font-size:9.6px;color:#e6e6e6;text-align:right;">5</div>
<div class="nd" style="left:480px;top:524px;width:122px;height:84px"></div>
<div class="hd" style="left:480px;top:524px;width:122px;height:17px;background:#1d725e"></div>
<svg class="ab" style="left:488px;top:528.5px" width="10" height="8"><path d="M1.5,2 L5,5.5 L8.5,2" stroke="#ddd" stroke-width="1.2" fill="none"/></svg>
<div class="t" style="left:501px;top:522.5px;font-size:9.6px;color:#e6e6e6;">Dual Mesh</div>
<div class="t" style="right:356.29999999999995px;top:543.8px;font-size:9.6px;color:#e6e6e6;text-align:right;">Dual Mesh</div>
<div class="t" style="left:489.8px;top:565.5px;font-size:9.6px;color:#e6e6e6;">Mesh</div>
<div class="cb" style="left:489px;top:590px"></div>
<div class="t" style="left:503.6px;top:585.5px;font-size:9.6px;color:#e6e6e6;">Keep Boundaries</div>
<div class="nd" style="left:638px;top:524px;width:122px;height:124px"></div>
<div class="hd" style="left:638px;top:524px;width:122px;height:17px;background:#1d725e"></div>
<svg class="ab" style="left:646px;top:528.5px" width="10" height="8"><path d="M1.5,2 L5,5.5 L8.5,2" stroke="#ddd" stroke-width="1.2" fill="none"/></svg>
<div class="t" style="left:659px;top:522.5px;font-size:9.6px;color:#e6e6e6;">Set Position</div>
<div class="t" style="right:198px;top:543.8px;font-size:9.6px;color:#e6e6e6;text-align:right;">Geometry</div>
<div class="t" style="left:647.5px;top:565.5px;font-size:9.6px;color:#e6e6e6;">Geometry</div>
<div class="t" style="left:647.5px;top:585.5px;font-size:9.6px;color:#e6e6e6;">Selection</div>
<div class="t" style="left:647.5px;top:605.6px;font-size:9.6px;color:#e6e6e6;">Position</div>
<div class="t" style="left:647.5px;top:625.4px;font-size:9.6px;color:#e6e6e6;">Offset</div>
<div class="nd" style="left:778px;top:524px;width:123px;height:59px"></div>
<div class="hd" style="left:778px;top:524px;width:123px;height:18px;background:#1d1d1d"></div>
<svg class="ab" style="left:786px;top:529.0px" width="10" height="8"><path d="M1.5,2 L5,5.5 L8.5,2" stroke="#ddd" stroke-width="1.2" fill="none"/></svg>
<div class="t" style="left:799px;top:523.0px;font-size:9.6px;color:#e6e6e6;">Group Output</div>
<div class="t" style="left:788.3px;top:540.0px;font-size:9.6px;color:#e6e6e6;">Geometry</div>
<div class="nd" style="left:339px;top:629px;width:122px;height:43px"></div>
<div class="hd" style="left:339px;top:629px;width:122px;height:18px;background:#83314a"></div>
<svg class="ab" style="left:347px;top:634.0px" width="10" height="8"><path d="M1.5,2 L5,5.5 L8.5,2" stroke="#ddd" stroke-width="1.2" fill="none"/></svg>
<div class="t" style="left:360px;top:628.0px;font-size:9.6px;color:#e6e6e6;">Normal</div>
<div class="t" style="right:497.5px;top:649.6px;font-size:9.6px;color:#e6e6e6;text-align:right;">Normal</div>
<div class="nd" style="left:480px;top:665px;width:122px;height:112px"></div>
<div class="hd" style="left:480px;top:665px;width:122px;height:17px;background:#3c3c83"></div>
<svg class="ab" style="left:488px;top:669.5px" width="10" height="8"><path d="M1.5,2 L5,5.5 L8.5,2" stroke="#ddd" stroke-width="1.2" fill="none"/></svg>
<div class="t" style="left:501px;top:663.5px;font-size:9.6px;color:#e6e6e6;">Scale</div>
<div class="t" style="right:356.29999999999995px;top:684.6px;font-size:9.6px;color:#e6e6e6;text-align:right;">Vector</div>
<div class="dd" style="left:489px;top:715px;width:103px"></div><div class="t" style="left:495.5px;top:713.5px;font-size:9.6px;color:#e6e6e6;">Scale</div><svg class="ab" style="left:581.5px;top:721.0px" width="8" height="6"><path d="M1,1.2 L4,4.2 L7,1.2" stroke="#ddd" stroke-width="1.1" fill="none"/></svg>
<div class="t" style="left:489.3px;top:734.0px;font-size:9.6px;color:#e6e6e6;">Vector</div>
<div class="t" style="left:489.3px;top:754.0px;font-size:9.6px;color:#e6e6e6;">Scale</div>
<div class="nd" style="left:339px;top:682px;width:122px;height:134px"></div>
<div class="hd" style="left:339px;top:682px;width:122px;height:17px;background:#246283"></div>
<svg class="ab" style="left:347px;top:686.5px" width="10" height="8"><path d="M1.5,2 L5,5.5 L8.5,2" stroke="#ddd" stroke-width="1.2" fill="none"/></svg>
<div class="t" style="left:360px;top:680.5px;font-size:9.6px;color:#e6e6e6;">Multiply</div>
<div class="t" style="right:497px;top:702.0px;font-size:9.6px;color:#e6e6e6;text-align:right;">Value</div>
<div class="dd" style="left:348px;top:729.5px;width:104px"></div><div class="t" style="left:354.5px;top:728.0px;font-size:9.6px;color:#e6e6e6;">Multiply</div><svg class="ab" style="left:441.5px;top:735.5px" width="8" height="6"><path d="M1,1.2 L4,4.2 L7,1.2" stroke="#ddd" stroke-width="1.1" fill="none"/></svg>
<div class="cb" style="left:348px;top:754px"></div>
<div class="t" style="left:362.6px;top:749.5px;font-size:9.6px;color:#e6e6e6;">Clamp</div>
<div class="t" style="left:348px;top:770.7px;font-size:9.6px;color:#e6e6e6;">Value</div>
<div class="fd" style="left:348px;top:793px;width:103px"></div><div class="t" style="left:361.5px;top:791.0px;font-size:9.6px;color:#e6e6e6;">Value</div><div class="t" style="right:509.5px;top:791.0px;font-size:9.6px;color:#e6e6e6;text-align:right;">0.600</div>
<div class="nd" style="left:58px;top:682px;width:122px;height:190px"></div>
<div class="hd" style="left:58px;top:682px;width:122px;height:17px;background:#79461d"></div>
<svg class="ab" style="left:66px;top:686.5px" width="10" height="8"><path d="M1.5,2 L5,5.5 L8.5,2" stroke="#ddd" stroke-width="1.2" fill="none"/></svg>
<div class="t" style="left:79px;top:680.5px;font-size:9.6px;color:#e6e6e6;">Noise Texture</div>
<div class="t" style="right:778px;top:701.8px;font-size:9.6px;color:#e6e6e6;text-align:right;">Fac</div>
<div class="t" style="right:778px;top:721.8px;font-size:9.6px;color:#e6e6e6;text-align:right;">Color</div>
<div class="dd" style="left:66px;top:749.5px;width:104px"></div><div class="t" style="left:72.5px;top:748.0px;font-size:9.6px;color:#e6e6e6;">3D</div><svg class="ab" style="left:159.5px;top:755.5px" width="8" height="6"><path d="M1,1.2 L4,4.2 L7,1.2" stroke="#ddd" stroke-width="1.1" fill="none"/></svg>
<div class="t" style="left:67px;top:769.6px;font-size:9.6px;color:#e6e6e6;">Vector</div>
<div class="fd" style="left:67px;top:792px;width:103px"></div><div class="t" style="left:80px;top:790.0px;font-size:9.6px;color:#e6e6e6;">Scale</div><div class="t" style="right:790px;top:790.0px;font-size:9.6px;color:#e6e6e6;text-align:right;">1.400</div>
<div class="fd" style="left:67px;top:812px;width:103px"></div><div class="t" style="left:80px;top:810.0px;font-size:9.6px;color:#e6e6e6;">Detail</div><div class="t" style="right:790px;top:810.0px;font-size:9.6px;color:#e6e6e6;text-align:right;">0.000</div>
<div class="fd" style="left:67px;top:832px;width:103px"><div style="position:absolute;left:0;top:0;bottom:0;width:50px;background:#4772b3"></div></div><div class="t" style="left:75px;top:830.0px;font-size:9.6px;color:#e6e6e6;">Roughness</div><div class="t" style="right:785px;top:830.0px;font-size:9.6px;color:#e6e6e6;text-align:right;">0.500</div>
<div class="fd" style="left:67px;top:851.5px;width:103px"></div><div class="t" style="left:80px;top:849.5px;font-size:9.6px;color:#e6e6e6;">Distortion</div><div class="t" style="right:790px;top:849.5px;font-size:9.6px;color:#e6e6e6;text-align:right;">0.000</div>
<div class="nd" style="left:198px;top:682px;width:123px;height:193px"></div>
<div class="hd" style="left:198px;top:682px;width:123px;height:17px;background:#246283"></div>
<svg class="ab" style="left:206px;top:686.5px" width="10" height="8"><path d="M1.5,2 L5,5.5 L8.5,2" stroke="#ddd" stroke-width="1.2" fill="none"/></svg>
<div class="t" style="left:219px;top:680.5px;font-size:9.6px;color:#e6e6e6;">Map Range</div>
<div class="t" style="right:637px;top:701.8px;font-size:9.6px;color:#e6e6e6;text-align:right;">Result</div>
<div class="dd" style="left:208px;top:729.5px;width:104px"></div><div class="t" style="left:214.5px;top:728.0px;font-size:9.6px;color:#e6e6e6;">Linear</div><svg class="ab" style="left:301.5px;top:735.5px" width="8" height="6"><path d="M1,1.2 L4,4.2 L7,1.2" stroke="#ddd" stroke-width="1.1" fill="none"/></svg>
<div class="cb" style="left:208px;top:754px;background:#4772b3"></div><svg class="ab" style="left:208px;top:754px" width="11" height="11"><path d="M2.3,5.6 L4.5,7.8 L8.8,3" stroke="#fff" stroke-width="1.6" fill="none"/></svg>
<div class="t" style="left:222px;top:749.5px;font-size:9.6px;color:#e6e6e6;">Clamp</div>
<div class="t" style="left:207.5px;top:770.9px;font-size:9.6px;color:#e6e6e6;">Value</div>
<div class="fd" style="left:208px;top:793px;width:103px"></div><div class="t" style="left:221px;top:791.0px;font-size:9.6px;color:#e6e6e6;">From Min</div><div class="t" style="right:649px;top:791.0px;font-size:9.6px;color:#e6e6e6;text-align:right;">0.300</div>
<div class="fd" style="left:208px;top:813px;width:103px"></div><div class="t" style="left:221px;top:811.0px;font-size:9.6px;color:#e6e6e6;">From Max</div><div class="t" style="right:649px;top:811.0px;font-size:9.6px;color:#e6e6e6;text-align:right;">0.900</div>
<div class="fd" style="left:208px;top:833px;width:103px"></div><div class="t" style="left:221px;top:831.0px;font-size:9.6px;color:#e6e6e6;">To Min</div><div class="t" style="right:649px;top:831.0px;font-size:9.6px;color:#e6e6e6;text-align:right;">0.000</div>
<div class="fd" style="left:208px;top:853px;width:103px"></div><div class="t" style="left:221px;top:851.0px;font-size:9.6px;color:#e6e6e6;">To Max</div><div class="t" style="right:649px;top:851.0px;font-size:9.6px;color:#e6e6e6;text-align:right;">1.000</div>
<svg class="ab" style="left:0;top:0" width="947" height="897">
<line x1="461.5" y1="553.8" x2="479.5" y2="575.5" stroke="#111" stroke-width="4.5"/>
<line x1="461.5" y1="553.8" x2="479.5" y2="575.5" stroke="#19c096" stroke-width="2.5"/>
<line x1="602.7" y1="553.8" x2="637.7" y2="575.5" stroke="#111" stroke-width="4.5"/>
<line x1="602.7" y1="553.8" x2="637.7" y2="575.5" stroke="#19c096" stroke-width="2.5"/>
<line x1="760.4" y1="553.8" x2="778" y2="550" stroke="#111" stroke-width="4.5"/>
<line x1="760.4" y1="553.8" x2="778" y2="550" stroke="#19c096" stroke-width="2.5"/>
<line x1="602.3" y1="694.6" x2="637.7" y2="635.4" stroke="#141414" stroke-opacity="0.8" stroke-width="3"/>
<line x1="602.3" y1="694.6" x2="637.7" y2="635.4" stroke="#6363c7" stroke-width="1.6" stroke-dasharray="3 1.3"/>
<line x1="461.5" y1="659.6" x2="479.5" y2="744" stroke="#141414" stroke-opacity="0.8" stroke-width="3"/>
<line x1="461.5" y1="659.6" x2="479.5" y2="744" stroke="#6363c7" stroke-width="1.6" stroke-dasharray="3 1.3"/>
<line x1="462.1" y1="712" x2="479.5" y2="764" stroke="#141414" stroke-opacity="0.8" stroke-width="3"/>
<line x1="462.1" y1="712" x2="479.5" y2="764" stroke="#a1a1a1" stroke-width="1.6"/>
<line x1="180.3" y1="711.8" x2="198" y2="780.9" stroke="#141414" stroke-opacity="0.8" stroke-width="3"/>
<line x1="180.3" y1="711.8" x2="198" y2="780.9" stroke="#a1a1a1" stroke-width="1.6"/>
<line x1="321.3" y1="711.8" x2="338.4" y2="780.7" stroke="#141414" stroke-opacity="0.8" stroke-width="3"/>
<line x1="321.3" y1="711.8" x2="338.4" y2="780.7" stroke="#a1a1a1" stroke-width="1.6"/>
</svg>
<svg class="ab" style="left:455.5px;top:547.8px" width="12" height="12"><circle cx="6" cy="6" r="4" fill="#00d6a3" stroke="#111" stroke-width="0.8"/></svg>
<svg class="ab" style="left:332.7px;top:569.3px" width="12" height="12"><circle cx="6" cy="6" r="4" fill="#a1a1a1" stroke="#111" stroke-width="0.8"/></svg>
<svg class="ab" style="left:332.7px;top:589.5px" width="12" height="12"><circle cx="6" cy="6" r="4" fill="#598c5c" stroke="#111" stroke-width="0.8"/></svg>
<svg class="ab" style="left:596.7px;top:547.8px" width="12" height="12"><circle cx="6" cy="6" r="4" fill="#00d6a3" stroke="#111" stroke-width="0.8"/></svg>
<svg class="ab" style="left:473.5px;top:569.5px" width="12" height="12"><circle cx="6" cy="6" r="4" fill="#00d6a3" stroke="#111" stroke-width="0.8"/></svg>
<svg class="ab" style="left:473.5px;top:589.5px" width="12" height="12"><circle cx="6" cy="6" r="4" fill="#cca6d6" stroke="#111" stroke-width="0.8"/></svg>
<svg class="ab" style="left:754.4px;top:547.8px" width="12" height="12"><circle cx="6" cy="6" r="4" fill="#00d6a3" stroke="#111" stroke-width="0.8"/></svg>
<svg class="ab" style="left:631.7px;top:569.5px" width="12" height="12"><circle cx="6" cy="6" r="4" fill="#00d6a3" stroke="#111" stroke-width="0.8"/></svg>
<svg class="ab" style="left:631.7px;top:589.5px" width="12" height="12"><path d="M6,1.3 L10.7,6 L6,10.7 L1.3,6Z" fill="#cca6d6" stroke="#111" stroke-width="0.8"/><rect x="4.8" y="4.8" width="2.4" height="2.4" fill="#222" transform="rotate(45 6 6)"/></svg>
<svg class="ab" style="left:631.7px;top:609.6px" width="12" height="12"><path d="M6,1.3 L10.7,6 L6,10.7 L1.3,6Z" fill="#6363c7" stroke="#111" stroke-width="0.8"/></svg>
<svg class="ab" style="left:631.7px;top:629.4px" width="12" height="12"><path d="M6,1.3 L10.7,6 L6,10.7 L1.3,6Z" fill="#6363c7" stroke="#111" stroke-width="0.8"/></svg>
<svg class="ab" style="left:772.1px;top:544.0px" width="12" height="12"><circle cx="6" cy="6" r="4" fill="#00d6a3" stroke="#111" stroke-width="0.8"/></svg>
<svg class="ab" style="left:772.1px;top:564.0px" width="12" height="12"><circle cx="6" cy="6" r="4" fill="none" stroke="#888" stroke-width="1.2"/></svg>
<svg class="ab" style="left:455.5px;top:653.6px" width="12" height="12"><path d="M6,1.3 L10.7,6 L6,10.7 L1.3,6Z" fill="#6363c7" stroke="#111" stroke-width="0.8"/></svg>
<svg class="ab" style="left:596.3px;top:688.6px" width="12" height="12"><path d="M6,1.3 L10.7,6 L6,10.7 L1.3,6Z" fill="#6363c7" stroke="#111" stroke-width="0.8"/></svg>
<svg class="ab" style="left:473.5px;top:738.0px" width="12" height="12"><path d="M6,1.3 L10.7,6 L6,10.7 L1.3,6Z" fill="#6363c7" stroke="#111" stroke-width="0.8"/></svg>
<svg class="ab" style="left:473.5px;top:758.0px" width="12" height="12"><path d="M6,1.3 L10.7,6 L6,10.7 L1.3,6Z" fill="#a1a1a1" stroke="#111" stroke-width="0.8"/></svg>
<svg class="ab" style="left:456.1px;top:706.0px" width="12" height="12"><path d="M6,1.3 L10.7,6 L6,10.7 L1.3,6Z" fill="#a1a1a1" stroke="#111" stroke-width="0.8"/></svg>
<svg class="ab" style="left:332.4px;top:774.7px" width="12" height="12"><path d="M6,1.3 L10.7,6 L6,10.7 L1.3,6Z" fill="#a1a1a1" stroke="#111" stroke-width="0.8"/></svg>
<svg class="ab" style="left:332.4px;top:794.8px" width="12" height="12"><path d="M6,1.3 L10.7,6 L6,10.7 L1.3,6Z" fill="#a1a1a1" stroke="#111" stroke-width="0.8"/><rect x="4.8" y="4.8" width="2.4" height="2.4" fill="#222" transform="rotate(45 6 6)"/></svg>
<svg class="ab" style="left:174.3px;top:705.8px" width="12" height="12"><path d="M6,1.3 L10.7,6 L6,10.7 L1.3,6Z" fill="#a1a1a1" stroke="#111" stroke-width="0.8"/></svg>
<svg class="ab" style="left:315.3px;top:705.8px" width="12" height="12"><path d="M6,1.3 L10.7,6 L6,10.7 L1.3,6Z" fill="#a1a1a1" stroke="#111" stroke-width="0.8"/></svg>
<svg class="ab" style="left:174.3px;top:725.8px" width="12" height="12"><path d="M6,1.3 L10.7,6 L6,10.7 L1.3,6Z" fill="#c7c729" stroke="#111" stroke-width="0.8"/></svg>
<svg class="ab" style="left:51.4px;top:773.6px" width="12" height="12"><path d="M6,1.3 L10.7,6 L6,10.7 L1.3,6Z" fill="#6363c7" stroke="#111" stroke-width="0.8"/></svg>
<svg class="ab" style="left:51.4px;top:793.2px" width="12" height="12"><path d="M6,1.3 L10.7,6 L6,10.7 L1.3,6Z" fill="#a1a1a1" stroke="#111" stroke-width="0.8"/><rect x="4.8" y="4.8" width="2.4" height="2.4" fill="#222" transform="rotate(45 6 6)"/></svg>
<svg class="ab" style="left:51.4px;top:813.5px" width="12" height="12"><path d="M6,1.3 L10.7,6 L6,10.7 L1.3,6Z" fill="#a1a1a1" stroke="#111" stroke-width="0.8"/><rect x="4.8" y="4.8" width="2.4" height="2.4" fill="#222" transform="rotate(45 6 6)"/></svg>
<svg class="ab" style="left:51.4px;top:833.5px" width="12" height="12"><path d="M6,1.3 L10.7,6 L6,10.7 L1.3,6Z" fill="#a1a1a1" stroke="#111" stroke-width="0.8"/><rect x="4.8" y="4.8" width="2.4" height="2.4" fill="#222" transform="rotate(45 6 6)"/></svg>
<svg class="ab" style="left:51.4px;top:853.1px" width="12" height="12"><path d="M6,1.3 L10.7,6 L6,10.7 L1.3,6Z" fill="#a1a1a1" stroke="#111" stroke-width="0.8"/><rect x="4.8" y="4.8" width="2.4" height="2.4" fill="#222" transform="rotate(45 6 6)"/></svg>
<svg class="ab" style="left:192.0px;top:774.9px" width="12" height="12"><path d="M6,1.3 L10.7,6 L6,10.7 L1.3,6Z" fill="#a1a1a1" stroke="#111" stroke-width="0.8"/></svg>
<svg class="ab" style="left:192.0px;top:794.5px" width="12" height="12"><path d="M6,1.3 L10.7,6 L6,10.7 L1.3,6Z" fill="#a1a1a1" stroke="#111" stroke-width="0.8"/><rect x="4.8" y="4.8" width="2.4" height="2.4" fill="#222" transform="rotate(45 6 6)"/></svg>
<svg class="ab" style="left:192.0px;top:814.5px" width="12" height="12"><path d="M6,1.3 L10.7,6 L6,10.7 L1.3,6Z" fill="#a1a1a1" stroke="#111" stroke-width="0.8"/><rect x="4.8" y="4.8" width="2.4" height="2.4" fill="#222" transform="rotate(45 6 6)"/></svg>
<svg class="ab" style="left:192.0px;top:835.0px" width="12" height="12"><path d="M6,1.3 L10.7,6 L6,10.7 L1.3,6Z" fill="#a1a1a1" stroke="#111" stroke-width="0.8"/><rect x="4.8" y="4.8" width="2.4" height="2.4" fill="#222" transform="rotate(45 6 6)"/></svg>
<svg class="ab" style="left:192.0px;top:854.7px" width="12" height="12"><path d="M6,1.3 L10.7,6 L6,10.7 L1.3,6Z" fill="#a1a1a1" stroke="#111" stroke-width="0.8"/><rect x="4.8" y="4.8" width="2.4" height="2.4" fill="#222" transform="rotate(45 6 6)"/></svg>
</body></html>
